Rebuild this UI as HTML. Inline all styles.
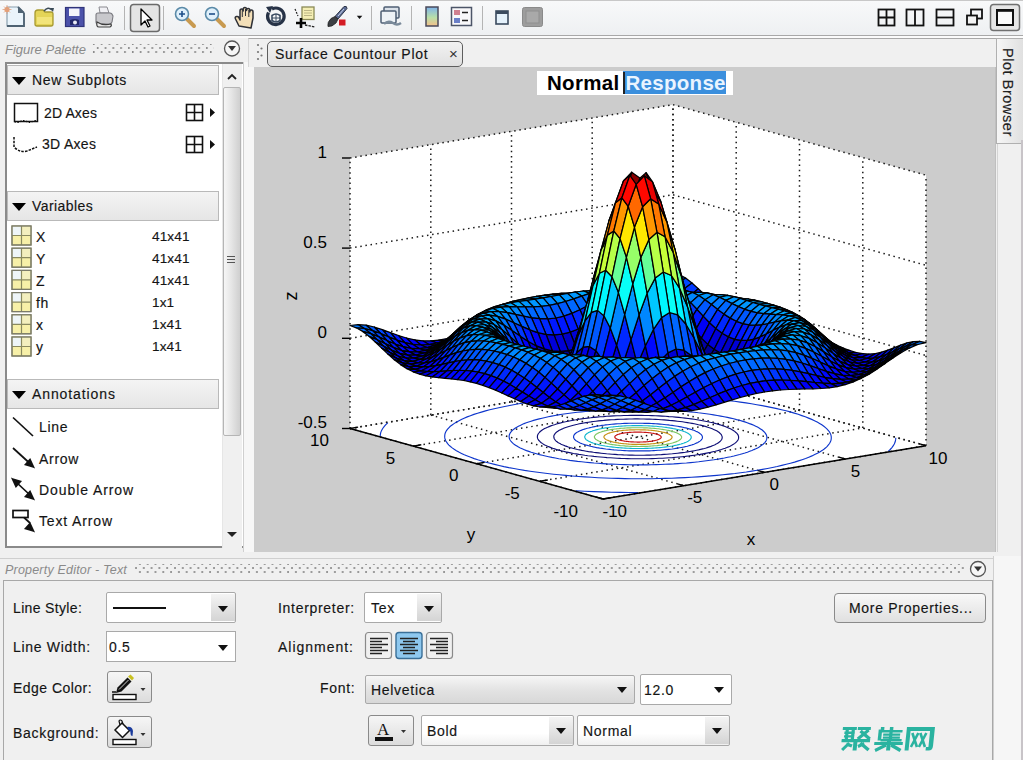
<!DOCTYPE html>
<html><head><meta charset="utf-8">
<style>
*{box-sizing:border-box}
html,body{margin:0;padding:0}
body{width:1023px;height:760px;position:relative;overflow:hidden;background:#f0f0f0;font-family:"Liberation Sans",sans-serif;color:#1e1e1e}
.a{position:absolute}
.t{position:absolute;white-space:nowrap;font-size:14px;letter-spacing:0.7px;line-height:16px;color:#141414;-webkit-text-stroke:0.15px #141414}
.sep{position:absolute;top:5px;width:2px;height:26px;border-left:1px solid #b8b8b8;border-right:1px solid #fff}
.hdr{position:absolute;left:7px;width:212px;height:30px;background:linear-gradient(#f4f4f4,#e6e6e6);border:1px solid #b9b9b9}
.hdr .tri{position:absolute;left:3.5px;top:11px;width:0;height:0;border-left:7px solid transparent;border-right:7px solid transparent;border-top:8px solid #000}
.hdr span{position:absolute;left:24px;top:6px;font-size:14px;letter-spacing:0.9px;white-space:nowrap;color:#141414;-webkit-text-stroke:0.15px #141414}
.combo{position:absolute;background:#fff;border:1px solid #a9a9a9;border-radius:2px}
.darr{position:absolute;width:0;height:0;border-left:5px solid transparent;border-right:5px solid transparent;border-top:6px solid #111}
.btn{position:absolute;border:1px solid #8a8a8a;border-radius:3px;background:linear-gradient(#f6f6f6,#dcdcdc)}
</style></head>
<body>
<!-- toolbar -->
<div class="a" style="left:0;top:0;width:1023px;height:36px;background:linear-gradient(#f8f9fa,#eef0f2);border-top:1px solid #c8c8c8;border-bottom:1px solid #a8a8a8"></div>
<div class="a" style="left:0;top:36px;width:1023px;height:2px;background:#fbfbfb"></div>
<svg class="a" style="left:0;top:0" width="1023" height="36">
  <!-- new -->
 <path d="M7 7h11l6 6v13H7z" fill="#eaf4fb" stroke="#8aa0b0" stroke-width="1.2"/>
 <path d="M18 7l6 6M24 13v13H7" fill="none" stroke="#4e6272" stroke-width="1.8"/>
 <path d="M18 7v6h6z" fill="#4e6272"/>
 <circle cx="7" cy="9.5" r="2.6" fill="#e8a070"/>
 <path d="M7 5v9M2.5 9.5h9M4 6.5l6 6M10 6.5l-6 6" stroke="#e0a080" stroke-width="0.8"/>
 <!-- open -->
 <path d="M35 13q0-3 3-3h5l2 2h6q2 0 2 2v10q0 2-2 2H37q-2 0-2-2z" fill="#e4d458" stroke="#a89a30" stroke-width="1.3"/>
 <path d="M37 17h15v7H37z" fill="#f2e47a"/>
 <path d="M44 11q4-5 8-1" fill="none" stroke="#3a4a56" stroke-width="1.5"/>
 <path d="M50 8l4 0-1 4z" fill="#3a4a56"/>
 <!-- save -->
 <rect x="65.5" y="7.5" width="18.5" height="19" fill="#4c52aa" stroke="#30347a" stroke-width="1.2"/>
 <rect x="69" y="8.5" width="10.5" height="7.5" fill="#f4f4fa"/>
 <path d="M70 20q5-2 9 0v5h-9z" fill="#23286a"/>
 <circle cx="75" cy="22.5" r="2" fill="#e8eaf6"/>
 <!-- print -->
 <path d="M99 7h8l2 6h-9z" fill="#f0f0f4" stroke="#8a8a90" stroke-width="1"/>
 <path d="M96 15q0-2 2-2h12q2 0 3 3l-1 6q-1 2-3 2H98q-2 0-2-2z" fill="#c8c8cc" stroke="#7a7a80" stroke-width="1.1"/>
 <path d="M97 22q6 4 14 2q1 2-1 3H99q-3 0-2-5z" fill="#e8e8e8" stroke="#3e3e3e" stroke-width="1.2"/>
<!-- pointer pressed -->
 <rect x="130.5" y="4.5" width="29" height="27" rx="3" fill="#e4e4e4" stroke="#6a6a6a" stroke-width="1.5"/>
 <path d="M141 9v16l4-4 3 6 2-1-3-6h5z" fill="#fff" stroke="#000" stroke-width="1.3" stroke-linejoin="round"/>
 <!-- zoom in -->
 <path d="M187 19l7 7" stroke="#c89a50" stroke-width="4" stroke-linecap="round"/>
 <circle cx="182" cy="14" r="6.5" fill="#dff0fb" stroke="#5a8aa8" stroke-width="1.6"/>
 <path d="M179 14h6M182 11v6" stroke="#1d4f8a" stroke-width="1.6"/>
 <!-- zoom out -->
 <path d="M217 19l7 7" stroke="#c89a50" stroke-width="4" stroke-linecap="round"/>
 <circle cx="212" cy="14" r="6.5" fill="#dff0fb" stroke="#5a8aa8" stroke-width="1.6"/>
 <path d="M209 14h6" stroke="#1d4f8a" stroke-width="1.6"/>
 <!-- hand -->
 <path d="M239 26l-3.5-7q-1-2 1-2.5t2.5 1.5l1 2v-9q0-2 1.6-2t1.6 2v-1.5q0-2 1.7-2t1.6 2v1q0-2 1.7-2t1.6 2v1.5q0-2 1.6-2t1.6 2v6l-2 10z" fill="#f3dfb8" stroke="#2e3036" stroke-width="1.5" stroke-linejoin="round"/>
 <path d="M242.3 10v7M245.5 9v7M248.8 10v7" stroke="#2e3036" stroke-width="1"/>
 <!-- rotate -->
 <path d="M268.5 12.5A8.3 8.3 0 1 0 272 9" fill="none" stroke="#263246" stroke-width="3.2"/>
 <path d="M266 7l7-1-3 7z" fill="#263246"/>
 <path d="M272 15.5q4-3 8 0v5q-4 3-8 0z" fill="none" stroke="#394a60" stroke-width="1.6"/>
 <path d="M276 14v8M272 18h8" stroke="#394a60" stroke-width="1"/>
 <!-- data cursor -->
 <rect x="302" y="7" width="12" height="12.5" fill="#f4eeb4" stroke="#8a8a56" stroke-width="1.3"/>
 <path d="M304 10.5h8M304 13h8M304 15.5h8" stroke="#b4ae80" stroke-width="0.9"/>
 <path d="M296 23h10M301 18v10" stroke="#050505" stroke-width="2.6"/>
 <path d="M295 9l3 7" stroke="#222" stroke-width="1.2" stroke-dasharray="2 1.2"/>
 <path d="M305 25l10 2" stroke="#222" stroke-width="1.3" stroke-dasharray="2.5 1"/>
 <!-- brush -->
 <path d="M344 6.5q3-1 3 2l-9 10.5-3-2.5z" fill="#5b6b94" stroke="#2d3446" stroke-width="1"/>
 <path d="M344 9l-6 7" stroke="#c8d4ec" stroke-width="1"/>
 <path d="M335 16.5l3 2.5-2 4q-4 4-8 3.5q-1-4 3-8z" fill="#3c3f44" stroke="#222" stroke-width="0.8"/>
 <rect x="339" y="19.5" width="6.5" height="6" fill="#d41c24"/>
 <path d="M356.8 15.7h5.5l-2.75 3.2z" fill="#111"/>
 <!-- link -->
 <rect x="384" y="7" width="15" height="11" rx="1" fill="#dbe2ea" stroke="#4f5f74" stroke-width="1.5"/>
 <rect x="381" y="11" width="15" height="12" rx="1" fill="#eef2f6" stroke="#4f5f74" stroke-width="1.5"/>
 <path d="M384 24q4-4 9-1q4 3 8 0" fill="none" stroke="#7a8a9a" stroke-width="2.4"/>
 <!-- colorbar -->
 <defs><linearGradient id="cb" x1="0" y1="0" x2="0" y2="1"><stop offset="0" stop-color="#7fb3ea"/><stop offset="0.55" stop-color="#b9dfa8"/><stop offset="1" stop-color="#f4c08a"/></linearGradient></defs>
 <rect x="426" y="7" width="12" height="19" fill="url(#cb)" stroke="#4a4a5a" stroke-width="1.5"/>
 <!-- legend -->
 <rect x="451.5" y="7.5" width="20" height="18" fill="#f8f8fa" stroke="#4c5568" stroke-width="1.5"/>
 <rect x="454" y="10" width="6" height="5" fill="#d08090"/>
 <rect x="454" y="18" width="6" height="5" fill="#6a7fc8"/>
 <path d="M462 12.5h6M462 20.5h6" stroke="#222" stroke-width="1.5"/>
 <!-- small window -->
 <rect x="496" y="11" width="12" height="13" fill="#e4f1fb" stroke="#3a4a5e" stroke-width="1.6"/>
 <rect x="496" y="11" width="12" height="3" fill="#3a4a5e"/>
 <!-- gray icon -->
 <rect x="522.5" y="7.5" width="20" height="19" rx="2" fill="#9d9d9d" stroke="#8a8a8a"/>
 <rect x="526" y="11" width="13" height="12" fill="#a9a9a9" stroke="#8f8f8f"/>
 <!-- right layout icons -->
 <g fill="none" stroke="#111" stroke-width="1.8">
  <rect x="878.5" y="9.5" width="16" height="16"/><path d="M886.5 9.5v16M878.5 17.5h16"/>
  <rect x="906.5" y="9.5" width="17" height="16"/><path d="M915 9.5v16"/>
  <rect x="936.5" y="9.5" width="17" height="16"/><path d="M936.5 17.5h17"/>
  <rect x="971" y="9.5" width="11" height="9"/><rect x="967" y="15.5" width="10" height="9" fill="#f3f3f3"/>
 </g>
 <rect x="990.5" y="4.5" width="29" height="26" rx="3" fill="#e6e6e6" stroke="#707070" stroke-width="1.5"/>
 <rect x="997" y="10" width="16" height="15" fill="#fbfbfb" stroke="#111" stroke-width="2"/><path d="M997 10.5h16" stroke="#111" stroke-width="2.6"/>
 <!-- separators -->
 <g stroke="#b4b4b4" stroke-width="1">
  <path d="M124.5 6v24M163.5 6v24M371.5 6v24M411.5 6v24M482.5 6v24"/>
 </g>
</svg>

<!-- left palette -->
<div class="a" style="left:0;top:38px;width:254px;height:516px;background:#f0f0f0"></div>
<div class="t" style="left:5px;top:42px;font-size:13px;font-style:italic;color:#8a8a8a;letter-spacing:0;-webkit-text-stroke:0">Figure Palette</div>
<svg class="a" style="left:92px;top:44px" width="122" height="10"><defs><pattern id="dp" width="7.8" height="8" patternUnits="userSpaceOnUse"><circle cx="5.7" cy="4" r="0.95" fill="#7a7a7a"/><circle cx="1.8" cy="8" r="0.95" fill="#7a7a7a"/><circle cx="1.8" cy="0" r="0.95" fill="#7a7a7a"/></pattern></defs><rect x="0" y="0" width="122" height="10" fill="url(#dp)"/></svg>
<svg class="a" style="left:222px;top:39px" width="20" height="20"><circle cx="10" cy="9.5" r="7.5" fill="#f6f6f6" stroke="#555" stroke-width="1.3"/><path d="M6 7h8l-4 5z" fill="#333"/></svg>
<div class="a" style="left:5px;top:62px;width:240px;height:486px;background:#fff;border:2px solid #8a8a8a;border-right-width:1px"></div>
<div class="a" style="left:243px;top:62px;width:11px;height:490px;background:#f7f7f7;border-left:1px solid #d0d0d0"></div>
<!-- scrollbar -->
<div class="a" style="left:222px;top:64px;width:20px;height:484px;background:#f0f0f0;border-left:1px solid #e6e6e6"></div>
<div class="a" style="left:223px;top:87px;width:18px;height:349px;background:linear-gradient(90deg,#f6f6f6,#e6e6e6 45%,#cfcfcf);border:1px solid #b5b5b5;border-radius:2px"></div>
<div class="a" style="left:227px;top:256px;width:8px;height:7px;background:repeating-linear-gradient(#555 0 1px,transparent 1px 3px)"></div>
<svg class="a" style="left:222px;top:64px" width="20" height="484"><path d="M6 15l4-4 4 4" fill="none" stroke="#222" stroke-width="1.8"/><path d="M5 468h10l-5 5z" fill="#222"/></svg>

<div class="hdr" style="top:65px"><div class="tri"></div><span style="letter-spacing:0.72px">New Subplots</span></div>
<svg class="a" style="left:10px;top:98px" width="212" height="60">
 <path d="M4.5 5.5h23v18h-23z" fill="none" stroke="#111" stroke-width="1.5"/>
 <path d="M4.5 23.5q3 2 6 0t6 0t6 0t5 0" fill="none" stroke="#111" stroke-width="1.2" stroke-dasharray="1.5 1.5"/>
 <path d="M4 39v10q6 6 13 4q5-2 10-4" fill="none" stroke="#111" stroke-width="1.5" stroke-dasharray="2.5 1.2"/>
 <g fill="none" stroke="#111" stroke-width="1.6"><rect x="176.5" y="6.5" width="16" height="16"/><path d="M184.5 6.5v16M176.5 14.5h16"/>
 <rect x="176.5" y="38.5" width="16" height="16"/><path d="M184.5 38.5v16M176.5 46.5h16"/></g>
 <path d="M200 10l5 4.5-5 4.5z M200 42l5 4.5-5 4.5z" fill="#111"/>
</svg>
<div class="t" style="left:44px;top:105px;letter-spacing:0.13px">2D Axes</div>
<div class="t" style="left:42px;top:136px;letter-spacing:0.3px">3D Axes</div>

<div class="hdr" style="top:191px"><div class="tri"></div><span style="letter-spacing:0.42px">Variables</span></div>
<svg class="a" style="left:11px;top:225px" width="22" height="134">
 <g stroke="#8a8a60" stroke-width="1.2">
 <g id="vi"><rect x="1" y="1" width="19" height="19" fill="#f7f0a8"/><rect x="1.5" y="1.5" width="9" height="9" fill="#eef5f8" stroke="none"/><rect x="10.5" y="1.5" width="9" height="9" fill="#f3efbe" stroke="none"/><path d="M10.5 1v19M1 10.5h19" fill="none"/><rect x="1" y="1" width="19" height="19" fill="none" stroke="#7a7a6a"/></g>
 <use href="#vi" y="22.2"/><use href="#vi" y="44.4"/><use href="#vi" y="66.6"/><use href="#vi" y="88.8"/><use href="#vi" y="111"/>
 </g>
</svg>
<div class="t" style="left:36px;top:229px">X</div><div class="t" style="left:152px;top:229px;letter-spacing:0.1px;font-size:13.6px">41x41</div>
<div class="t" style="left:36px;top:251px">Y</div><div class="t" style="left:152px;top:251px;letter-spacing:0.1px;font-size:13.6px">41x41</div>
<div class="t" style="left:36px;top:273px">Z</div><div class="t" style="left:152px;top:273px;letter-spacing:0.1px;font-size:13.6px">41x41</div>
<div class="t" style="left:36px;top:295px">fh</div><div class="t" style="left:152px;top:295px;letter-spacing:0.1px;font-size:13.6px">1x1</div>
<div class="t" style="left:36px;top:317px">x</div><div class="t" style="left:152px;top:317px;letter-spacing:0.1px;font-size:13.6px">1x41</div>
<div class="t" style="left:36px;top:339px">y</div><div class="t" style="left:152px;top:339px;letter-spacing:0.1px;font-size:13.6px">1x41</div>

<div class="hdr" style="top:379px"><div class="tri"></div><span>Annotations</span></div>
<svg class="a" style="left:10px;top:410px" width="30" height="125">
 <g stroke="#111" stroke-width="1.7" fill="#111">
 <path d="M3 7.5l20 18.5" fill="none"/>
 <path d="M3 38l17 15.5" fill="none"/><path d="M23.5 57l-8-2.5 4.5-5z"/>
 <path d="M6 72l14 13" fill="none"/><path d="M23.5 89l-8-2.5 4.5-5z M2.5 69l8 2.5-4.5 5z"/>
 <rect x="3" y="100.5" width="15" height="7" fill="none"/><path d="M14 107.5l6 5.5" fill="none"/><path d="M23.5 121l-8-2.5 4.5-5z"/>
 </g>
</svg>
<div class="t" style="left:39px;top:419px">Line</div>
<div class="t" style="left:39px;top:451px">Arrow</div>
<div class="t" style="left:39px;top:482px;letter-spacing:0.92px">Double Arrow</div>
<div class="t" style="left:39px;top:513px;letter-spacing:0.85px">Text Arrow</div>

<!-- figure area -->
<div class="a" style="left:248px;top:38px;width:749px;height:29px;background:#f0f0f0;border-top:1px solid #a8a8a8;border-left:1px solid #d6d6d6"></div>
<svg class="a" style="left:255px;top:42px" width="10" height="22"><g fill="#777"><circle cx="3" cy="3" r="1.1"/><circle cx="6.5" cy="6.5" r="1.1"/><circle cx="3" cy="10" r="1.1"/><circle cx="6.5" cy="13.5" r="1.1"/><circle cx="3" cy="17" r="1.1"/></g></svg>
<div class="a" style="left:267px;top:41px;width:196px;height:26px;border:1.6px solid #5e5e5e;border-radius:5px;background:linear-gradient(#f2f2f2,#e0e0e0)"></div>
<div class="t" style="left:275px;top:46px;letter-spacing:0.75px">Surface Countour Plot</div>
<div class="t" style="left:449px;top:46px;font-size:15px;color:#333;-webkit-text-stroke:0">&#215;</div>
<div class="a" style="left:254px;top:67px;width:742px;height:485px;background:#cccccc;overflow:hidden;border-right:1px solid #bfbfbf">
 <div class="a" style="left:-254px;top:-67px;width:1023px;height:760px">
<svg width="1023" height="760" style="position:absolute;left:0;top:0">
<style>.gd{stroke:#1a1a1a;stroke-width:1.5;stroke-dasharray:1.5 3.7}</style>
<polygon points="350,428.5 673,375.2 673,104.7 350,158" fill="#fff"/><polygon points="673,375.2 926,445.7 926,175.2 673,104.7" fill="#fff"/><polygon points="350,428.5 603,499 926,445.7 673,375.2" fill="#fff"/><g><line x1="350" y1="428.5" x2="350" y2="158" class="gd"/><line x1="430.8" y1="415.1" x2="430.8" y2="144.6" class="gd"/><line x1="511.5" y1="401.8" x2="511.5" y2="131.3" class="gd"/><line x1="592.2" y1="388.5" x2="592.2" y2="118" class="gd"/><line x1="673" y1="375.2" x2="673" y2="104.7" class="gd"/><line x1="350" y1="428.5" x2="673" y2="375.2" class="gd"/><line x1="350" y1="338.3" x2="673" y2="285" class="gd"/><line x1="350" y1="248.1" x2="673" y2="194.8" class="gd"/><line x1="350" y1="158" x2="673" y2="104.7" class="gd"/><line x1="673" y1="375.2" x2="673" y2="104.7" class="gd"/><line x1="736.2" y1="392.8" x2="736.2" y2="122.3" class="gd"/><line x1="799.5" y1="410.4" x2="799.5" y2="139.9" class="gd"/><line x1="862.8" y1="428" x2="862.8" y2="157.5" class="gd"/><line x1="926" y1="445.7" x2="926" y2="175.2" class="gd"/><line x1="673" y1="375.2" x2="926" y2="445.7" class="gd"/><line x1="673" y1="285" x2="926" y2="355.5" class="gd"/><line x1="673" y1="194.8" x2="926" y2="265.3" class="gd"/><line x1="673" y1="104.7" x2="926" y2="175.2" class="gd"/><line x1="350" y1="428.5" x2="603" y2="499" class="gd"/><line x1="430.8" y1="415.1" x2="683.8" y2="485.6" class="gd"/><line x1="511.5" y1="401.8" x2="764.5" y2="472.3" class="gd"/><line x1="592.2" y1="388.5" x2="845.2" y2="459" class="gd"/><line x1="673" y1="375.2" x2="926" y2="445.7" class="gd"/><line x1="603" y1="499" x2="926" y2="445.7" class="gd"/><line x1="539.8" y1="481.3" x2="862.8" y2="428" class="gd"/><line x1="476.5" y1="463.7" x2="799.5" y2="410.4" class="gd"/><line x1="413.2" y1="446.1" x2="736.2" y2="392.8" class="gd"/><line x1="350" y1="428.5" x2="673" y2="375.2" class="gd"/></g><g fill="none" stroke-width="1.15"><polyline points="704.3,426.1 702.4,425.6 700.5,425.1 698.5,424.7 696.4,424.2 694.3,423.8 692,423.4 689.8,423 687.4,422.6 685,422.2 682.5,421.8 680,421.5 677.4,421.2 674.8,420.9 672.2,420.6 669.4,420.4 666.7,420.1 663.9,419.9 661.1,419.7 658.3,419.5 655.4,419.4 652.5,419.3 649.6,419.1 646.7,419.1 643.8,419 640.8,419 637.9,418.9 635,418.9 632,419 629.1,419 626.2,419.1 623.3,419.2 620.4,419.3 617.5,419.4 614.7,419.6 611.9,419.7 609.1,419.9 606.4,420.1 603.7,420.4 601,420.6 598.4,420.9 595.8,421.2 593.3,421.5 590.8,421.9 588.4,422.2 586.1,422.6 583.8,423 581.6,423.4 579.4,423.8 577.4,424.3 575.4,424.7 573.4,425.2 571.6,425.7 569.8,426.2 568.1,426.7 566.5,427.2 565,427.7 563.6,428.3 562.3,428.9 561,429.4 559.9,430 558.8,430.6 557.9,431.2 557,431.8 556.3,432.4 555.6,433 555.1,433.6 554.6,434.3 554.2,434.9 554,435.5 553.8,436.1 553.8,436.8 553.9,437.4 554,438 554.3,438.7 554.6,439.3 555.1,439.9 555.7,440.6 556.3,441.2 557.1,441.8 557.9,442.4 558.9,443 560,443.6 561.1,444.2 562.4,444.8 563.7,445.3 565.1,445.9 566.6,446.4 568.3,447 569.9,447.5 571.7,448 573.6,448.5 575.5,449 577.5,449.5 579.6,449.9 581.7,450.4 584,450.8 586.2,451.2 588.6,451.6 591,451.9 593.5,452.3 596,452.6 598.6,452.9 601.2,453.2 603.8,453.5 606.6,453.8 609.3,454 612.1,454.2 614.9,454.4 617.7,454.6 620.6,454.7 623.5,454.9 626.4,455 629.3,455.1 632.2,455.1 635.2,455.2 638.1,455.2 641,455.2 644,455.2 646.9,455.1 649.8,455.1 652.7,455 655.6,454.9 658.5,454.7 661.3,454.6 664.1,454.4 666.9,454.2 669.6,454 672.3,453.8 675,453.5 677.6,453.2 680.2,452.9 682.7,452.6 685.2,452.3 687.6,451.9 689.9,451.5 692.2,451.1 694.4,450.7 696.6,450.3 698.6,449.9 700.6,449.4 702.6,448.9 704.4,448.5 706.2,448 707.9,447.4 709.5,446.9 711,446.4 712.4,445.8 713.7,445.3 715,444.7 716.1,444.1 717.2,443.5 718.1,442.9 719,442.3 719.7,441.7 720.4,441.1 720.9,440.5 721.4,439.9 721.8,439.2 722,438.6 722.2,438 722.2,437.4 722.1,436.7 722,436.1 721.7,435.5 721.4,434.8 720.9,434.2 720.3,433.6 719.7,433 718.9,432.3 718.1,431.7 717.1,431.1 716,430.5 714.9,430 713.6,429.4 712.3,428.8 710.9,428.2 709.4,427.7 707.7,427.2 706.1,426.6 704.3,426.1" stroke="#0e0e76"/><polyline points="717.2,424 715,423.4 712.7,422.8 710.3,422.3 707.8,421.7 705.3,421.2 702.6,420.7 699.9,420.2 697.1,419.7 694.2,419.3 691.2,418.9 688.2,418.5 685.1,418.1 682,417.7 678.8,417.4 675.6,417.1 672.3,416.8 669,416.6 665.6,416.3 662.2,416.1 658.8,415.9 655.4,415.8 651.9,415.6 648.4,415.5 644.9,415.5 641.4,415.4 637.9,415.4 634.4,415.4 630.9,415.4 627.4,415.5 623.9,415.5 620.4,415.7 617,415.8 613.5,415.9 610.1,416.1 606.8,416.3 603.5,416.6 600.2,416.8 596.9,417.1 593.8,417.4 590.6,417.8 587.6,418.1 584.6,418.5 581.6,418.9 578.7,419.3 575.9,419.8 573.2,420.2 570.6,420.7 568,421.2 565.5,421.8 563.1,422.3 560.8,422.9 558.6,423.4 556.5,424 554.5,424.7 552.6,425.3 550.8,425.9 549.1,426.6 547.5,427.3 546,427.9 544.6,428.6 543.4,429.3 542.2,430 541.2,430.8 540.3,431.5 539.5,432.2 538.9,433 538.3,433.7 537.9,434.5 537.6,435.2 537.4,436 537.4,436.7 537.4,437.5 537.6,438.2 537.9,439 538.3,439.7 538.9,440.5 539.6,441.2 540.4,442 541.3,442.7 542.3,443.4 543.5,444.2 544.7,444.9 546.1,445.6 547.6,446.3 549.2,446.9 550.9,447.6 552.7,448.3 554.6,448.9 556.6,449.5 558.8,450.1 561,450.7 563.3,451.3 565.7,451.9 568.2,452.4 570.7,452.9 573.4,453.5 576.1,453.9 578.9,454.4 581.8,454.8 584.8,455.3 587.8,455.7 590.9,456 594,456.4 597.2,456.7 600.4,457 603.7,457.3 607,457.6 610.4,457.8 613.8,458 617.2,458.2 620.6,458.4 624.1,458.5 627.6,458.6 631.1,458.7 634.6,458.7 638.1,458.7 641.6,458.7 645.1,458.7 648.6,458.7 652.1,458.6 655.6,458.5 659,458.3 662.5,458.2 665.9,458 669.2,457.8 672.5,457.6 675.8,457.3 679.1,457 682.2,456.7 685.4,456.4 688.4,456 691.4,455.6 694.4,455.2 697.3,454.8 700.1,454.4 702.8,453.9 705.4,453.4 708,452.9 710.5,452.4 712.9,451.8 715.2,451.3 717.4,450.7 719.5,450.1 721.5,449.5 723.4,448.8 725.2,448.2 726.9,447.5 728.5,446.9 730,446.2 731.4,445.5 732.6,444.8 733.8,444.1 734.8,443.4 735.7,442.6 736.5,441.9 737.1,441.2 737.7,440.4 738.1,439.7 738.4,438.9 738.6,438.2 738.6,437.4 738.6,436.7 738.4,435.9 738.1,435.1 737.7,434.4 737.1,433.6 736.4,432.9 735.6,432.2 734.7,431.4 733.7,430.7 732.5,430 731.3,429.3 729.9,428.6 728.4,427.9 726.8,427.2 725.1,426.5 723.3,425.9 721.4,425.2 719.4,424.6 717.2,424" stroke="#0e0e76"/><polyline points="688.7,428.7 687.3,428.3 685.8,427.9 684.3,427.6 682.7,427.2 681.1,426.9 679.4,426.6 677.6,426.3 675.8,426 674,425.7 672.1,425.4 670.2,425.2 668.2,424.9 666.2,424.7 664.1,424.5 662.1,424.3 660,424.1 657.8,423.9 655.7,423.8 653.5,423.6 651.3,423.5 649.1,423.4 646.9,423.3 644.7,423.3 642.4,423.2 640.2,423.2 637.9,423.2 635.7,423.2 633.4,423.2 631.2,423.2 629,423.3 626.7,423.4 624.5,423.4 622.3,423.5 620.2,423.7 618,423.8 615.9,423.9 613.8,424.1 611.7,424.3 609.7,424.5 607.7,424.7 605.7,424.9 603.8,425.2 601.9,425.4 600.1,425.7 598.3,426 596.5,426.3 594.8,426.6 593.2,426.9 591.6,427.3 590.1,427.6 588.6,428 587.2,428.3 585.8,428.7 584.5,429.1 583.3,429.5 582.1,429.9 581.1,430.4 580,430.8 579.1,431.2 578.2,431.7 577.4,432.1 576.7,432.6 576,433 575.4,433.5 574.9,434 574.5,434.4 574.2,434.9 573.9,435.4 573.7,435.9 573.6,436.4 573.6,436.8 573.6,437.3 573.7,437.8 573.9,438.3 574.2,438.8 574.5,439.3 575,439.7 575.5,440.2 576.1,440.7 576.7,441.1 577.5,441.6 578.3,442.1 579.2,442.5 580.1,443 581.1,443.4 582.2,443.8 583.4,444.2 584.6,444.6 585.9,445 587.3,445.4 588.7,445.8 590.2,446.2 591.7,446.5 593.3,446.9 594.9,447.2 596.6,447.6 598.4,447.9 600.2,448.2 602,448.4 603.9,448.7 605.8,449 607.8,449.2 609.8,449.4 611.9,449.7 613.9,449.9 616,450 618.2,450.2 620.3,450.3 622.5,450.5 624.7,450.6 626.9,450.7 629.1,450.8 631.3,450.8 633.6,450.9 635.8,450.9 638.1,450.9 640.3,450.9 642.6,450.9 644.8,450.9 647,450.8 649.3,450.8 651.5,450.7 653.7,450.6 655.8,450.5 658,450.3 660.1,450.2 662.2,450 664.3,449.8 666.3,449.6 668.3,449.4 670.3,449.2 672.2,449 674.1,448.7 675.9,448.4 677.7,448.1 679.5,447.8 681.2,447.5 682.8,447.2 684.4,446.9 685.9,446.5 687.4,446.2 688.8,445.8 690.2,445.4 691.5,445 692.7,444.6 693.9,444.2 694.9,443.8 696,443.3 696.9,442.9 697.8,442.5 698.6,442 699.3,441.6 700,441.1 700.6,440.6 701.1,440.2 701.5,439.7 701.8,439.2 702.1,438.7 702.3,438.3 702.4,437.8 702.4,437.3 702.4,436.8 702.3,436.3 702.1,435.8 701.8,435.4 701.5,434.9 701,434.4 700.5,433.9 699.9,433.5 699.3,433 698.5,432.5 697.7,432.1 696.8,431.6 695.9,431.2 694.9,430.7 693.8,430.3 692.6,429.9 691.4,429.5 690.1,429.1 688.7,428.7" stroke="#0e36cc"/><polyline points="739.5,420.3 736.6,419.6 733.7,418.8 730.6,418.1 727.4,417.4 724.1,416.7 720.7,416.1 717.2,415.5 713.6,414.9 709.9,414.3 706.2,413.8 702.3,413.2 698.4,412.8 694.4,412.3 690.3,411.9 686.1,411.5 681.9,411.1 677.7,410.8 673.4,410.5 669,410.2 664.6,410 660.2,409.8 655.8,409.6 651.3,409.5 646.8,409.4 642.3,409.3 637.8,409.3 633.3,409.3 628.8,409.3 624.4,409.4 619.9,409.5 615.5,409.6 611,409.8 606.7,410 602.3,410.3 598,410.5 593.8,410.8 589.6,411.2 585.4,411.5 581.4,411.9 577.3,412.3 573.4,412.8 569.6,413.3 565.8,413.8 562.1,414.3 558.5,414.9 555,415.5 551.6,416.1 548.3,416.8 545.2,417.5 542.1,418.2 539.2,418.9 536.3,419.6 533.6,420.4 531.1,421.2 528.6,422 526.3,422.8 524.1,423.6 522.1,424.5 520.2,425.4 518.4,426.3 516.8,427.2 515.4,428.1 514.1,429 512.9,429.9 511.9,430.9 511,431.8 510.3,432.8 509.8,433.7 509.4,434.7 509.2,435.7 509.1,436.6 509.2,437.6 509.4,438.6 509.8,439.5 510.4,440.5 511.1,441.5 512,442.4 513,443.4 514.1,444.3 515.5,445.2 516.9,446.1 518.5,447.1 520.3,448 522.2,448.8 524.3,449.7 526.5,450.6 528.8,451.4 531.2,452.2 533.8,453 536.5,453.8 539.4,454.6 542.3,455.3 545.4,456 548.6,456.7 551.9,457.4 555.3,458 558.8,458.7 562.4,459.3 566.1,459.8 569.8,460.4 573.7,460.9 577.6,461.4 581.6,461.8 585.7,462.2 589.9,462.6 594.1,463 598.3,463.3 602.6,463.6 607,463.9 611.4,464.1 615.8,464.3 620.2,464.5 624.7,464.6 629.2,464.7 633.7,464.8 638.2,464.8 642.7,464.8 647.2,464.8 651.6,464.7 656.1,464.6 660.5,464.5 665,464.3 669.3,464.1 673.7,463.9 678,463.6 682.2,463.3 686.4,463 690.6,462.6 694.6,462.2 698.7,461.8 702.6,461.3 706.4,460.8 710.2,460.3 713.9,459.8 717.5,459.2 721,458.6 724.4,458 727.7,457.3 730.8,456.7 733.9,456 736.8,455.2 739.7,454.5 742.4,453.7 744.9,453 747.4,452.2 749.7,451.3 751.9,450.5 753.9,449.6 755.8,448.8 757.6,447.9 759.2,447 760.6,446.1 761.9,445.1 763.1,444.2 764.1,443.3 765,442.3 765.7,441.4 766.2,440.4 766.6,439.4 766.8,438.5 766.9,437.5 766.8,436.5 766.6,435.6 766.2,434.6 765.6,433.6 764.9,432.7 764,431.7 763,430.8 761.9,429.8 760.5,428.9 759.1,428 757.5,427.1 755.7,426.2 753.8,425.3 751.7,424.4 749.5,423.6 747.2,422.7 744.8,421.9 742.2,421.1 739.5,420.3" stroke="#0e36cc"/><polyline points="790.2,411.9 786,410.8 781.5,409.7 776.9,408.6 772.1,407.6 767.2,406.6 762.1,405.6 756.8,404.7 751.5,403.8 745.9,402.9 740.3,402.1 734.5,401.3 728.6,400.6 722.5,399.9 716.4,399.3 710.2,398.7 703.9,398.2 697.5,397.7 691.1,397.2 684.5,396.8 678,396.5 671.3,396.2 664.7,395.9 658,395.7 651.2,395.6 644.5,395.5 637.8,395.4 631,395.4 624.3,395.5 617.6,395.6 610.9,395.7 604.2,395.9 597.6,396.2 591,396.5 584.5,396.9 578,397.3 571.6,397.7 565.4,398.2 559.1,398.8 553,399.3 547,400 541.1,400.7 535.3,401.4 529.7,402.2 524.2,403 518.8,403.8 513.5,404.7 508.5,405.7 503.5,406.7 498.8,407.7 494.2,408.7 489.7,409.8 485.5,410.9 481.4,412.1 477.6,413.2 473.9,414.4 470.4,415.7 467.2,416.9 464.1,418.2 461.3,419.5 458.6,420.9 456.2,422.2 454,423.6 452.1,425 450.3,426.3 448.8,427.8 447.6,429.2 446.5,430.6 445.7,432.1 445.1,433.5 444.8,435 444.7,436.4 444.8,437.9 445.1,439.3 445.7,440.8 446.6,442.2 447.6,443.6 448.9,445.1 450.5,446.5 452.2,447.9 454.2,449.3 456.4,450.7 458.8,452.1 461.5,453.4 464.3,454.7 467.4,456 470.7,457.3 474.2,458.6 477.8,459.8 481.7,461 485.8,462.2 490,463.3 494.5,464.4 499.1,465.5 503.9,466.6 508.8,467.6 513.9,468.5 519.2,469.5 524.5,470.4 530.1,471.2 535.7,472 541.5,472.8 547.4,473.5 553.5,474.2 559.6,474.8 565.8,475.4 572.1,476 578.5,476.5 584.9,476.9 591.5,477.3 598,477.7 604.7,478 611.3,478.2 618,478.4 624.8,478.6 631.5,478.7 638.2,478.7 645,478.7 651.7,478.7 658.4,478.5 665.1,478.4 671.8,478.2 678.4,477.9 685,477.6 691.5,477.3 698,476.9 704.4,476.4 710.6,475.9 716.9,475.4 723,474.8 729,474.1 734.9,473.5 740.7,472.7 746.3,472 751.8,471.1 757.2,470.3 762.5,469.4 767.5,468.5 772.5,467.5 777.2,466.5 781.8,465.4 786.3,464.3 790.5,463.2 794.6,462.1 798.4,460.9 802.1,459.7 805.6,458.5 808.8,457.2 811.9,455.9 814.7,454.6 817.4,453.3 819.8,451.9 822,450.6 823.9,449.2 825.7,447.8 827.2,446.4 828.4,444.9 829.5,443.5 830.3,442.1 830.9,440.6 831.2,439.2 831.3,437.7 831.2,436.3 830.9,434.8 830.3,433.4 829.4,431.9 828.4,430.5 827.1,429.1 825.5,427.6 823.8,426.2 821.8,424.8 819.6,423.4 817.2,422.1 814.5,420.7 811.7,419.4 808.6,418.1 805.3,416.8 801.8,415.6 798.2,414.3 794.3,413.1 790.2,411.9" stroke="#0e36cc"/><polyline points="700.1,383.4 691.3,382.9 682.5,382.5 673.6,382.2 664.6,381.9 655.7,381.7 646.7,381.6 637.7,381.5" stroke="#0e36cc"/><polyline points="387.8,422.8 385.8,424.7 384.1,426.6 382.7,428.5 381.6,430.4 380.8,432.3 380.4,434.2 380.2,436.2" stroke="#0e36cc"/><polyline points="575.9,490.7 584.7,491.2 593.5,491.6 602.4,491.9 611.4,492.2 620.3,492.4 629.3,492.5 638.3,492.6" stroke="#0e36cc"/><polyline points="888.2,451.4 890.2,449.5 891.9,447.6 893.3,445.7 894.4,443.7 895.2,441.8 895.6,439.9 895.8,437.9" stroke="#0e36cc"/><polyline points="679.9,430.1 678.7,429.8 677.5,429.5 676.3,429.2 674.9,428.9 673.6,428.7 672.2,428.4 670.7,428.1 669.2,427.9 667.7,427.7 666.2,427.4 664.6,427.2 662.9,427 661.3,426.8 659.6,426.7 657.9,426.5 656.2,426.3 654.4,426.2 652.6,426.1 650.8,426 649,425.9 647.2,425.8 645.3,425.7 643.5,425.7 641.6,425.6 639.8,425.6 637.9,425.6 636.1,425.6 634.2,425.6 632.4,425.6 630.5,425.7 628.7,425.7 626.9,425.8 625.1,425.9 623.3,426 621.5,426.1 619.7,426.2 618,426.4 616.3,426.5 614.6,426.7 612.9,426.9 611.3,427 609.7,427.2 608.2,427.5 606.6,427.7 605.2,427.9 603.7,428.2 602.3,428.4 601,428.7 599.6,429 598.4,429.3 597.2,429.6 596,429.9 594.9,430.2 593.8,430.5 592.8,430.8 591.9,431.2 591,431.5 590.1,431.9 589.3,432.2 588.6,432.6 587.9,433 587.3,433.3 586.8,433.7 586.3,434.1 585.9,434.5 585.5,434.9 585.3,435.3 585,435.7 584.9,436.1 584.8,436.5 584.7,436.9 584.8,437.3 584.9,437.7 585,438.1 585.3,438.5 585.6,438.9 585.9,439.3 586.3,439.7 586.8,440.1 587.4,440.4 588,440.8 588.7,441.2 589.4,441.6 590.2,441.9 591,442.3 591.9,442.6 592.9,443 593.9,443.3 595,443.7 596.1,444 597.3,444.3 598.5,444.6 599.7,444.9 601.1,445.2 602.4,445.5 603.8,445.7 605.3,446 606.8,446.2 608.3,446.5 609.8,446.7 611.4,446.9 613.1,447.1 614.7,447.3 616.4,447.5 618.1,447.6 619.8,447.8 621.6,447.9 623.4,448 625.2,448.1 627,448.2 628.8,448.3 630.7,448.4 632.5,448.5 634.4,448.5 636.2,448.5 638.1,448.5 639.9,448.5 641.8,448.5 643.6,448.5 645.5,448.4 647.3,448.4 649.1,448.3 650.9,448.2 652.7,448.1 654.5,448 656.3,447.9 658,447.8 659.7,447.6 661.4,447.5 663.1,447.3 664.7,447.1 666.3,446.9 667.8,446.7 669.4,446.5 670.8,446.2 672.3,446 673.7,445.7 675,445.4 676.4,445.2 677.6,444.9 678.8,444.6 680,444.3 681.1,444 682.2,443.6 683.2,443.3 684.1,443 685,442.6 685.9,442.3 686.7,441.9 687.4,441.5 688.1,441.2 688.7,440.8 689.2,440.4 689.7,440 690.1,439.6 690.5,439.2 690.7,438.8 691,438.4 691.1,438 691.2,437.6 691.3,437.2 691.2,436.8 691.1,436.4 691,436 690.7,435.6 690.4,435.3 690.1,434.9 689.7,434.5 689.2,434.1 688.6,433.7 688,433.3 687.3,432.9 686.6,432.6 685.8,432.2 685,431.8 684.1,431.5 683.1,431.1 682.1,430.8 681,430.5 679.9,430.1" stroke="#0eb5cc"/><polyline points="672.3,431.4 671.4,431.1 670.4,430.9 669.3,430.6 668.2,430.4 667.1,430.2 666,430 664.8,429.8 663.6,429.6 662.3,429.4 661.1,429.2 659.8,429 658.4,428.8 657.1,428.7 655.7,428.5 654.3,428.4 652.9,428.3 651.4,428.2 650,428.1 648.5,428 647,427.9 645.5,427.8 644,427.8 642.5,427.7 641,427.7 639.5,427.7 637.9,427.7 636.4,427.7 634.9,427.7 633.4,427.7 631.9,427.7 630.4,427.8 628.9,427.8 627.4,427.9 625.9,428 624.5,428.1 623,428.2 621.6,428.3 620.2,428.4 618.8,428.6 617.5,428.7 616.2,428.9 614.8,429 613.6,429.2 612.3,429.4 611.1,429.6 609.9,429.8 608.8,430 607.7,430.2 606.6,430.4 605.6,430.7 604.6,430.9 603.6,431.2 602.7,431.4 601.8,431.7 601,432 600.2,432.2 599.5,432.5 598.8,432.8 598.1,433.1 597.6,433.4 597,433.7 596.5,434 596.1,434.3 595.7,434.6 595.3,435 595.1,435.3 594.8,435.6 594.6,435.9 594.5,436.3 594.4,436.6 594.4,436.9 594.4,437.2 594.5,437.6 594.6,437.9 594.8,438.2 595.1,438.5 595.4,438.9 595.7,439.2 596.1,439.5 596.6,439.8 597,440.1 597.6,440.4 598.2,440.7 598.8,441 599.5,441.3 600.3,441.6 601.1,441.9 601.9,442.2 602.8,442.5 603.7,442.7 604.6,443 605.6,443.2 606.7,443.5 607.8,443.7 608.9,443.9 610,444.2 611.2,444.4 612.4,444.6 613.7,444.8 614.9,444.9 616.2,445.1 617.6,445.3 618.9,445.4 620.3,445.6 621.7,445.7 623.1,445.8 624.6,445.9 626,446.1 627.5,446.1 629,446.2 630.5,446.3 632,446.3 633.5,446.4 635,446.4 636.5,446.4 638.1,446.5 639.6,446.5 641.1,446.4 642.6,446.4 644.1,446.4 645.6,446.3 647.1,446.3 648.6,446.2 650.1,446.1 651.5,446 653,445.9 654.4,445.8 655.8,445.7 657.2,445.6 658.5,445.4 659.8,445.3 661.2,445.1 662.4,444.9 663.7,444.7 664.9,444.6 666.1,444.4 667.2,444.1 668.3,443.9 669.4,443.7 670.4,443.5 671.4,443.2 672.4,443 673.3,442.7 674.2,442.4 675,442.2 675.8,441.9 676.5,441.6 677.2,441.3 677.9,441 678.4,440.7 679,440.4 679.5,440.1 679.9,439.8 680.3,439.5 680.7,439.2 680.9,438.8 681.2,438.5 681.4,438.2 681.5,437.9 681.6,437.5 681.6,437.2 681.6,436.9 681.5,436.6 681.4,436.2 681.2,435.9 680.9,435.6 680.6,435.3 680.3,434.9 679.9,434.6 679.4,434.3 679,434 678.4,433.7 677.8,433.4 677.2,433.1 676.5,432.8 675.7,432.5 674.9,432.2 674.1,431.9 673.2,431.7 672.3,431.4" stroke="#7bc65f"/><polyline points="664.8,432.6 664.1,432.4 663.3,432.2 662.5,432.1 661.6,431.9 660.8,431.7 659.9,431.5 658.9,431.4 658,431.2 657,431 656,430.9 655,430.8 654,430.6 652.9,430.5 651.8,430.4 650.7,430.3 649.6,430.2 648.5,430.1 647.3,430 646.2,430 645,429.9 643.9,429.9 642.7,429.8 641.5,429.8 640.3,429.8 639.1,429.7 638,429.7 636.8,429.7 635.6,429.7 634.4,429.8 633.2,429.8 632,429.8 630.9,429.9 629.7,429.9 628.6,430 627.4,430.1 626.3,430.1 625.2,430.2 624.1,430.3 623,430.4 622,430.5 620.9,430.7 619.9,430.8 618.9,430.9 617.9,431.1 617,431.2 616.1,431.4 615.2,431.5 614.3,431.7 613.5,431.9 612.7,432.1 611.9,432.3 611.1,432.5 610.4,432.7 609.7,432.9 609.1,433.1 608.5,433.3 607.9,433.5 607.4,433.7 606.9,434 606.4,434.2 606,434.4 605.6,434.7 605.3,434.9 604.9,435.2 604.7,435.4 604.5,435.7 604.3,435.9 604.1,436.2 604,436.4 604,436.7 603.9,436.9 604,437.2 604,437.5 604.1,437.7 604.3,438 604.5,438.2 604.7,438.5 605,438.7 605.3,439 605.6,439.2 606,439.5 606.4,439.7 606.9,439.9 607.4,440.2 608,440.4 608.5,440.6 609.1,440.9 609.8,441.1 610.5,441.3 611.2,441.5 611.9,441.7 612.7,441.9 613.5,442.1 614.4,442.3 615.2,442.4 616.1,442.6 617.1,442.8 618,442.9 619,443.1 620,443.2 621,443.4 622,443.5 623.1,443.6 624.2,443.7 625.3,443.8 626.4,443.9 627.5,444 628.7,444.1 629.8,444.2 631,444.2 632.1,444.3 633.3,444.3 634.5,444.3 635.7,444.4 636.9,444.4 638,444.4 639.2,444.4 640.4,444.4 641.6,444.4 642.8,444.3 644,444.3 645.1,444.3 646.3,444.2 647.4,444.1 648.6,444.1 649.7,444 650.8,443.9 651.9,443.8 653,443.7 654,443.6 655.1,443.5 656.1,443.3 657.1,443.2 658.1,443.1 659,442.9 659.9,442.8 660.8,442.6 661.7,442.4 662.5,442.2 663.3,442.1 664.1,441.9 664.9,441.7 665.6,441.5 666.3,441.3 666.9,441.1 667.5,440.8 668.1,440.6 668.6,440.4 669.1,440.2 669.6,439.9 670,439.7 670.4,439.4 670.7,439.2 671.1,439 671.3,438.7 671.5,438.5 671.7,438.2 671.9,437.9 672,437.7 672,437.4 672.1,437.2 672,436.9 672,436.7 671.9,436.4 671.7,436.2 671.5,435.9 671.3,435.7 671,435.4 670.7,435.2 670.4,434.9 670,434.7 669.6,434.4 669.1,434.2 668.6,434 668,433.7 667.5,433.5 666.9,433.3 666.2,433.1 665.5,432.8 664.8,432.6" stroke="#c69214"/><polyline points="656.3,434.1 655.8,433.9 655.2,433.8 654.7,433.7 654.1,433.5 653.5,433.4 652.9,433.3 652.3,433.2 651.6,433.1 651,433 650.3,432.9 649.6,432.8 648.9,432.7 648.1,432.6 647.4,432.5 646.7,432.5 645.9,432.4 645.1,432.3 644.4,432.3 643.6,432.2 642.8,432.2 642,432.2 641.2,432.1 640.4,432.1 639.6,432.1 638.8,432.1 638,432.1 637.2,432.1 636.4,432.1 635.5,432.1 634.7,432.1 633.9,432.1 633.1,432.2 632.4,432.2 631.6,432.2 630.8,432.3 630,432.3 629.3,432.4 628.5,432.5 627.8,432.5 627.1,432.6 626.4,432.7 625.7,432.8 625,432.9 624.3,433 623.7,433.1 623.1,433.2 622.5,433.3 621.9,433.4 621.3,433.5 620.7,433.7 620.2,433.8 619.7,433.9 619.2,434.1 618.7,434.2 618.3,434.3 617.9,434.5 617.5,434.6 617.1,434.8 616.8,435 616.5,435.1 616.2,435.3 615.9,435.4 615.7,435.6 615.5,435.8 615.3,435.9 615.1,436.1 615,436.3 614.9,436.5 614.9,436.6 614.8,436.8 614.8,437 614.8,437.2 614.9,437.3 614.9,437.5 615,437.7 615.2,437.9 615.3,438 615.5,438.2 615.7,438.4 615.9,438.5 616.2,438.7 616.5,438.9 616.8,439 617.2,439.2 617.5,439.3 617.9,439.5 618.3,439.6 618.8,439.8 619.2,439.9 619.7,440.1 620.2,440.2 620.8,440.3 621.3,440.5 621.9,440.6 622.5,440.7 623.1,440.8 623.7,441 624.4,441.1 625,441.2 625.7,441.3 626.4,441.4 627.1,441.4 627.9,441.5 628.6,441.6 629.3,441.7 630.1,441.7 630.9,441.8 631.6,441.8 632.4,441.9 633.2,441.9 634,442 634.8,442 635.6,442 636.4,442 637.2,442.1 638,442.1 638.8,442.1 639.6,442.1 640.5,442 641.3,442 642.1,442 642.9,442 643.6,441.9 644.4,441.9 645.2,441.8 646,441.8 646.7,441.7 647.5,441.7 648.2,441.6 648.9,441.5 649.6,441.4 650.3,441.3 651,441.3 651.7,441.2 652.3,441.1 652.9,440.9 653.5,440.8 654.1,440.7 654.7,440.6 655.3,440.5 655.8,440.3 656.3,440.2 656.8,440.1 657.3,439.9 657.7,439.8 658.1,439.6 658.5,439.5 658.9,439.3 659.2,439.2 659.5,439 659.8,438.8 660.1,438.7 660.3,438.5 660.5,438.4 660.7,438.2 660.9,438 661,437.8 661.1,437.7 661.1,437.5 661.2,437.3 661.2,437.1 661.2,437 661.1,436.8 661.1,436.6 661,436.4 660.8,436.3 660.7,436.1 660.5,435.9 660.3,435.8 660.1,435.6 659.8,435.4 659.5,435.3 659.2,435.1 658.8,434.9 658.5,434.8 658.1,434.6 657.7,434.5 657.2,434.3 656.8,434.2 656.3,434.1" stroke="#c61414"/></g><g stroke="#000" stroke-width="1.25" stroke-linejoin="round"><polygon points="671.2,277.8 679.3,274.5 673,272.2 664.9,274" fill="#0068ff"/><polygon points="663.2,282.6 671.2,277.8 664.9,274 656.9,277.3" fill="#0058ff"/><polygon points="677.6,283 685.6,278.1 679.3,274.5 671.2,277.8" fill="#0058ff"/><polygon points="655.1,288.2 663.2,282.6 656.9,277.3 648.8,281.7" fill="#0048ff"/><polygon points="669.5,288.9 677.6,283 671.2,277.8 663.2,282.6" fill="#0048ff"/><polygon points="647,294.2 655.1,288.2 648.8,281.7 640.7,287" fill="#0038ff"/><polygon points="683.9,289.1 692,283 685.6,278.1 677.6,283" fill="#0048ff"/><polygon points="661.4,295.2 669.5,288.9 663.2,282.6 655.1,288.2" fill="#0038ff"/><polygon points="639,300.1 647,294.2 640.7,287 632.6,292.6" fill="#0018ff"/><polygon points="675.8,295.7 683.9,289.1 677.6,283 669.5,288.9" fill="#0038ff"/><polygon points="653.4,301.4 661.4,295.2 655.1,288.2 647,294.2" fill="#0018ff"/><polygon points="690.2,295.5 698.3,288.7 692,283 683.9,289.1" fill="#0038ff"/><polygon points="667.8,302.1 675.8,295.7 669.5,288.9 661.4,295.2" fill="#0018ff"/><polygon points="630.9,305.4 639,300.1 632.6,292.6 624.5,298.2" fill="#0008ff"/><polygon points="645.3,306.8 653.4,301.4 647,294.2 639,300.1" fill="#0008ff"/><polygon points="682.1,302.2 690.2,295.5 683.9,289.1 675.8,295.7" fill="#0018ff"/><polygon points="659.7,307.7 667.8,302.1 661.4,295.2 653.4,301.4" fill="#0008ff"/><polygon points="622.8,309.7 630.9,305.4 624.5,298.2 616.5,303.4" fill="#0000f7"/><polygon points="696.5,301.8 704.6,294.8 698.3,288.7 690.2,295.5" fill="#0018ff"/><polygon points="674.1,308.1 682.1,302.2 675.8,295.7 667.8,302.1" fill="#0008ff"/><polygon points="637.2,311 645.3,306.8 639,300.1 630.9,305.4" fill="#0000f7"/><polygon points="651.6,311.9 659.7,307.7 653.4,301.4 645.3,306.8" fill="#0000f7"/><polygon points="688.5,308.1 696.5,301.8 690.2,295.5 682.1,302.2" fill="#0008ff"/><polygon points="614.7,313 622.8,309.7 616.5,303.4 608.4,307.8" fill="#0000f7"/><polygon points="666,312.5 674.1,308.1 667.8,302.1 659.7,307.7" fill="#0000f7"/><polygon points="629.1,314 637.2,311 630.9,305.4 622.8,309.7" fill="#0000e7"/><polygon points="702.9,307.5 711,300.8 704.6,294.8 696.5,301.8" fill="#0008ff"/><polygon points="680.4,312.8 688.5,308.1 682.1,302.2 674.1,308.1" fill="#0000f7"/><polygon points="643.5,314.7 651.6,311.9 645.3,306.8 637.2,311" fill="#0000e7"/><polygon points="657.9,315.1 666,312.5 659.7,307.7 651.6,311.9" fill="#0000e7"/><polygon points="694.8,312.8 702.9,307.5 696.5,301.8 688.5,308.1" fill="#0000f7"/><polygon points="606.7,315.2 614.7,313 608.4,307.8 600.3,311.4" fill="#0000e7"/><polygon points="672.3,315.6 680.4,312.8 674.1,308.1 666,312.5" fill="#0000e7"/><polygon points="621,315.6 629.1,314 622.8,309.7 614.7,313" fill="#0000e7"/><polygon points="709.2,312.3 717.3,306.4 711,300.8 702.9,307.5" fill="#0000f7"/><polygon points="635.5,315.7 643.5,314.7 637.2,311 629.1,314" fill="#0000e7"/><polygon points="686.7,315.9 694.8,312.8 688.5,308.1 680.4,312.8" fill="#0000e7"/><polygon points="649.8,315.9 657.9,315.1 651.6,311.9 643.5,314.7" fill="#0000f7"/><polygon points="598.6,316.3 606.7,315.2 600.3,311.4 592.2,314.2" fill="#0000e7"/><polygon points="701.1,316.2 709.2,312.3 702.9,307.5 694.8,312.8" fill="#0000e7"/><polygon points="664.2,316.2 672.3,315.6 666,312.5 657.9,315.1" fill="#0000f7"/><polygon points="613,315.9 621,315.6 614.7,313 606.7,315.2" fill="#0000f1"/><polygon points="715.5,316 723.6,311.3 717.3,306.4 709.2,312.3" fill="#0000f7"/><polygon points="678.7,316.7 686.7,315.9 680.4,312.8 672.3,315.6" fill="#0000f7"/><polygon points="627.4,315.3 635.5,315.7 629.1,314 621,315.6" fill="#0000ba"/><polygon points="693,317.5 701.1,316.2 694.8,312.8 686.7,315.9" fill="#0000e7"/><polygon points="641.8,314.9 649.8,315.9 643.5,314.7 635.5,315.7" fill="#000087"/><polygon points="590.5,316.6 598.6,316.3 592.2,314.2 584.2,316.1" fill="#0000e1"/><polygon points="707.5,318.2 715.5,316 709.2,312.3 701.1,316.2" fill="#0000e7"/><polygon points="656.2,314.8 664.2,316.2 657.9,315.1 649.8,315.9" fill="#000088"/><polygon points="604.9,315.2 613,315.9 606.7,315.2 598.6,316.3" fill="#000073"/><polygon points="721.8,318.6 729.9,315.3 723.6,311.3 715.5,316" fill="#0000e7"/><polygon points="670.6,315.3 678.7,316.7 672.3,315.6 664.2,316.2" fill="#000086"/><polygon points="619.3,313.7 627.4,315.3 621,315.6 613,315.9" fill="#0007d6"/><polygon points="685,316.2 693,317.5 686.7,315.9 678.7,316.7" fill="#00008b"/><polygon points="582.4,316.3 590.5,316.6 584.2,316.1 576.1,317.3" fill="#00007a"/><polygon points="699.4,317.5 707.5,318.2 701.1,316.2 693,317.5" fill="#0000bd"/><polygon points="633.7,312.5 641.8,314.9 635.5,315.7 627.4,315.3" fill="#0008ff"/><polygon points="713.8,318.9 721.8,318.6 715.5,316 707.5,318.2" fill="#0000f2"/><polygon points="596.8,313.8 604.9,315.2 598.6,316.3 590.5,316.6" fill="#0007ee"/><polygon points="648.1,311.9 656.2,314.8 649.8,315.9 641.8,314.9" fill="#0018ff"/><polygon points="728.2,320.2 736.2,318.5 729.9,315.3 721.8,318.6" fill="#0000e7"/><polygon points="662.5,311.9 670.6,315.3 664.2,316.2 656.2,314.8" fill="#0018ff"/><polygon points="611.2,311.3 619.3,313.7 613,315.9 604.9,315.2" fill="#0018ff"/><polygon points="676.9,312.7 685,316.2 678.7,316.7 670.6,315.3" fill="#0018ff"/><polygon points="574.4,315.6 582.4,316.3 576.1,317.3 568,318" fill="#0007d8"/><polygon points="691.3,314.2 699.4,317.5 693,317.5 685,316.2" fill="#0008fc"/><polygon points="625.6,309.2 633.7,312.5 627.4,315.3 619.3,313.7" fill="#0028ff"/><polygon points="705.7,316.3 713.8,318.9 707.5,318.2 699.4,317.5" fill="#0006cd"/><polygon points="588.8,312 596.8,313.8 590.5,316.6 582.4,316.3" fill="#0018ff"/><polygon points="720.1,318.7 728.2,320.2 721.8,318.6 713.8,318.9" fill="#000084"/><polygon points="640,307.8 648.1,311.9 641.8,314.9 633.7,312.5" fill="#0028ff"/><polygon points="734.5,320.9 742.6,320.8 736.2,318.5 728.2,320.2" fill="#0000e3"/><polygon points="566.3,314.7 574.4,315.6 568,318 560,318.3" fill="#0018ff"/><polygon points="654.4,307.3 662.5,311.9 656.2,314.8 648.1,311.9" fill="#0038ff"/><polygon points="603.1,308.5 611.2,311.3 604.9,315.2 596.8,313.8" fill="#0028ff"/><polygon points="668.8,307.7 676.9,312.7 670.6,315.3 662.5,311.9" fill="#0038ff"/><polygon points="683.2,309.1 691.3,314.2 685,316.2 676.9,312.7" fill="#0028ff"/><polygon points="617.5,305.6 625.6,309.2 619.3,313.7 611.2,311.3" fill="#0038ff"/><polygon points="580.7,310.1 588.8,312 582.4,316.3 574.4,315.6" fill="#0028ff"/><polygon points="697.6,311.4 705.7,316.3 699.4,317.5 691.3,314.2" fill="#0028ff"/><polygon points="712,314.4 720.1,318.7 713.8,318.9 705.7,316.3" fill="#0018ff"/><polygon points="726.4,317.7 734.5,320.9 728.2,320.2 720.1,318.7" fill="#0007e0"/><polygon points="740.8,321 748.9,322.5 742.6,320.8 734.5,320.9" fill="#00008d"/><polygon points="632,303.4 640,307.8 633.7,312.5 625.6,309.2" fill="#0048ff"/><polygon points="558.2,313.9 566.3,314.7 560,318.3 551.9,318.5" fill="#0018ff"/><polygon points="595.1,305.7 603.1,308.5 596.8,313.8 588.8,312" fill="#0038ff"/><polygon points="646.4,302.2 654.4,307.3 648.1,311.9 640,307.8" fill="#0058ff"/><polygon points="660.8,302.1 668.8,307.7 662.5,311.9 654.4,307.3" fill="#0058ff"/><polygon points="572.6,308.4 580.7,310.1 574.4,315.6 566.3,314.7" fill="#0038ff"/><polygon points="609.5,301.9 617.5,305.6 611.2,311.3 603.1,308.5" fill="#0058ff"/><polygon points="675.1,303.1 683.2,309.1 676.9,312.7 668.8,307.7" fill="#0058ff"/><polygon points="550.1,313.3 558.2,313.9 551.9,318.5 543.8,318.7" fill="#0028ff"/><polygon points="689.5,305.1 697.6,311.4 691.3,314.2 683.2,309.1" fill="#0048ff"/><polygon points="704,308.1 712,314.4 705.7,316.3 697.6,311.4" fill="#0038ff"/><polygon points="718.4,312 726.4,317.7 720.1,318.7 712,314.4" fill="#0028ff"/><polygon points="732.8,316.3 740.8,321 734.5,320.9 726.4,317.7" fill="#0018ff"/><polygon points="747.1,320.7 755.2,323.6 748.9,322.5 740.8,321" fill="#0006c4"/><polygon points="623.9,299.1 632,303.4 625.6,309.2 617.5,305.6" fill="#0068ff"/><polygon points="587,303.1 595.1,305.7 588.8,312 580.7,310.1" fill="#0058ff"/><polygon points="638.3,297.5 646.4,302.2 640,307.8 632,303.4" fill="#0068ff"/><polygon points="564.5,306.9 572.6,308.4 566.3,314.7 558.2,313.9" fill="#0048ff"/><polygon points="542.1,313 550.1,313.3 543.8,318.7 535.7,319" fill="#0028ff"/><polygon points="601.4,298.7 609.5,301.9 603.1,308.5 595.1,305.7" fill="#0068ff"/><polygon points="652.7,296.8 660.8,302.1 654.4,307.3 646.4,302.2" fill="#0078ff"/><polygon points="667.1,297.3 675.1,303.1 668.8,307.7 660.8,302.1" fill="#0078ff"/><polygon points="753.5,320.3 761.5,324.4 755.2,323.6 747.1,320.7" fill="#0017f6"/><polygon points="739.1,314.9 747.1,320.7 740.8,321 732.8,316.3" fill="#0028ff"/><polygon points="681.5,298.7 689.5,305.1 683.2,309.1 675.1,303.1" fill="#0068ff"/><polygon points="724.7,309.6 732.8,316.3 726.4,317.7 718.4,312" fill="#0038ff"/><polygon points="578.9,301 587,303.1 580.7,310.1 572.6,308.4" fill="#0068ff"/><polygon points="710.3,304.9 718.4,312 712,314.4 704,308.1" fill="#0058ff"/><polygon points="695.9,301.3 704,308.1 697.6,311.4 689.5,305.1" fill="#0068ff"/><polygon points="615.8,295.5 623.9,299.1 617.5,305.6 609.5,301.9" fill="#0078ff"/><polygon points="556.4,305.9 564.5,306.9 558.2,313.9 550.1,313.3" fill="#0058ff"/><polygon points="534,313.2 542.1,313 535.7,319 527.6,319.5" fill="#0038ff"/><polygon points="630.2,293.5 638.3,297.5 632,303.4 623.9,299.1" fill="#0087ff"/><polygon points="593.3,296.2 601.4,298.7 595.1,305.7 587,303.1" fill="#0078ff"/><polygon points="644.6,292.6 652.7,296.8 646.4,302.2 638.3,297.5" fill="#0087ff"/><polygon points="759.8,319.9 767.9,325 761.5,324.4 753.5,320.3" fill="#0018ff"/><polygon points="570.9,299.4 578.9,301 572.6,308.4 564.5,306.9" fill="#0078ff"/><polygon points="745.4,313.5 753.5,320.3 747.1,320.7 739.1,314.9" fill="#0038ff"/><polygon points="659,292.6 667.1,297.3 660.8,302.1 652.7,296.8" fill="#0087ff"/><polygon points="548.4,305.3 556.4,305.9 550.1,313.3 542.1,313" fill="#0058ff"/><polygon points="525.9,313.8 534,313.2 527.6,319.5 519.6,320.3" fill="#0038ff"/><polygon points="607.7,292.9 615.8,295.5 609.5,301.9 601.4,298.7" fill="#0087ff"/><polygon points="731,307.4 739.1,314.9 732.8,316.3 724.7,309.6" fill="#0058ff"/><polygon points="673.4,293.5 681.5,298.7 675.1,303.1 667.1,297.3" fill="#0087ff"/><polygon points="716.6,302.2 724.7,309.6 718.4,312 710.3,304.9" fill="#0068ff"/><polygon points="687.8,295.3 695.9,301.3 689.5,305.1 681.5,298.7" fill="#0087ff"/><polygon points="702.2,298.1 710.3,304.9 704,308.1 695.9,301.3" fill="#0078ff"/><polygon points="622.1,290.9 630.2,293.5 623.9,299.1 615.8,295.5" fill="#0097ff"/><polygon points="585.2,294.4 593.3,296.2 587,303.1 578.9,301" fill="#0087ff"/><polygon points="562.8,298.4 570.9,299.4 564.5,306.9 556.4,305.9" fill="#0078ff"/><polygon points="517.8,314.8 525.9,313.8 519.6,320.3 511.5,321.5" fill="#0038ff"/><polygon points="636.5,290 644.6,292.6 638.3,297.5 630.2,293.5" fill="#00a7ff"/><polygon points="540.3,305.3 548.4,305.3 542.1,313 534,313.2" fill="#0058ff"/><polygon points="766.1,319.7 774.2,325.6 767.9,325 759.8,319.9" fill="#0028ff"/><polygon points="599.6,291.3 607.7,292.9 601.4,298.7 593.3,296.2" fill="#0097ff"/><polygon points="751.7,312.5 759.8,319.9 753.5,320.3 745.4,313.5" fill="#0048ff"/><polygon points="650.9,289.8 659,292.6 652.7,296.8 644.6,292.6" fill="#00a7ff"/><polygon points="737.3,305.7 745.4,313.5 739.1,314.9 731,307.4" fill="#0068ff"/><polygon points="665.3,290.3 673.4,293.5 667.1,297.3 659,292.6" fill="#00a7ff"/><polygon points="577.2,293.4 585.2,294.4 578.9,301 570.9,299.4" fill="#0097ff"/><polygon points="722.9,300.1 731,307.4 724.7,309.6 716.6,302.2" fill="#0078ff"/><polygon points="679.7,291.3 687.8,295.3 681.5,298.7 673.4,293.5" fill="#00a7ff"/><polygon points="614.1,289.7 622.1,290.9 615.8,295.5 607.7,292.9" fill="#00a7ff"/><polygon points="509.7,316.4 517.8,314.8 511.5,321.5 503.4,323" fill="#0038ff"/><polygon points="708.5,295.9 716.6,302.2 710.3,304.9 702.2,298.1" fill="#0087ff"/><polygon points="694.1,293 702.2,298.1 695.9,301.3 687.8,295.3" fill="#0097ff"/><polygon points="532.2,305.9 540.3,305.3 534,313.2 525.9,313.8" fill="#0068ff"/><polygon points="554.7,298 562.8,298.4 556.4,305.9 548.4,305.3" fill="#0087ff"/><polygon points="628.4,289.2 636.5,290 630.2,293.5 622.1,290.9" fill="#00a7ff"/><polygon points="772.4,319.9 780.5,326.3 774.2,325.6 766.1,319.7" fill="#0028ff"/><polygon points="591.6,290.7 599.6,291.3 593.3,296.2 585.2,294.4" fill="#00a7ff"/><polygon points="642.9,289.4 650.9,289.8 644.6,292.6 636.5,290" fill="#00a7ff"/><polygon points="501.7,318.5 509.7,316.4 503.4,323 495.4,324.8" fill="#0038ff"/><polygon points="758.1,311.9 766.1,319.7 759.8,319.9 751.7,312.5" fill="#0058ff"/><polygon points="569.1,293.2 577.2,293.4 570.9,299.4 562.8,298.4" fill="#0097ff"/><polygon points="657.2,289.7 665.3,290.3 659,292.6 650.9,289.8" fill="#00a0f4"/><polygon points="524.1,306.9 532.2,305.9 525.9,313.8 517.8,314.8" fill="#0068ff"/><polygon points="606,289.9 614.1,289.7 607.7,292.9 599.6,291.3" fill="#00a7ff"/><polygon points="743.6,304.5 751.7,312.5 745.4,313.5 737.3,305.7" fill="#0078ff"/><polygon points="546.6,298.2 554.7,298 548.4,305.3 540.3,305.3" fill="#0087ff"/><polygon points="671.6,290.2 679.7,291.3 673.4,293.5 665.3,290.3" fill="#00a7fe"/><polygon points="729.2,298.7 737.3,305.7 731,307.4 722.9,300.1" fill="#0087ff"/><polygon points="686.1,290.9 694.1,293 687.8,295.3 679.7,291.3" fill="#00a7ff"/><polygon points="620.4,290.3 628.4,289.2 622.1,290.9 614.1,289.7" fill="#006aa2"/><polygon points="714.9,294.7 722.9,300.1 716.6,302.2 708.5,295.9" fill="#0097ff"/><polygon points="700.4,292.3 708.5,295.9 702.2,298.1 694.1,293" fill="#00a7ff"/><polygon points="493.6,321 501.7,318.5 495.4,324.8 487.3,327" fill="#0028ff"/><polygon points="583.5,291 591.6,290.7 585.2,294.4 577.2,293.4" fill="#00a7ff"/><polygon points="778.8,320.5 786.9,327.2 780.5,326.3 772.4,319.9" fill="#0038ff"/><polygon points="634.8,291.2 642.9,289.4 636.5,290 628.4,289.2" fill="#007bbc"/><polygon points="516.1,308.5 524.1,306.9 517.8,314.8 509.7,316.4" fill="#0068ff"/><polygon points="561,293.4 569.1,293.2 562.8,298.4 554.7,298" fill="#00a7ff"/><polygon points="649.2,292 657.2,289.7 650.9,289.8 642.9,289.4" fill="#0094e2"/><polygon points="597.9,291.2 606,289.9 599.6,291.3 591.6,290.7" fill="#005683"/><polygon points="538.6,298.9 546.6,298.2 540.3,305.3 532.2,305.9" fill="#0087ff"/><polygon points="764.4,311.8 772.4,319.9 766.1,319.7 758.1,311.9" fill="#0058ff"/><polygon points="663.6,292.5 671.6,290.2 665.3,290.3 657.2,289.7" fill="#0094e2"/><polygon points="485.5,323.9 493.6,321 487.3,327 479.2,329.3" fill="#0028ff"/><polygon points="612.3,292.9 620.4,290.3 614.1,289.7 606,289.9" fill="#00a7ff"/><polygon points="750,304 758.1,311.9 751.7,312.5 743.6,304.5" fill="#0078ff"/><polygon points="678,292.5 686.1,290.9 679.7,291.3 671.6,290.2" fill="#007dbf"/><polygon points="575.4,292 583.5,291 577.2,293.4 569.1,293.2" fill="#0087ce"/><polygon points="626.7,295.1 634.8,291.2 628.4,289.2 620.4,290.3" fill="#0097ff"/><polygon points="508,310.7 516.1,308.5 509.7,316.4 501.7,318.5" fill="#0058ff"/><polygon points="692.4,292.4 700.4,292.3 694.1,293 686.1,290.9" fill="#006397"/><polygon points="735.6,298.2 743.6,304.5 737.3,305.7 729.2,298.7" fill="#0097ff"/><polygon points="641.1,296.9 649.2,292 642.9,289.4 634.8,291.2" fill="#0097ff"/><polygon points="706.8,292.9 714.9,294.7 708.5,295.9 700.4,292.3" fill="#009ef1"/><polygon points="721.2,294.6 729.2,298.7 722.9,300.1 714.9,294.7" fill="#00a7ff"/><polygon points="785.1,321.5 793.2,328.5 786.9,327.2 778.8,320.5" fill="#0038ff"/><polygon points="552.9,294.2 561,293.4 554.7,298 546.6,298.2" fill="#00a7ff"/><polygon points="589.8,293.4 597.9,291.2 591.6,290.7 583.5,291" fill="#009ff2"/><polygon points="530.5,300 538.6,298.9 532.2,305.9 524.1,306.9" fill="#0087ff"/><polygon points="655.5,297.9 663.6,292.5 657.2,289.7 649.2,292" fill="#0097ff"/><polygon points="477.4,327.2 485.5,323.9 479.2,329.3 471.1,331.8" fill="#0018fd"/><polygon points="604.2,296.6 612.3,292.9 606,289.9 597.9,291.2" fill="#0097ff"/><polygon points="618.6,300.4 626.7,295.1 620.4,290.3 612.3,292.9" fill="#0087ff"/><polygon points="669.9,297.8 678,292.5 671.6,290.2 663.6,292.5" fill="#0097ff"/><polygon points="770.7,312.2 778.8,320.5 772.4,319.9 764.4,311.8" fill="#0058ff"/><polygon points="633,303.7 641.1,296.9 634.8,291.2 626.7,295.1" fill="#0078ff"/><polygon points="499.9,313.3 508,310.7 501.7,318.5 493.6,321" fill="#0058ff"/><polygon points="567.4,293.4 575.4,292 569.1,293.2 561,293.4" fill="#00507a"/><polygon points="647.4,305.8 655.5,297.9 649.2,292 641.1,296.9" fill="#0078ff"/><polygon points="684.3,296.8 692.4,292.4 686.1,290.9 678,292.5" fill="#0097ff"/><polygon points="469.4,330.7 477.4,327.2 471.1,331.8 463,334.3" fill="#0014d9"/><polygon points="756.3,304.1 764.4,311.8 758.1,311.9 750,304" fill="#0087ff"/><polygon points="581.8,296.1 589.8,293.4 583.5,291 575.4,292" fill="#00a7ff"/><polygon points="661.8,306.2 669.9,297.8 663.6,292.5 655.5,297.9" fill="#0078ff"/><polygon points="624.9,311.7 633,303.7 626.7,295.1 618.6,300.4" fill="#0058ff"/><polygon points="610.6,306.7 618.6,300.4 612.3,292.9 604.2,296.6" fill="#0078ff"/><polygon points="522.4,301.5 530.5,300 524.1,306.9 516.1,308.5" fill="#0087ff"/><polygon points="544.9,295.2 552.9,294.2 546.6,298.2 538.6,298.9" fill="#00a7ff"/><polygon points="596.1,301 604.2,296.6 597.9,291.2 589.8,293.4" fill="#0087ff"/><polygon points="639.4,315.2 647.4,305.8 641.1,296.9 633,303.7" fill="#0048ff"/><polygon points="698.7,295.5 706.8,292.9 700.4,292.3 692.4,292.4" fill="#00a7ff"/><polygon points="791.4,323 799.5,330.1 793.2,328.5 785.1,321.5" fill="#0038ff"/><polygon points="653.8,316.8 661.8,306.2 655.5,297.9 647.4,305.8" fill="#0048ff"/><polygon points="631.3,325.2 639.4,315.2 633,303.7 624.9,311.7" fill="#0028ff"/><polygon points="741.9,298.3 750,304 743.6,304.5 735.6,298.2" fill="#0097ff"/><polygon points="713.1,294.7 721.2,294.6 714.9,294.7 706.8,292.9" fill="#005784"/><polygon points="645.7,328.1 653.8,316.8 647.4,305.8 639.4,315.2" fill="#0018ff"/><polygon points="676.2,305 684.3,296.8 678,292.5 669.9,297.8" fill="#0078ff"/><polygon points="616.9,320 624.9,311.7 618.6,300.4 610.6,306.7" fill="#0038ff"/><polygon points="637.6,339.1 645.7,328.1 639.4,315.2 631.3,325.2" fill="#0000e7"/><polygon points="491.9,316.5 499.9,313.3 493.6,321 485.5,323.9" fill="#0058ff"/><polygon points="727.5,295.3 735.6,298.2 729.2,298.7 721.2,294.6" fill="#00a4f9"/><polygon points="623.2,334.8 631.3,325.2 624.9,311.7 616.9,320" fill="#0000f7"/><polygon points="629.5,348.6 637.6,339.1 631.3,325.2 623.2,334.8" fill="#0000c7"/><polygon points="643.9,351.4 652,340.8 645.7,328.1 637.6,339.1" fill="#0000b7"/><polygon points="652,340.8 660.1,328.6 653.8,316.8 645.7,328.1" fill="#0000e7"/><polygon points="602.5,313.1 610.6,306.7 604.2,296.6 596.1,301" fill="#0058ff"/><polygon points="559.3,294.9 567.4,293.4 561,293.4 552.9,294.2" fill="#0080c2"/><polygon points="635.9,359.4 643.9,351.4 637.6,339.1 629.5,348.6" fill="#000097"/><polygon points="668.1,316.1 676.2,305 669.9,297.8 661.8,306.2" fill="#0048ff"/><polygon points="660.1,328.6 668.1,316.1 661.8,306.2 653.8,316.8" fill="#0018ff"/><polygon points="621.5,356.1 629.5,348.6 623.2,334.8 615.1,343.2" fill="#0000a7"/><polygon points="615.1,343.2 623.2,334.8 616.9,320 608.8,328" fill="#0000d7"/><polygon points="461.3,334.2 469.4,330.7 463,334.3 455,336.6" fill="#0005aa"/><polygon points="608.8,328 616.9,320 610.6,306.7 602.5,313.1" fill="#0018ff"/><polygon points="588.1,305.5 596.1,301 589.8,293.4 581.8,296.1" fill="#0078ff"/><polygon points="650.2,360.6 658.3,351.9 652,340.8 643.9,351.4" fill="#000097"/><polygon points="658.3,351.9 666.4,340 660.1,328.6 652,340.8" fill="#0000b7"/><polygon points="777,313.2 785.1,321.5 778.8,320.5 770.7,312.2" fill="#0068ff"/><polygon points="690.6,302.6 698.7,295.5 692.4,292.4 684.3,296.8" fill="#0087ff"/><polygon points="573.7,298.9 581.8,296.1 575.4,292 567.4,293.4" fill="#0097ff"/><polygon points="514.3,303.6 522.4,301.5 516.1,308.5 508,310.7" fill="#0087ff"/><polygon points="627.8,364.4 635.9,359.4 629.5,348.6 621.5,356.1" fill="#000087"/><polygon points="666.4,340 674.5,326.5 668.1,316.1 660.1,328.6" fill="#0000e7"/><polygon points="536.8,296.4 544.9,295.2 538.6,298.9 530.5,300" fill="#00a6fc"/><polygon points="607,350.1 615.1,343.2 608.8,328 600.7,335.1" fill="#0000b7"/><polygon points="613.4,361.5 621.5,356.1 615.1,343.2 607,350.1" fill="#000097"/><polygon points="642.2,365.5 650.2,360.6 643.9,351.4 635.9,359.4" fill="#000087"/><polygon points="594.4,319.2 602.5,313.1 596.1,301 588.1,305.5" fill="#0048ff"/><polygon points="600.7,335.1 608.8,328 602.5,313.1 594.4,319.2" fill="#0000f7"/><polygon points="682.6,313.4 690.6,302.6 684.3,296.8 676.2,305" fill="#0058ff"/><polygon points="674.5,326.5 682.6,313.4 676.2,305 668.1,316.1" fill="#0028ff"/><polygon points="483.8,320.2 491.9,316.5 485.5,323.9 477.4,327.2" fill="#0048ff"/><polygon points="664.6,360.2 672.7,349.9 666.4,340 658.3,351.9" fill="#000097"/><polygon points="705,299.7 713.1,294.7 706.8,292.9 698.7,295.5" fill="#0097ff"/><polygon points="762.6,304.7 770.7,312.2 764.4,311.8 756.3,304.1" fill="#0087ff"/><polygon points="672.7,349.9 680.8,336.5 674.5,326.5 666.4,340" fill="#0000c7"/><polygon points="656.6,365.9 664.6,360.2 658.3,351.9 650.2,360.6" fill="#000087"/><polygon points="599,355.5 607,350.1 600.7,335.1 592.6,340.9" fill="#0000a7"/><polygon points="797.8,325 805.8,332 799.5,330.1 791.4,323" fill="#0038ff"/><polygon points="580,309.8 588.1,305.5 581.8,296.1 573.7,298.9" fill="#0068ff"/><polygon points="453.2,337.6 461.3,334.2 455,336.6 446.9,338.6" fill="#00008f"/><polygon points="619.7,366.6 627.8,364.4 621.5,356.1 613.4,361.5" fill="#000087"/><polygon points="551.2,296.5 559.3,294.9 552.9,294.2 544.9,295.2" fill="#0095e4"/><polygon points="592.6,340.9 600.7,335.1 594.4,319.2 586.3,324.6" fill="#0000e7"/><polygon points="680.8,336.5 688.9,322.2 682.6,313.4 674.5,326.5" fill="#0000f7"/><polygon points="719.4,297.3 727.5,295.3 721.2,294.6 713.1,294.7" fill="#00a0f4"/><polygon points="605.3,365 613.4,361.5 607,350.1 599,355.5" fill="#000087"/><polygon points="748.2,299 756.3,304.1 750,304 741.9,298.3" fill="#00a7ff"/><polygon points="634.1,366.3 642.2,365.5 635.9,359.4 627.8,364.4" fill="#000087"/><polygon points="586.3,324.6 594.4,319.2 588.1,305.5 580,309.8" fill="#0028ff"/><polygon points="565.6,301.5 573.7,298.9 567.4,293.4 559.3,294.9" fill="#0097ff"/><polygon points="696.9,309.3 705,299.7 698.7,295.5 690.6,302.6" fill="#0078ff"/><polygon points="506.2,306 514.3,303.6 508,310.7 499.9,313.3" fill="#0087ff"/><polygon points="733.8,296.7 741.9,298.3 735.6,298.2 727.5,295.3" fill="#0077b5"/><polygon points="688.9,322.2 696.9,309.3 690.6,302.6 682.6,313.4" fill="#0038ff"/><polygon points="671,365.7 679,357.9 672.7,349.9 664.6,360.2" fill="#000087"/><polygon points="679,357.9 687.1,345.4 680.8,336.5 672.7,349.9" fill="#0000a7"/><polygon points="475.7,324.3 483.8,320.2 477.4,327.2 469.4,330.7" fill="#0038ff"/><polygon points="528.7,297.8 536.8,296.4 530.5,300 522.4,301.5" fill="#00a0f4"/><polygon points="648.5,366.2 656.6,365.9 650.2,360.6 642.2,365.5" fill="#000087"/><polygon points="590.9,359.4 599,355.5 592.6,340.9 584.6,345.5" fill="#000097"/><polygon points="783.4,314.7 791.4,323 785.1,321.5 777,313.2" fill="#0068ff"/><polygon points="687.1,345.4 695.2,330.6 688.9,322.2 680.8,336.5" fill="#0000d7"/><polygon points="584.6,345.5 592.6,340.9 586.3,324.6 578.2,329" fill="#0000d7"/><polygon points="571.9,313.4 580,309.8 573.7,298.9 565.6,301.5" fill="#0068ff"/><polygon points="662.9,367.2 671,365.7 664.6,360.2 656.6,365.9" fill="#000087"/><polygon points="597.2,367.3 605.3,365 599,355.5 590.9,359.4" fill="#000087"/><polygon points="611.6,367 619.7,366.6 613.4,361.5 605.3,365" fill="#000087"/><polygon points="578.2,329 586.3,324.6 580,309.8 571.9,313.4" fill="#0028ff"/><polygon points="711.4,304.5 719.4,297.3 713.1,294.7 705,299.7" fill="#0087ff"/><polygon points="445.2,340.6 453.2,337.6 446.9,338.6 438.8,340.1" fill="#0000c6"/><polygon points="695.2,330.6 703.3,316.1 696.9,309.3 688.9,322.2" fill="#0018ff"/><polygon points="685.4,363.7 693.5,352.7 687.1,345.4 679,357.9" fill="#000097"/><polygon points="543.1,297.9 551.2,296.5 544.9,295.2 536.8,296.4" fill="#009ff2"/><polygon points="498.2,309.1 506.2,306 499.9,313.3 491.9,316.5" fill="#0078ff"/><polygon points="467.6,328.8 475.7,324.3 469.4,330.7 461.3,334.2" fill="#0028fd"/><polygon points="703.3,316.1 711.4,304.5 705,299.7 696.9,309.3" fill="#0058ff"/><polygon points="557.5,303.7 565.6,301.5 559.3,294.9 551.2,296.5" fill="#0097ff"/><polygon points="626,364 634.1,366.3 627.8,364.4 619.7,366.6" fill="#000059"/><polygon points="768.9,305.8 777,313.2 770.7,312.2 762.6,304.7" fill="#0087ff"/><polygon points="804.1,327.5 812.1,334.3 805.8,332 797.8,325" fill="#0038ff"/><polygon points="677.3,368.4 685.4,363.7 679,357.9 671,365.7" fill="#000087"/><polygon points="693.5,352.7 701.5,338.1 695.2,330.6 687.1,345.4" fill="#0000b7"/><polygon points="582.8,362.1 590.9,359.4 584.6,345.5 576.5,348.7" fill="#000097"/><polygon points="725.8,300.4 733.8,296.7 727.5,295.3 719.4,297.3" fill="#00a7ff"/><polygon points="520.6,299.5 528.7,297.8 522.4,301.5 514.3,303.6" fill="#009ff3"/><polygon points="576.5,348.7 584.6,345.5 578.2,329 570.2,332.2" fill="#0000d7"/><polygon points="640.4,361.6 648.5,366.2 642.2,365.5 634.1,366.3" fill="#0000a7"/><polygon points="754.6,300.2 762.6,304.7 756.3,304.1 748.2,299" fill="#00a7ff"/><polygon points="563.9,316.2 571.9,313.4 565.6,301.5 557.5,303.7" fill="#0058ff"/><polygon points="570.2,332.2 578.2,329 571.9,313.4 563.9,316.2" fill="#0018ff"/><polygon points="740.1,298.5 748.2,299 741.9,298.3 733.8,296.7" fill="#006599"/><polygon points="701.5,338.1 709.6,322.7 703.3,316.1 695.2,330.6" fill="#0000f7"/><polygon points="589.2,368.9 597.2,367.3 590.9,359.4 582.8,362.1" fill="#000087"/><polygon points="437.1,343 445.2,340.6 438.8,340.1 430.8,340.8" fill="#0000df"/><polygon points="459.5,333.4 467.6,328.8 461.3,334.2 453.2,337.6" fill="#0014d5"/><polygon points="603.5,366.5 611.6,367 605.3,365 597.2,367.3" fill="#000068"/><polygon points="654.8,362 662.9,367.2 656.6,365.9 648.5,366.2" fill="#0000a7"/><polygon points="490.1,312.7 498.2,309.1 491.9,316.5 483.8,320.2" fill="#0078ff"/><polygon points="789.7,316.7 797.8,325 791.4,323 783.4,314.7" fill="#0068ff"/><polygon points="691.7,367.6 699.8,358.5 693.5,352.7 685.4,363.7" fill="#000087"/><polygon points="717.7,309.4 725.8,300.4 719.4,297.3 711.4,304.5" fill="#0078ff"/><polygon points="709.6,322.7 717.7,309.4 711.4,304.5 703.3,316.1" fill="#0048ff"/><polygon points="535,299.2 543.1,297.9 536.8,296.4 528.7,297.8" fill="#009ff3"/><polygon points="699.8,358.5 707.9,344.4 701.5,338.1 693.5,352.7" fill="#0000a7"/><polygon points="669.2,365.3 677.3,368.4 671,365.7 662.9,367.2" fill="#000052"/><polygon points="549.5,305.3 557.5,303.7 551.2,296.5 543.1,297.9" fill="#0087ff"/><polygon points="574.8,363.9 582.8,362.1 576.5,348.7 568.4,350.6" fill="#000097"/><polygon points="568.4,350.6 576.5,348.7 570.2,332.2 562.1,334.1" fill="#0000c7"/><polygon points="512.6,301.4 520.6,299.5 514.3,303.6 506.2,306" fill="#00a2f7"/><polygon points="683.6,369.1 691.7,367.6 685.4,363.7 677.3,368.4" fill="#000087"/><polygon points="618,359.8 626,364 619.7,366.6 611.6,367" fill="#0000a7"/><polygon points="810.4,330.5 818.5,336.8 812.1,334.3 804.1,327.5" fill="#0025f0"/><polygon points="707.9,344.4 715.9,328.5 709.6,322.7 701.5,338.1" fill="#0000e7"/><polygon points="562.1,334.1 570.2,332.2 563.9,316.2 555.8,318" fill="#0018ff"/><polygon points="555.8,318 563.9,316.2 557.5,303.7 549.5,305.3" fill="#0058ff"/><polygon points="451.5,337.8 459.5,333.4 453.2,337.6 445.2,340.6" fill="#0005a0"/><polygon points="775.3,307.3 783.4,314.7 777,313.2 768.9,305.8" fill="#0087ff"/><polygon points="482,316.9 490.1,312.7 483.8,320.2 475.7,324.3" fill="#0068ff"/><polygon points="732.1,303.6 740.1,298.5 733.8,296.7 725.8,300.4" fill="#0097ff"/><polygon points="581.1,370.2 589.2,368.9 582.8,362.1 574.8,363.9" fill="#000087"/><polygon points="429,344.5 437.1,343 430.8,340.8 422.7,340.8" fill="#0000e7"/><polygon points="595.5,366.2 603.5,366.5 597.2,367.3 589.2,368.9" fill="#000072"/><polygon points="715.9,328.5 724,314.1 717.7,309.4 709.6,322.7" fill="#0028ff"/><polygon points="698,370.3 706.1,362.8 699.8,358.5 691.7,367.6" fill="#000087"/><polygon points="760.9,301.6 768.9,305.8 762.6,304.7 754.6,300.2" fill="#0097e6"/><polygon points="746.5,300.5 754.6,300.2 748.2,299 740.1,298.5" fill="#0087ce"/><polygon points="706.1,362.8 714.2,349.3 707.9,344.4 699.8,358.5" fill="#000097"/><polygon points="724,314.1 732.1,303.6 725.8,300.4 717.7,309.4" fill="#0068ff"/><polygon points="527,300.3 535,299.2 528.7,297.8 520.6,299.5" fill="#0097e7"/><polygon points="632.3,353.4 640.4,361.6 634.1,366.3 626,364" fill="#0000d7"/><polygon points="541.4,306.3 549.5,305.3 543.1,297.9 535,299.2" fill="#0097ff"/><polygon points="796,319.3 804.1,327.5 797.8,325 789.7,316.7" fill="#0058ff"/><polygon points="566.7,364.8 574.8,363.9 568.4,350.6 560.3,351.4" fill="#000097"/><polygon points="504.5,303.8 512.6,301.4 506.2,306 498.2,309.1" fill="#0097ff"/><polygon points="474,321.7 482,316.9 475.7,324.3 467.6,328.8" fill="#0058ff"/><polygon points="560.3,351.4 568.4,350.6 562.1,334.1 554,334.9" fill="#0000d7"/><polygon points="443.4,341.9 451.5,337.8 445.2,340.6 437.1,343" fill="#00009e"/><polygon points="714.2,349.3 722.2,333.3 715.9,328.5 707.9,344.4" fill="#0000d7"/><polygon points="554,334.9 562.1,334.1 555.8,318 547.7,318.9" fill="#0018ff"/><polygon points="547.7,318.9 555.8,318 549.5,305.3 541.4,306.3" fill="#0058ff"/><polygon points="646.8,351 654.8,362 648.5,366.2 640.4,361.6" fill="#0000d7"/><polygon points="816.7,333.8 824.8,339.7 818.5,336.8 810.4,330.5" fill="#0021d5"/><polygon points="675.5,361.6 683.6,369.1 677.3,368.4 669.2,365.3" fill="#0000a7"/><polygon points="573,371.5 581.1,370.2 574.8,363.9 566.7,364.8" fill="#000087"/><polygon points="690,369.1 698,370.3 691.7,367.6 683.6,369.1" fill="#00006b"/><polygon points="661.2,354.2 669.2,365.3 662.9,367.2 654.8,362" fill="#0000d7"/><polygon points="609.9,355.6 618,359.8 611.6,367 603.5,366.5" fill="#0000c7"/><polygon points="738.4,306.6 746.5,300.5 740.1,298.5 732.1,303.6" fill="#0097ff"/><polygon points="781.6,309.3 789.7,316.7 783.4,314.7 775.3,307.3" fill="#0087ff"/><polygon points="722.2,333.3 730.3,318.1 724,314.1 715.9,328.5" fill="#0028ff"/><polygon points="465.9,327 474,321.7 467.6,328.8 459.5,333.4" fill="#0038ff"/><polygon points="420.9,345 429,344.5 422.7,340.8 414.6,339.8" fill="#0000f7"/><polygon points="587.4,366.9 595.5,366.2 589.2,368.9 581.1,370.2" fill="#000089"/><polygon points="518.9,301.4 527,300.3 520.6,299.5 512.6,301.4" fill="#0088d0"/><polygon points="496.4,306.8 504.5,303.8 498.2,309.1 490.1,312.7" fill="#0097ff"/><polygon points="712.4,366 720.5,353 714.2,349.3 706.1,362.8" fill="#000097"/><polygon points="730.3,318.1 738.4,306.6 732.1,303.6 724,314.1" fill="#0068ff"/><polygon points="533.3,306.8 541.4,306.3 535,299.2 527,300.3" fill="#0097ff"/><polygon points="704.3,372.3 712.4,366 706.1,362.8 698,370.3" fill="#000087"/><polygon points="435.3,345.2 443.4,341.9 437.1,343 429,344.5" fill="#0000d0"/><polygon points="752.8,302.5 760.9,301.6 754.6,300.2 746.5,300.5" fill="#0099e9"/><polygon points="767.2,303.3 775.3,307.3 768.9,305.8 760.9,301.6" fill="#0089d1"/><polygon points="558.6,364.7 566.7,364.8 560.3,351.4 552.3,350.8" fill="#000097"/><polygon points="802.3,322.3 810.4,330.5 804.1,327.5 796,319.3" fill="#0058ff"/><polygon points="552.3,350.8 560.3,351.4 554,334.9 546,334.3" fill="#0000d7"/><polygon points="720.5,353 728.6,336.9 722.2,333.3 714.2,349.3" fill="#0000d7"/><polygon points="457.8,332.5 465.9,327 459.5,333.4 451.5,337.8" fill="#0023de"/><polygon points="539.6,318.7 547.7,318.9 541.4,306.3 533.3,306.8" fill="#0068ff"/><polygon points="546,334.3 554,334.9 547.7,318.9 539.6,318.7" fill="#0028ff"/><polygon points="564.9,372.6 573,371.5 566.7,364.8 558.6,364.7" fill="#000087"/><polygon points="823,337.5 831.1,342.6 824.8,339.7 816.7,333.8" fill="#0011b4"/><polygon points="488.3,310.4 496.4,306.8 490.1,312.7 482,316.9" fill="#0087ff"/><polygon points="624.3,343.7 632.3,353.4 626,364 618,359.8" fill="#0008ff"/><polygon points="579.3,368.9 587.4,366.9 581.1,370.2 573,371.5" fill="#00007e"/><polygon points="728.6,336.9 736.6,321.3 730.3,318.1 722.2,333.3" fill="#0018ff"/><polygon points="510.8,302.7 518.9,301.4 512.6,301.4 504.5,303.8" fill="#0072ae"/><polygon points="696.3,369.2 704.3,372.3 698,370.3 690,369.1" fill="#000061"/><polygon points="744.7,309.3 752.8,302.5 746.5,300.5 738.4,306.6" fill="#0097ff"/><polygon points="427.2,347.6 435.3,345.2 429,344.5 420.9,345" fill="#0000e6"/><polygon points="601.8,352.8 609.9,355.6 603.5,366.5 595.5,366.2" fill="#0000d7"/><polygon points="787.9,311.7 796,319.3 789.7,316.7 781.6,309.3" fill="#0087ff"/><polygon points="412.8,344.4 420.9,345 414.6,339.8 406.5,338" fill="#0000f7"/><polygon points="449.7,338 457.8,332.5 451.5,337.8 443.4,341.9" fill="#0011b0"/><polygon points="525.2,306.9 533.3,306.8 527,300.3 518.9,301.4" fill="#0097ff"/><polygon points="718.8,368.2 726.8,355.4 720.5,353 712.4,366" fill="#000097"/><polygon points="736.6,321.3 744.7,309.3 738.4,306.6 730.3,318.1" fill="#0058ff"/><polygon points="681.9,357.7 690,369.1 683.6,369.1 675.5,361.6" fill="#0000c7"/><polygon points="710.7,374.1 718.8,368.2 712.4,366 704.3,372.3" fill="#000087"/><polygon points="808.6,326 816.7,333.8 810.4,330.5 802.3,322.3" fill="#0057fd"/><polygon points="480.3,314.8 488.3,310.4 482,316.9 474,321.7" fill="#0078ff"/><polygon points="550.5,363.5 558.6,364.7 552.3,350.8 544.2,348.9" fill="#0000a7"/><polygon points="759.1,304.4 767.2,303.3 760.9,301.6 752.8,302.5" fill="#00a1f5"/><polygon points="773.5,305.1 781.6,309.3 775.3,307.3 767.2,303.3" fill="#0080c4"/><polygon points="726.8,355.4 734.9,339.3 728.6,336.9 720.5,353" fill="#0000c7"/><polygon points="544.2,348.9 552.3,350.8 546,334.3 537.9,332.6" fill="#0000e7"/><polygon points="638.7,336.1 646.8,351 640.4,361.6 632.3,353.4" fill="#0028ff"/><polygon points="531.5,317.8 539.6,318.7 533.3,306.8 525.2,306.9" fill="#0068ff"/><polygon points="667.5,345 675.5,361.6 669.2,365.3 661.2,354.2" fill="#0008ff"/><polygon points="441.6,343.1 449.7,338 443.4,341.9 435.3,345.2" fill="#00048d"/><polygon points="556.9,373 564.9,372.6 558.6,364.7 550.5,363.5" fill="#000087"/><polygon points="537.9,332.6 546,334.3 539.6,318.7 531.5,317.8" fill="#0028ff"/><polygon points="571.2,371.8 579.3,368.9 573,371.5 564.9,372.6" fill="#000046"/><polygon points="829.4,341.4 837.5,345.5 831.1,342.6 823,337.5" fill="#000d86"/><polygon points="502.8,304.3 510.8,302.7 504.5,303.8 496.4,306.8" fill="#004e77"/><polygon points="653.1,336.6 661.2,354.2 654.8,362 646.8,351" fill="#0028ff"/><polygon points="472.2,320 480.3,314.8 474,321.7 465.9,327" fill="#0068ff"/><polygon points="734.9,339.3 743,323.6 736.6,321.3 728.6,336.9" fill="#0018ff"/><polygon points="419.2,348.6 427.2,347.6 420.9,345 412.8,344.4" fill="#0000e7"/><polygon points="517.2,306.8 525.2,306.9 518.9,301.4 510.8,302.7" fill="#00a7ff"/><polygon points="794.2,314.6 802.3,322.3 796,319.3 787.9,311.7" fill="#0087ff"/><polygon points="593.7,352.6 601.8,352.8 595.5,366.2 587.4,366.9" fill="#0000e7"/><polygon points="751,311.3 759.1,304.4 752.8,302.5 744.7,309.3" fill="#0087ff"/><polygon points="702.6,370.4 710.7,374.1 704.3,372.3 696.3,369.2" fill="#000072"/><polygon points="404.8,342.7 412.8,344.4 406.5,338 398.5,335.5" fill="#0008ff"/><polygon points="743,323.6 751,311.3 744.7,309.3 736.6,321.3" fill="#0058ff"/><polygon points="725.1,369.5 733.2,356.5 726.8,355.4 718.8,368.2" fill="#000097"/><polygon points="433.6,347.3 441.6,343.1 435.3,345.2 427.2,347.6" fill="#0000c1"/><polygon points="815,330.1 823,337.5 816.7,333.8 808.6,326" fill="#0040e4"/><polygon points="464.1,325.9 472.2,320 465.9,327 457.8,332.5" fill="#0052ee"/><polygon points="717,375.8 725.1,369.5 718.8,368.2 710.7,374.1" fill="#000087"/><polygon points="616.2,334.8 624.3,343.7 618,359.8 609.9,355.6" fill="#0038ff"/><polygon points="494.7,306.7 502.8,304.3 496.4,306.8 488.3,310.4" fill="#006fa9"/><polygon points="563.2,375 571.2,371.8 564.9,372.6 556.9,373" fill="#000077"/><polygon points="779.9,307.2 787.9,311.7 781.6,309.3 773.5,305.1" fill="#007cbd"/><polygon points="765.5,306 773.5,305.1 767.2,303.3 759.1,304.4" fill="#00a1f6"/><polygon points="733.2,356.5 741.2,340.4 734.9,339.3 726.8,355.4" fill="#0000d7"/><polygon points="542.5,360.8 550.5,363.5 544.2,348.9 536.1,345.7" fill="#0000b7"/><polygon points="688.2,355.4 696.3,369.2 690,369.1 681.9,357.7" fill="#0000d7"/><polygon points="523.5,316.2 531.5,317.8 525.2,306.9 517.2,306.8" fill="#0078ff"/><polygon points="835.7,345.4 843.8,348.3 837.5,345.5 829.4,341.4" fill="#0005a4"/><polygon points="536.1,345.7 544.2,348.9 537.9,332.6 529.8,329.9" fill="#0000f7"/><polygon points="548.8,372.2 556.9,373 550.5,363.5 542.5,360.8" fill="#000097"/><polygon points="529.8,329.9 537.9,332.6 531.5,317.8 523.5,316.2" fill="#0048ff"/><polygon points="456.1,332.2 464.1,325.9 457.8,332.5 449.7,338" fill="#002ed1"/><polygon points="585.6,355.5 593.7,352.6 587.4,366.9 579.3,368.9" fill="#0000d7"/><polygon points="509.1,306.7 517.2,306.8 510.8,302.7 502.8,304.3" fill="#00a7ff"/><polygon points="411.1,348.4 419.2,348.6 412.8,344.4 404.8,342.7" fill="#0000f7"/><polygon points="425.5,350.4 433.6,347.3 427.2,347.6 419.2,348.6" fill="#0000d9"/><polygon points="741.2,340.4 749.3,324.9 743,323.6 734.9,339.3" fill="#0018ff"/><polygon points="800.6,318.1 808.6,326 802.3,322.3 794.2,314.6" fill="#0073f6"/><polygon points="486.6,309.9 494.7,306.7 488.3,310.4 480.3,314.8" fill="#0075c6"/><polygon points="757.4,312.8 765.5,306 759.1,304.4 751,311.3" fill="#0097ff"/><polygon points="821.3,334.7 829.4,341.4 823,337.5 815,330.1" fill="#002bc5"/><polygon points="708.9,372.8 717,375.8 710.7,374.1 702.6,370.4" fill="#000060"/><polygon points="448,338.6 456.1,332.2 449.7,338 441.6,343.1" fill="#001aa7"/><polygon points="749.3,324.9 757.4,312.8 751,311.3 743,323.6" fill="#0058ff"/><polygon points="555.1,377.3 563.2,375 556.9,373 548.8,372.2" fill="#000087"/><polygon points="396.7,340 404.8,342.7 398.5,335.5 390.4,332.6" fill="#0018ff"/><polygon points="673.8,336.6 681.9,357.7 675.5,361.6 667.5,345" fill="#0038ff"/><polygon points="731.4,369.9 739.5,356.4 733.2,356.5 725.1,369.5" fill="#000097"/><polygon points="723.3,377.3 731.4,369.9 725.1,369.5 717,375.8" fill="#000087"/><polygon points="786.2,309.6 794.2,314.6 787.9,311.7 779.9,307.2" fill="#007aba"/><polygon points="577.6,360.9 585.6,355.5 579.3,368.9 571.2,371.8" fill="#0000c7"/><polygon points="630.6,320.2 638.7,336.1 632.3,353.4 624.3,343.7" fill="#0087ff"/><polygon points="842,349.2 850.1,350.7 843.8,348.3 835.7,345.4" fill="#0000c3"/><polygon points="515.4,314.3 523.5,316.2 517.2,306.8 509.1,306.7" fill="#0087ff"/><polygon points="771.8,307.6 779.9,307.2 773.5,305.1 765.5,306" fill="#009bed"/><polygon points="478.5,314.2 486.6,309.9 480.3,314.8 472.2,320" fill="#0071d5"/><polygon points="439.9,344.5 448,338.6 441.6,343.1 433.6,347.3" fill="#000592"/><polygon points="501,307.2 509.1,306.7 502.8,304.3 494.7,306.7" fill="#00a2f6"/><polygon points="739.5,356.4 747.5,340.3 741.2,340.4 733.2,356.5" fill="#0000d7"/><polygon points="608.1,329.1 616.2,334.8 609.9,355.6 601.8,352.8" fill="#0058ff"/><polygon points="417.4,352 425.5,350.4 419.2,348.6 411.1,348.4" fill="#0000e7"/><polygon points="694.5,355.6 702.6,370.4 696.3,369.2 688.2,355.4" fill="#0000e7"/><polygon points="534.4,356.5 542.5,360.8 536.1,345.7 528,341.3" fill="#0000d7"/><polygon points="540.7,369.5 548.8,372.2 542.5,360.8 534.4,356.5" fill="#0000a7"/><polygon points="806.9,322.2 815,330.1 808.6,326 800.6,318.1" fill="#006be5"/><polygon points="521.7,326.4 529.8,329.9 523.5,316.2 515.4,314.3" fill="#0058ff"/><polygon points="528,341.3 536.1,345.7 529.8,329.9 521.7,326.4" fill="#0018ff"/><polygon points="403,346.7 411.1,348.4 404.8,342.7 396.7,340" fill="#0008ff"/><polygon points="827.6,339.5 835.7,345.4 829.4,341.4 821.3,334.7" fill="#00199e"/><polygon points="659.4,321.1 667.5,345 661.2,354.2 653.1,336.6" fill="#0087ff"/><polygon points="569.5,367.8 577.6,360.9 571.2,371.8 563.2,375" fill="#0000a7"/><polygon points="470.5,319.5 478.5,314.2 472.2,320 464.1,325.9" fill="#0065d7"/><polygon points="645,314.9 653.1,336.6 646.8,351 638.7,336.1" fill="#0097ff"/><polygon points="747.5,340.3 755.6,325.2 749.3,324.9 741.2,340.4" fill="#0028ff"/><polygon points="715.2,376.1 723.3,377.3 717,375.8 708.9,372.8" fill="#00005b"/><polygon points="431.8,349.5 439.9,344.5 433.6,347.3 425.5,350.4" fill="#0000c0"/><polygon points="763.7,313.7 771.8,307.6 765.5,306 757.4,312.8" fill="#0097ff"/><polygon points="547,377.7 555.1,377.3 548.8,372.2 540.7,369.5" fill="#000087"/><polygon points="755.6,325.2 763.7,313.7 757.4,312.8 749.3,324.9" fill="#0068ff"/><polygon points="792.5,312.4 800.6,318.1 794.2,314.6 786.2,309.6" fill="#006eba"/><polygon points="492.9,308.5 501,307.2 494.7,306.7 486.6,309.9" fill="#0082c6"/><polygon points="388.6,336.9 396.7,340 390.4,332.6 382.3,329.6" fill="#0038ff"/><polygon points="848.3,352.6 856.4,352.5 850.1,350.7 842,349.2" fill="#0000de"/><polygon points="462.4,325.8 470.5,319.5 464.1,325.9 456.1,332.2" fill="#0053cc"/><polygon points="561.4,374.6 569.5,367.8 563.2,375 555.1,377.3" fill="#000075"/><polygon points="507.3,312.6 515.4,314.3 509.1,306.7 501,307.2" fill="#0097ff"/><polygon points="729.6,378.2 737.7,369 731.4,369.9 723.3,377.3" fill="#000087"/><polygon points="778.1,309.1 786.2,309.6 779.9,307.2 771.8,307.6" fill="#0092de"/><polygon points="737.7,369 745.8,354.9 739.5,356.4 731.4,369.9" fill="#0000a7"/><polygon points="409.4,351.9 417.4,352 411.1,348.4 403,346.7" fill="#0000f7"/><polygon points="813.2,326.8 821.3,334.7 815,330.1 806.9,322.2" fill="#0054d0"/><polygon points="834,344.5 842,349.2 835.7,345.4 827.6,339.5" fill="#000d90"/><polygon points="700.9,358.9 708.9,372.8 702.6,370.4 694.5,355.6" fill="#0000d7"/><polygon points="423.8,353.2 431.8,349.5 425.5,350.4 417.4,352" fill="#0000e3"/><polygon points="600,327.8 608.1,329.1 601.8,352.8 593.7,352.6" fill="#0068ff"/><polygon points="454.3,332.7 462.4,325.8 456.1,332.2 448,338.6" fill="#0032b3"/><polygon points="745.8,354.9 753.9,339.1 747.5,340.3 739.5,356.4" fill="#0000e7"/><polygon points="680.1,331.2 688.2,355.4 681.9,357.7 673.8,336.6" fill="#0058ff"/><polygon points="513.6,322.7 521.7,326.4 515.4,314.3 507.3,312.6" fill="#0078ff"/><polygon points="394.9,344 403,346.7 396.7,340 388.6,336.9" fill="#0018ff"/><polygon points="532.6,364.6 540.7,369.5 534.4,356.5 526.3,350.8" fill="#0000c7"/><polygon points="526.3,350.8 534.4,356.5 528,341.3 520,336" fill="#0000f7"/><polygon points="484.8,311 492.9,308.5 486.6,309.9 478.5,314.2" fill="#006194"/><polygon points="520,336 528,341.3 521.7,326.4 513.6,322.7" fill="#0038ff"/><polygon points="553.4,379.7 561.4,374.6 555.1,377.3 547,377.7" fill="#000073"/><polygon points="721.6,379.7 729.6,378.2 723.3,377.3 715.2,376.1" fill="#00007e"/><polygon points="446.2,339.8 454.3,332.7 448,338.6 439.9,344.5" fill="#001585"/><polygon points="770,314.2 778.1,309.1 771.8,307.6 763.7,313.7" fill="#0097ff"/><polygon points="538.9,375.4 547,377.7 540.7,369.5 532.6,364.6" fill="#000097"/><polygon points="753.9,339.1 762,324.6 755.6,325.2 747.5,340.3" fill="#0028ff"/><polygon points="798.8,315.8 806.9,322.2 800.6,318.1 792.5,312.4" fill="#006db7"/><polygon points="622.5,306.4 630.6,320.2 624.3,343.7 616.2,334.8" fill="#00c7ff"/><polygon points="819.5,332.1 827.6,339.5 821.3,334.7 813.2,326.8" fill="#003eb4"/><polygon points="499.2,311.6 507.3,312.6 501,307.2 492.9,308.5" fill="#00a7ff"/><polygon points="854.7,355.4 862.8,353.7 856.4,352.5 848.3,352.6" fill="#0000e3"/><polygon points="762,324.6 770,314.2 763.7,313.7 755.6,325.2" fill="#0068ff"/><polygon points="415.7,355.1 423.8,353.2 417.4,352 409.4,351.9" fill="#0000e7"/><polygon points="840.3,349.4 848.3,352.6 842,349.2 834,344.5" fill="#0006bb"/><polygon points="438.1,346.5 446.2,339.8 439.9,344.5 431.8,349.5" fill="#0010a9"/><polygon points="784.4,310.8 792.5,312.4 786.2,309.6 778.1,309.1" fill="#0085cb"/><polygon points="380.6,333.5 388.6,336.9 382.3,329.6 374.2,327" fill="#0048ff"/><polygon points="592,331.7 600,327.8 593.7,352.6 585.6,355.5" fill="#0058ff"/><polygon points="707.2,364.8 715.2,376.1 708.9,372.8 700.9,358.9" fill="#0000c7"/><polygon points="476.8,314.9 484.8,311 478.5,314.2 470.5,319.5" fill="#005690"/><polygon points="401.3,350.3 409.4,351.9 403,346.7 394.9,344" fill="#0008ff"/><polygon points="736,377.8 744,366.8 737.7,369 729.6,378.2" fill="#000097"/><polygon points="545.3,381.5 553.4,379.7 547,377.7 538.9,375.4" fill="#000087"/><polygon points="744,366.8 752.1,352.2 745.8,354.9 737.7,369" fill="#0000b7"/><polygon points="430.1,352.1 438.1,346.5 431.8,349.5 423.8,353.2" fill="#0000ca"/><polygon points="505.6,319.1 513.6,322.7 507.3,312.6 499.2,311.6" fill="#0087ff"/><polygon points="583.9,340.2 592,331.7 585.6,355.5 577.6,360.9" fill="#0038ff"/><polygon points="665.7,307.6 673.8,336.6 667.5,345 659.4,321.1" fill="#00c7ff"/><polygon points="468.7,320.2 476.8,314.9 470.5,319.5 462.4,325.8" fill="#0056a2"/><polygon points="805.2,319.9 813.2,326.8 806.9,322.2 798.8,315.8" fill="#005daf"/><polygon points="727.9,382.5 736,377.8 729.6,378.2 721.6,379.7" fill="#000087"/><polygon points="825.9,337.8 834,344.5 827.6,339.5 819.5,332.1" fill="#001f8c"/><polygon points="386.9,340.5 394.9,344 388.6,336.9 380.6,333.5" fill="#0038ff"/><polygon points="752.1,352.2 760.2,336.8 753.9,339.1 745.8,354.9" fill="#0000f7"/><polygon points="686.5,330.4 694.5,355.6 688.2,355.4 680.1,331.2" fill="#0068ff"/><polygon points="491.2,311.6 499.2,311.6 492.9,308.5 484.8,311" fill="#00a7ff"/><polygon points="575.8,351.7 583.9,340.2 577.6,360.9 569.5,367.8" fill="#0008ff"/><polygon points="776.3,314.5 784.4,310.8 778.1,309.1 770,314.2" fill="#00a7ff"/><polygon points="511.9,330.4 520,336 513.6,322.7 505.6,319.1" fill="#0058ff"/><polygon points="713.5,372.1 721.6,379.7 715.2,376.1 707.2,364.8" fill="#000092"/><polygon points="846.6,353.9 854.7,355.4 848.3,352.6 840.3,349.4" fill="#0000d3"/><polygon points="407.6,355.2 415.7,355.1 409.4,351.9 401.3,350.3" fill="#0000f7"/><polygon points="567.8,364 575.8,351.7 569.5,367.8 561.4,374.6" fill="#0000d7"/><polygon points="518.2,343.9 526.3,350.8 520,336 511.9,330.4" fill="#0028ff"/><polygon points="524.6,357.8 532.6,364.6 526.3,350.8 518.2,343.9" fill="#0000e7"/><polygon points="861,357.4 869.1,354.1 862.8,353.7 854.7,355.4" fill="#0000e7"/><polygon points="460.6,326.8 468.7,320.2 462.4,325.8 454.3,332.7" fill="#003f9c"/><polygon points="636.9,292.7 645,314.9 638.7,336.1 630.6,320.2" fill="#08fff7"/><polygon points="790.8,312.9 798.8,315.8 792.5,312.4 784.4,310.8" fill="#0078b7"/><polygon points="760.2,336.8 768.3,323.5 762,324.6 753.9,339.1" fill="#0048ff"/><polygon points="530.9,370.1 538.9,375.4 532.6,364.6 524.6,357.8" fill="#0000b7"/><polygon points="559.7,374.9 567.8,364 561.4,374.6 553.4,379.7" fill="#000085"/><polygon points="422,356.2 430.1,352.1 423.8,353.2 415.7,355.1" fill="#0000e7"/><polygon points="768.3,323.5 776.3,314.5 770,314.2 762,324.6" fill="#0078ff"/><polygon points="372.5,330.6 380.6,333.5 374.2,327 366.1,325.2" fill="#0058ff"/><polygon points="651.3,293.1 659.4,321.1 653.1,336.6 645,314.9" fill="#08fff7"/><polygon points="393.2,347.4 401.3,350.3 394.9,344 386.9,340.5" fill="#0018ff"/><polygon points="452.6,334.2 460.6,326.8 454.3,332.7 446.2,339.8" fill="#002b7d"/><polygon points="832.2,343.7 840.3,349.4 834,344.5 825.9,337.8" fill="#00199d"/><polygon points="811.5,324.7 819.5,332.1 813.2,326.8 805.2,319.9" fill="#004ba0"/><polygon points="537.2,379.3 545.3,381.5 538.9,375.4 530.9,370.1" fill="#000097"/><polygon points="551.6,382.2 559.7,374.9 553.4,379.7 545.3,381.5" fill="#00006f"/><polygon points="483.1,313.2 491.2,311.6 484.8,311 476.8,314.9" fill="#0089d2"/><polygon points="614.5,297.3 622.5,306.4 616.2,334.8 608.1,329.1" fill="#00f7ff"/><polygon points="444.5,342 452.6,334.2 446.2,339.8 438.1,346.5" fill="#0023a1"/><polygon points="497.5,316.4 505.6,319.1 499.2,311.6 491.2,311.6" fill="#0097ff"/><polygon points="719.8,379.4 727.9,382.5 721.6,379.7 713.5,372.1" fill="#000067"/><polygon points="742.3,375.5 750.4,363 744,366.8 736,377.8" fill="#0000a7"/><polygon points="692.8,334.7 700.9,358.9 694.5,355.6 686.5,330.4" fill="#0058ff"/><polygon points="734.2,383.3 742.3,375.5 736,377.8 727.9,382.5" fill="#000087"/><polygon points="852.9,357.7 861,357.4 854.7,355.4 846.6,353.9" fill="#0000e9"/><polygon points="750.4,363 758.5,348.2 752.1,352.2 744,366.8" fill="#0000d7"/><polygon points="413.9,358.2 422,356.2 415.7,355.1 407.6,355.2" fill="#0000e7"/><polygon points="378.8,336.9 386.9,340.5 380.6,333.5 372.5,330.6" fill="#0048ff"/><polygon points="782.7,314.9 790.8,312.9 784.4,310.8 776.3,314.5" fill="#00a7ff"/><polygon points="436.4,349.2 444.5,342 438.1,346.5 430.1,352.1" fill="#0012c5"/><polygon points="399.5,353.4 407.6,355.2 401.3,350.3 393.2,347.4" fill="#0008ff"/><polygon points="797.1,315.7 805.2,319.9 798.8,315.8 790.8,312.9" fill="#006da7"/><polygon points="867.3,358.3 875.4,353.6 869.1,354.1 861,357.4" fill="#0000f7"/><polygon points="838.5,349.6 846.6,353.9 840.3,349.4 832.2,343.7" fill="#0012c2"/><polygon points="475,316.6 483.1,313.2 476.8,314.9 468.7,320.2" fill="#0072ad"/><polygon points="503.8,325.1 511.9,330.4 505.6,319.1 497.5,316.4" fill="#0078ff"/><polygon points="817.8,330.4 825.9,337.8 819.5,332.1 811.5,324.7" fill="#003481"/><polygon points="758.5,348.2 766.5,333.8 760.2,336.8 752.1,352.2" fill="#0018ff"/><polygon points="543.5,384.6 551.6,382.2 545.3,381.5 537.2,379.3" fill="#000087"/><polygon points="364.4,328.5 372.5,330.6 366.1,325.2 358.1,324.7" fill="#0068ff"/><polygon points="774.6,322.1 782.7,314.9 776.3,314.5 768.3,323.5" fill="#0087ff"/><polygon points="510.1,336.6 518.2,343.9 511.9,330.4 503.8,325.1" fill="#0048ff"/><polygon points="428.3,355.2 436.4,349.2 430.1,352.1 422,356.2" fill="#0000da"/><polygon points="766.5,333.8 774.6,322.1 768.3,323.5 760.2,336.8" fill="#0058ff"/><polygon points="385.1,343.6 393.2,347.4 386.9,340.5 378.8,336.9" fill="#0038ff"/><polygon points="516.5,349.5 524.6,357.8 518.2,343.9 510.1,336.6" fill="#0018ff"/><polygon points="726.1,384.8 734.2,383.3 727.9,382.5 719.8,379.4" fill="#000082"/><polygon points="699.1,343.6 707.2,364.8 700.9,358.9 692.8,334.7" fill="#0038ff"/><polygon points="672,299 680.1,331.2 673.8,336.6 665.7,307.6" fill="#00f7ff"/><polygon points="489.4,315.2 497.5,316.4 491.2,311.6 483.1,313.2" fill="#00a7ff"/><polygon points="522.8,362.1 530.9,370.1 524.6,357.8 516.5,349.5" fill="#0000e7"/><polygon points="466.9,321.9 475,316.6 468.7,320.2 460.6,326.8" fill="#00529a"/><polygon points="405.9,358.1 413.9,358.2 407.6,355.2 399.5,353.4" fill="#0000f7"/><polygon points="859.2,360.5 867.3,358.3 861,357.4 852.9,357.7" fill="#0000e7"/><polygon points="529.1,373.2 537.2,379.3 530.9,370.1 522.8,362.1" fill="#0000b7"/><polygon points="803.4,319.4 811.5,324.7 805.2,319.9 797.1,315.7" fill="#005e9e"/><polygon points="824.1,336.7 832.2,343.7 825.9,337.8 817.8,330.4" fill="#00359a"/><polygon points="606.4,294.9 614.5,297.3 608.1,329.1 600,327.8" fill="#08fff7"/><polygon points="844.9,355.1 852.9,357.7 846.6,353.9 838.5,349.6" fill="#0007de"/><polygon points="420.2,359.4 428.3,355.2 422,356.2 413.9,358.2" fill="#0000ee"/><polygon points="458.9,328.8 466.9,321.9 460.6,326.8 452.6,334.2" fill="#00499c"/><polygon points="789,315.8 797.1,315.7 790.8,312.9 782.7,314.9" fill="#00a3f9"/><polygon points="705.4,355.5 713.5,372.1 707.2,364.8 699.1,343.6" fill="#0008ff"/><polygon points="370.7,333.6 378.8,336.9 372.5,330.6 364.4,328.5" fill="#0058ff"/><polygon points="557.9,378 566,364.3 559.7,374.9 551.6,382.2" fill="#000072"/><polygon points="391.4,350.2 399.5,353.4 393.2,347.4 385.1,343.6" fill="#0018ff"/><polygon points="740.6,381.4 748.6,371.1 742.3,375.5 734.2,383.3" fill="#000097"/><polygon points="748.6,371.1 756.7,357.7 750.4,363 742.3,375.5" fill="#0000c7"/><polygon points="566,364.3 574.1,346.8 567.8,364 559.7,374.9" fill="#0000d6"/><polygon points="356.3,327.8 364.4,328.5 358.1,324.7 350,325.5" fill="#0078ff"/><polygon points="450.8,336.8 458.9,328.8 452.6,334.2 444.5,342" fill="#003db0"/><polygon points="535.4,381.6 543.5,384.6 537.2,379.3 529.1,373.2" fill="#000097"/><polygon points="549.9,385.8 557.9,378 551.6,382.2 543.5,384.6" fill="#000082"/><polygon points="495.8,320.9 503.8,325.1 497.5,316.4 489.4,315.2" fill="#0097ff"/><polygon points="873.6,358.1 881.7,352.2 875.4,353.6 867.3,358.3" fill="#0000f7"/><polygon points="711.8,368.3 719.8,379.4 713.5,372.1 705.4,355.5" fill="#000092"/><polygon points="481.4,316 489.4,315.2 483.1,313.2 475,316.6" fill="#009cee"/><polygon points="628.9,273.7 636.9,292.7 630.6,320.2 622.5,306.4" fill="#68ff97"/><polygon points="756.7,357.7 764.8,343.3 758.5,348.2 750.4,363" fill="#0000f7"/><polygon points="442.7,345 450.8,336.8 444.5,342 436.4,349.2" fill="#002cc9"/><polygon points="830.5,343.4 838.5,349.6 832.2,343.7 824.1,336.7" fill="#0029bc"/><polygon points="574.1,346.8 582.1,328.2 575.8,351.7 567.8,364" fill="#0028ff"/><polygon points="732.5,387.1 740.6,381.4 734.2,383.3 726.1,384.8" fill="#000087"/><polygon points="780.9,320.8 789,315.8 782.7,314.9 774.6,322.1" fill="#0097ff"/><polygon points="809.7,324.1 817.8,330.4 811.5,324.7 803.4,319.4" fill="#0056a3"/><polygon points="598.3,299.9 606.4,294.9 600,327.8 592,331.7" fill="#00f7ff"/><polygon points="764.8,343.3 772.9,330.4 766.5,333.8 758.5,348.2" fill="#0038ff"/><polygon points="377.1,339.7 385.1,343.6 378.8,336.9 370.7,333.6" fill="#0048ff"/><polygon points="412.2,361.3 420.2,359.4 413.9,358.2 405.9,358.1" fill="#0000e7"/><polygon points="851.2,359.8 859.2,360.5 852.9,357.7 844.9,355.1" fill="#0000ea"/><polygon points="718.1,379.6 726.1,384.8 719.8,379.4 711.8,368.3" fill="#000095"/><polygon points="502.1,329.8 510.1,336.6 503.8,325.1 495.8,320.9" fill="#0078ff"/><polygon points="434.6,352.7 442.7,345 436.4,349.2 428.3,355.2" fill="#0015e1"/><polygon points="772.9,330.4 780.9,320.8 774.6,322.1 766.5,333.8" fill="#0078ff"/><polygon points="397.8,356 405.9,358.1 399.5,353.4 391.4,350.2" fill="#0008ff"/><polygon points="582.1,328.2 590.2,311.7 583.9,340.2 575.8,351.7" fill="#0087ff"/><polygon points="865.6,362 873.6,358.1 867.3,358.3 859.2,360.5" fill="#0000e7"/><polygon points="657.6,274.6 665.7,307.6 659.4,321.1 651.3,293.1" fill="#68ff97"/><polygon points="590.2,311.7 598.3,299.9 592,331.7 583.9,340.2" fill="#00c7ff"/><polygon points="795.3,317.5 803.4,319.4 797.1,315.7 789,315.8" fill="#0094e2"/><polygon points="473.3,319.1 481.4,316 475,316.6 466.9,321.9" fill="#0089d1"/><polygon points="508.4,340.7 516.5,349.5 510.1,336.6 502.1,329.8" fill="#0048ff"/><polygon points="541.8,387 549.9,385.8 543.5,384.6 535.4,381.6" fill="#000084"/><polygon points="678.4,297.1 686.5,330.4 680.1,331.2 672,299" fill="#08fff7"/><polygon points="362.6,331.4 370.7,333.6 364.4,328.5 356.3,327.8" fill="#0068ff"/><polygon points="836.8,350.2 844.9,355.1 838.5,349.6 830.5,343.4" fill="#0022d8"/><polygon points="426.6,358.8 434.6,352.7 428.3,355.2 420.2,359.4" fill="#0000eb"/><polygon points="514.7,352.6 522.8,362.1 516.5,349.5 508.4,340.7" fill="#0018ff"/><polygon points="643.2,265.2 651.3,293.1 645,314.9 636.9,292.7" fill="#97ff68"/><polygon points="383.4,346.1 391.4,350.2 385.1,343.6 377.1,339.7" fill="#0038ff"/><polygon points="816,329.8 824.1,336.7 817.8,330.4 809.7,324.1" fill="#0053b2"/><polygon points="487.7,318.7 495.8,320.9 489.4,315.2 481.4,316" fill="#00a7ff"/><polygon points="724.4,387.4 732.5,387.1 726.1,384.8 718.1,379.6" fill="#000087"/><polygon points="521.1,364 529.1,373.2 522.8,362.1 514.7,352.6" fill="#0000e7"/><polygon points="465.2,324.6 473.3,319.1 466.9,321.9 458.9,328.8" fill="#0069c6"/><polygon points="404.1,360.7 412.2,361.3 405.9,358.1 397.8,356" fill="#0000f7"/><polygon points="880,356.9 888,350.1 881.7,352.2 873.6,358.1" fill="#0008ff"/><polygon points="857.5,363.3 865.6,362 859.2,360.5 851.2,359.8" fill="#0000e5"/><polygon points="746.9,376.5 754.9,364.6 748.6,371.1 740.6,381.4" fill="#0000b7"/><polygon points="527.4,373.9 535.4,381.6 529.1,373.2 521.1,364" fill="#0000c0"/><polygon points="787.2,320.2 795.3,317.5 789,315.8 780.9,320.8" fill="#00a7ff"/><polygon points="418.5,362.8 426.6,358.8 420.2,359.4 412.2,361.3" fill="#0000e5"/><polygon points="556.2,383.9 564.2,370.2 557.9,378 549.9,385.8" fill="#000097"/><polygon points="754.9,364.6 763,351.2 756.7,357.7 748.6,371.1" fill="#0000e7"/><polygon points="457.1,331.9 465.2,324.6 458.9,328.8 450.8,336.8" fill="#005fca"/><polygon points="738.8,385.3 746.9,376.5 740.6,381.4 732.5,387.1" fill="#00008e"/><polygon points="369,336.3 377.1,339.7 370.7,333.6 362.6,331.4" fill="#0068ff"/><polygon points="843.1,356.5 851.2,359.8 844.9,355.1 836.8,350.2" fill="#0007ee"/><polygon points="801.6,320.5 809.7,324.1 803.4,319.4 795.3,317.5" fill="#008bd4"/><polygon points="822.4,336.5 830.5,343.4 824.1,336.7 816,329.8" fill="#0051c7"/><polygon points="389.7,352.4 397.8,356 391.4,350.2 383.4,346.1" fill="#0018ff"/><polygon points="564.2,370.2 572.3,349.9 566,364.3 557.9,378" fill="#0000c5"/><polygon points="763,351.2 771.1,338.1 764.8,343.3 756.7,357.7" fill="#0028ff"/><polygon points="871.9,362.1 880,356.9 873.6,358.1 865.6,362" fill="#0000f7"/><polygon points="449.1,340.4 457.1,331.9 450.8,336.8 442.7,345" fill="#004bda"/><polygon points="494,324.5 502.1,329.8 495.8,320.9 487.7,318.7" fill="#0097ff"/><polygon points="548.1,389.7 556.2,383.9 549.9,385.8 541.8,387" fill="#000087"/><polygon points="684.7,302.5 692.8,334.7 686.5,330.4 678.4,297.1" fill="#00f7ff"/><polygon points="779.2,327.3 787.2,320.2 780.9,320.8 772.9,330.4" fill="#0087ff"/><polygon points="771.1,338.1 779.2,327.3 772.9,330.4 764.8,343.3" fill="#0058ff"/><polygon points="479.6,319.1 487.7,318.7 481.4,316 473.3,319.1" fill="#00a4fa"/><polygon points="533.7,381.8 541.8,387 535.4,381.6 527.4,373.9" fill="#00008b"/><polygon points="441,349.1 449.1,340.4 442.7,345 434.6,352.7" fill="#0025ec"/><polygon points="730.7,390.2 738.8,385.3 732.5,387.1 724.4,387.4" fill="#000082"/><polygon points="620.8,261.4 628.9,273.7 622.5,306.4 614.5,297.3" fill="#b7ff48"/><polygon points="410.4,364.1 418.5,362.8 412.2,361.3 404.1,360.7" fill="#0000e6"/><polygon points="500.3,332.9 508.4,340.7 502.1,329.8 494,324.5" fill="#0078ff"/><polygon points="432.9,356.9 441,349.1 434.6,352.7 426.6,358.8" fill="#0008fb"/><polygon points="375.3,342 383.4,346.1 377.1,339.7 369,336.3" fill="#0048ff"/><polygon points="828.7,343.9 836.8,350.2 830.5,343.4 822.4,336.5" fill="#003fdf"/><polygon points="710,368.6 718.1,379.6 711.8,368.3 703.7,350.7" fill="#0000d7"/><polygon points="849.4,362 857.5,363.3 851.2,359.8 843.1,356.5" fill="#0000f4"/><polygon points="691,314.7 699.1,343.6 692.8,334.7 684.7,302.5" fill="#00c7ff"/><polygon points="863.8,365.3 871.9,362.1 865.6,362 857.5,363.3" fill="#0000e7"/><polygon points="808,324.8 816,329.8 809.7,324.1 801.6,320.5" fill="#007dd3"/><polygon points="703.7,350.7 711.8,368.3 705.4,355.5 697.4,331.7" fill="#001794"/><polygon points="396,358.1 404.1,360.7 397.8,356 389.7,352.4" fill="#0008fe"/><polygon points="572.3,349.9 580.4,325.5 574.1,346.8 566,364.3" fill="#0020cb"/><polygon points="716.3,382.7 724.4,387.4 718.1,379.6 710,368.6" fill="#0000a7"/><polygon points="697.4,331.7 705.4,355.5 699.1,343.6 691,314.7" fill="#0087ff"/><polygon points="793.6,320.6 801.6,320.5 795.3,317.5 787.2,320.2" fill="#00a7fe"/><polygon points="506.6,342.8 514.7,352.6 508.4,340.7 500.3,332.9" fill="#0048ff"/><polygon points="471.5,322.2 479.6,319.1 473.3,319.1 465.2,324.6" fill="#0098e7"/><polygon points="886.3,354.7 894.4,347.6 888,350.1 880,356.9" fill="#0018ff"/><polygon points="424.8,362.8 432.9,356.9 426.6,358.8 418.5,362.8" fill="#0000f7"/><polygon points="540,387.6 548.1,389.7 541.8,387 533.7,381.8" fill="#000078"/><polygon points="513,353.2 521.1,364 514.7,352.6 506.6,342.8" fill="#0028ff"/><polygon points="664,262.7 672,299 665.7,307.6 657.6,274.6" fill="#b7ff48"/><polygon points="485.9,321.8 494,324.5 487.7,318.7 479.6,319.1" fill="#00a7ff"/><polygon points="835,351.4 843.1,356.5 836.8,350.2 828.7,343.9" fill="#0026f4"/><polygon points="722.6,391 730.7,390.2 724.4,387.4 716.3,382.7" fill="#000087"/><polygon points="381.6,348.1 389.7,352.4 383.4,346.1 375.3,342" fill="#0038ff"/><polygon points="554.4,390.5 562.5,380.2 556.2,383.9 548.1,389.7" fill="#000087"/><polygon points="463.4,328.1 471.5,322.2 465.2,324.6 457.1,331.9" fill="#007ae5"/><polygon points="878.2,360.9 886.3,354.7 880,356.9 871.9,362.1" fill="#0008ff"/><polygon points="814.3,330.5 822.4,336.5 816,329.8 808,324.8" fill="#0075dc"/><polygon points="562.5,380.2 570.6,360.9 564.2,370.2 556.2,383.9" fill="#0000a7"/><polygon points="745.1,379.6 753.2,369 746.9,376.5 738.8,385.3" fill="#000083"/><polygon points="753.2,369 761.3,356.8 754.9,364.6 746.9,376.5" fill="#0000c4"/><polygon points="519.3,363.2 527.4,373.9 521.1,364 513,353.2" fill="#0000c9"/><polygon points="785.5,325 793.6,320.6 787.2,320.2 779.2,327.3" fill="#0097ff"/><polygon points="402.4,362.9 410.4,364.1 404.1,360.7 396,358.1" fill="#0000f0"/><polygon points="855.8,366.1 863.8,365.3 857.5,363.3 849.4,362" fill="#0000f7"/><polygon points="416.8,366.1 424.8,362.8 418.5,362.8 410.4,364.1" fill="#0000e7"/><polygon points="580.4,325.5 588.5,300.7 582.1,328.2 574.1,346.8" fill="#0097ff"/><polygon points="761.3,356.8 769.4,344.3 763,351.2 754.9,364.6" fill="#0018fe"/><polygon points="455.4,336.1 463.4,328.1 457.1,331.9 449.1,340.4" fill="#0061ef"/><polygon points="737.1,387.6 745.1,379.6 738.8,385.3 730.7,390.2" fill="#000069"/><polygon points="777.4,333.2 785.5,325 779.2,327.3 771.1,338.1" fill="#0078ff"/><polygon points="769.4,344.3 777.4,333.2 771.1,338.1 763,351.2" fill="#0048ff"/><polygon points="447.3,345.1 455.4,336.1 449.1,340.4 441,349.1" fill="#0047fd"/><polygon points="841.4,358.5 849.4,362 843.1,356.5 835,351.4" fill="#0018ff"/><polygon points="799.9,322.7 808,324.8 801.6,320.5 793.6,320.6" fill="#009ef1"/><polygon points="870.1,365.7 878.2,360.9 871.9,362.1 863.8,365.3" fill="#0000f3"/><polygon points="525.6,372 533.7,381.8 527.4,373.9 519.3,363.2" fill="#00007c"/><polygon points="546.4,391.6 554.4,390.5 548.1,389.7 540,387.6" fill="#000078"/><polygon points="492.2,327.1 500.3,332.9 494,324.5 485.9,321.8" fill="#0097ff"/><polygon points="387.9,354.1 396,358.1 389.7,352.4 381.6,348.1" fill="#0026f6"/><polygon points="612.7,257.9 620.8,261.4 614.5,297.3 606.4,294.9" fill="#c7ff38"/><polygon points="439.2,354 447.3,345.1 441,349.1 432.9,356.9" fill="#0028ff"/><polygon points="820.6,337.5 828.7,343.9 822.4,336.5 814.3,330.5" fill="#0060ed"/><polygon points="477.9,322.2 485.9,321.8 479.6,319.1 471.5,322.2" fill="#00a6fd"/><polygon points="635.2,241.6 643.2,265.2 636.9,292.7 628.9,273.7" fill="#ffe700"/><polygon points="570.6,360.9 578.6,334.4 572.3,349.9 564.2,370.2" fill="#0008ff"/><polygon points="729,392.6 737.1,387.6 730.7,390.2 722.6,391" fill="#000073"/><polygon points="431.2,361.6 439.2,354 432.9,356.9 424.8,362.8" fill="#0008ff"/><polygon points="649.6,242 657.6,274.6 651.3,293.1 643.2,265.2" fill="#ffe700"/><polygon points="892.6,351.9 900.7,345.1 894.4,347.6 886.3,354.7" fill="#0037fd"/><polygon points="588.5,300.7 596.6,279.1 590.2,311.7 582.1,328.2" fill="#08fff7"/><polygon points="408.7,366.7 416.8,366.1 410.4,364.1 402.4,362.9" fill="#0000f0"/><polygon points="714.6,388.7 722.6,391 716.3,382.7 708.2,374.5" fill="#000097"/><polygon points="532,379.4 540,387.6 533.7,381.8 525.6,372" fill="#000071"/><polygon points="708.2,374.5 716.3,382.7 710,368.6 701.9,353.8" fill="#0000d7"/><polygon points="498.6,334.3 506.6,342.8 500.3,332.9 492.2,327.1" fill="#0078ff"/><polygon points="862.1,368.5 870.1,365.7 863.8,365.3 855.8,366.1" fill="#0000e6"/><polygon points="847.7,364.6 855.8,366.1 849.4,362 841.4,358.5" fill="#0000f7"/><polygon points="826.9,345.4 835,351.4 828.7,343.9 820.6,337.5" fill="#0058ff"/><polygon points="560.8,390.4 568.8,376.4 562.5,380.2 554.4,390.5" fill="#000087"/><polygon points="394.3,359.7 402.4,362.9 396,358.1 387.9,354.1" fill="#0016ed"/><polygon points="791.8,324.2 799.9,322.7 793.6,320.6 785.5,325" fill="#00a7ff"/><polygon points="806.2,326.5 814.3,330.5 808,324.8 799.9,322.7" fill="#009ef1"/><polygon points="469.8,325.9 477.9,322.2 471.5,322.2 463.4,328.1" fill="#00a3f9"/><polygon points="884.6,358.6 892.6,351.9 886.3,354.7 878.2,360.9" fill="#0017f5"/><polygon points="423.1,366.9 431.2,361.6 424.8,362.8 416.8,366.1" fill="#0000f7"/><polygon points="604.6,264 612.7,257.9 606.4,294.9 598.3,299.9" fill="#b7ff48"/><polygon points="596.6,279.1 604.6,264 598.3,299.9 590.2,311.7" fill="#68ff97"/><polygon points="504.9,342.8 513,353.2 506.6,342.8 498.6,334.3" fill="#004ee3"/><polygon points="701.9,353.8 710,368.6 703.7,350.7 695.6,329" fill="#0028ff"/><polygon points="670.3,259.6 678.4,297.1 672,299 664,262.7" fill="#c7ff38"/><polygon points="552.7,394.3 560.8,390.4 554.4,390.5 546.4,391.6" fill="#000087"/><polygon points="720.9,394.8 729,392.6 722.6,391 714.6,388.7" fill="#000087"/><polygon points="484.2,324.5 492.2,327.1 485.9,321.8 477.9,322.2" fill="#00a7ff"/><polygon points="461.7,332.6 469.8,325.9 463.4,328.1 455.4,336.1" fill="#0087ff"/><polygon points="876.5,364.5 884.6,358.6 878.2,360.9 870.1,365.7" fill="#0008f1"/><polygon points="538.3,385.1 546.4,391.6 540,387.6 532,379.4" fill="#000075"/><polygon points="568.8,376.4 576.9,352.5 570.6,360.9 562.5,380.2" fill="#0000c7"/><polygon points="833.3,353.6 841.4,358.5 835,351.4 826.9,345.4" fill="#0038ff"/><polygon points="783.8,329.5 791.8,324.2 785.5,325 777.4,333.2" fill="#0097ff"/><polygon points="511.2,351.5 519.3,363.2 513,353.2 504.9,342.8" fill="#0025a9"/><polygon points="751.4,370.8 759.5,359.9 753.2,369 745.1,379.6" fill="#000090"/><polygon points="759.5,359.9 767.6,348.5 761.3,356.8 753.2,369" fill="#000f9f"/><polygon points="453.6,341.3 461.7,332.6 455.4,336.1 447.3,345.1" fill="#0068ff"/><polygon points="854,369.1 862.1,368.5 855.8,366.1 847.7,364.6" fill="#0000f7"/><polygon points="743.4,380.4 751.4,370.8 745.1,379.6 737.1,387.6" fill="#000095"/><polygon points="775.7,337.9 783.8,329.5 777.4,333.2 769.4,344.3" fill="#0074f7"/><polygon points="767.6,348.5 775.7,337.9 769.4,344.3 761.3,356.8" fill="#003cd5"/><polygon points="415,369.3 423.1,366.9 416.8,366.1 408.7,366.7" fill="#0000e7"/><polygon points="812.6,332.2 820.6,337.5 814.3,330.5 806.2,326.5" fill="#0086fc"/><polygon points="578.6,334.4 586.7,303.8 580.4,325.5 572.3,349.9" fill="#0087ff"/><polygon points="400.6,364.6 408.7,366.7 402.4,362.9 394.3,359.7" fill="#0007e9"/><polygon points="445.6,350.8 453.6,341.3 447.3,345.1 439.2,354" fill="#0038ff"/><polygon points="695.6,329 703.7,350.7 697.4,331.7 689.3,303.7" fill="#0095fb"/><polygon points="735.3,387.9 743.4,380.4 737.1,387.6 729,392.6" fill="#00007a"/><polygon points="868.4,368.9 876.5,364.5 870.1,365.7 862.1,368.5" fill="#0000eb"/><polygon points="437.5,359.7 445.6,350.8 439.2,354 431.2,361.6" fill="#0018ff"/><polygon points="798.1,325.5 806.2,326.5 799.9,322.7 791.8,324.2" fill="#00a6fd"/><polygon points="517.5,359.9 525.6,372 519.3,363.2 511.2,351.5" fill="#0010a8"/><polygon points="839.6,361.2 847.7,364.6 841.4,358.5 833.3,353.6" fill="#0018ff"/><polygon points="898.9,349 907,342.9 900.7,345.1 892.6,351.9" fill="#0045f4"/><polygon points="490.5,328.8 498.6,334.3 492.2,327.1 484.2,324.5" fill="#0092f7"/><polygon points="706.5,384.5 714.6,388.7 708.2,374.5 700.2,364.8" fill="#0000a7"/><polygon points="476.1,325.6 484.2,324.5 477.9,322.2 469.8,325.9" fill="#00a7ff"/><polygon points="676.6,266.2 684.7,302.5 678.4,297.1 670.3,259.6" fill="#b7ff48"/><polygon points="567.1,390.5 575.1,374 568.8,376.4 560.8,390.4" fill="#000097"/><polygon points="429.4,366.7 437.5,359.7 431.2,361.6 423.1,366.9" fill="#0000f7"/><polygon points="712.8,395.2 720.9,394.8 714.6,388.7 706.5,384.5" fill="#000087"/><polygon points="544.6,389.5 552.7,394.3 546.4,391.6 538.3,385.1" fill="#00006a"/><polygon points="818.9,339.6 826.9,345.4 820.6,337.5 812.6,332.2" fill="#0078ff"/><polygon points="559,396.3 567.1,390.5 560.8,390.4 552.7,394.3" fill="#000087"/><polygon points="689.3,303.7 697.4,331.7 691,314.7 682.9,281.6" fill="#08fff7"/><polygon points="890.9,355.6 898.9,349 892.6,351.9 884.6,358.6" fill="#0033ea"/><polygon points="727.2,393.2 735.3,387.9 729,392.6 720.9,394.8" fill="#00004f"/><polygon points="523.9,367.4 532,379.4 525.6,372 517.5,359.9" fill="#0000db"/><polygon points="682.9,281.6 691,314.7 684.7,302.5 676.6,266.2" fill="#68ff97"/><polygon points="406.9,368.6 415,369.3 408.7,366.7 400.6,364.6" fill="#0000e3"/><polygon points="860.3,371.5 868.4,368.9 862.1,368.5 854,369.1" fill="#0000e5"/><polygon points="576.9,352.5 585,321 578.6,334.4 570.6,360.9" fill="#0038ff"/><polygon points="700.2,364.8 708.2,374.5 701.9,353.8 693.9,337.8" fill="#0008ff"/><polygon points="845.9,367.7 854,369.1 847.7,364.6 839.6,361.2" fill="#0000f7"/><polygon points="790.1,327.7 798.1,325.5 791.8,324.2 783.8,329.5" fill="#00a5fb"/><polygon points="468,330.3 476.1,325.6 469.8,325.9 461.7,332.6" fill="#0097ff"/><polygon points="496.8,334.6 504.9,342.8 498.6,334.3 490.5,328.8" fill="#0072d6"/><polygon points="421.3,370.8 429.4,366.7 423.1,366.9 415,369.3" fill="#0000e7"/><polygon points="627.1,226.2 635.2,241.6 628.9,273.7 620.8,261.4" fill="#ff9700"/><polygon points="882.8,362 890.9,355.6 884.6,358.6 876.5,364.5" fill="#0015e3"/><polygon points="825.2,348 833.3,353.6 826.9,345.4 818.9,339.6" fill="#0058ff"/><polygon points="804.5,329 812.6,332.2 806.2,326.5 798.1,325.5" fill="#00a7ff"/><polygon points="575.1,374 583.2,347.2 576.9,352.5 568.8,376.4" fill="#0000d7"/><polygon points="459.9,338.1 468,330.3 461.7,332.6 453.6,341.3" fill="#0078ff"/><polygon points="719.1,396.8 727.2,393.2 720.9,394.8 712.8,395.2" fill="#00006d"/><polygon points="586.7,303.8 594.8,273.2 588.5,300.7 580.4,325.5" fill="#08fff7"/><polygon points="530.2,373.7 538.3,385.1 532,379.4 523.9,367.4" fill="#0000e7"/><polygon points="550.9,392.6 559,396.3 552.7,394.3 544.6,389.5" fill="#000065"/><polygon points="782,333.1 790.1,327.7 783.8,329.5 775.7,337.9" fill="#0089e6"/><polygon points="482.4,327.1 490.5,328.8 484.2,324.5 476.1,325.6" fill="#00a4fa"/><polygon points="874.7,367.6 882.8,362 876.5,364.5 868.4,368.9" fill="#0007e2"/><polygon points="451.9,347.6 459.9,338.1 453.6,341.3 445.6,350.8" fill="#0058ff"/><polygon points="655.9,227.1 664,262.7 657.6,274.6 649.6,242" fill="#ff9700"/><polygon points="831.5,356.7 839.6,361.2 833.3,353.6 825.2,348" fill="#0038ff"/><polygon points="503.2,341.2 511.2,351.5 504.9,342.8 496.8,334.6" fill="#00499b"/><polygon points="704.8,394.7 712.8,395.2 706.5,384.5 698.4,380.3" fill="#000087"/><polygon points="443.8,357.3 451.9,347.6 445.6,350.8 437.5,359.7" fill="#0028ff"/><polygon points="565.3,398.1 573.4,391.7 567.1,390.5 559,396.3" fill="#000087"/><polygon points="905.3,346.5 913.4,341.6 907,342.9 898.9,349" fill="#0052ee"/><polygon points="773.9,341 782,333.1 775.7,337.9 767.6,348.5" fill="#0058bb"/><polygon points="573.4,391.7 581.5,374.3 575.1,374 567.1,390.5" fill="#000097"/><polygon points="852.2,372.3 860.3,371.5 854,369.1 845.9,367.7" fill="#0000f7"/><polygon points="765.9,350.5 773.9,341 767.6,348.5 759.5,359.9" fill="#00278c"/><polygon points="413.2,371.8 421.3,370.8 415,369.3 406.9,368.6" fill="#0000ec"/><polygon points="757.8,360.5 765.9,350.5 759.5,359.9 751.4,370.8" fill="#0021d4"/><polygon points="435.7,365.7 443.8,357.3 437.5,359.7 429.4,366.7" fill="#0008ff"/><polygon points="810.8,334.9 818.9,339.6 812.6,332.2 804.5,329" fill="#0087ff"/><polygon points="698.4,380.3 706.5,384.5 700.2,364.8 692.1,356" fill="#0000c7"/><polygon points="749.7,370 757.8,360.5 751.4,370.8 743.4,380.4" fill="#0000f7"/><polygon points="693.9,337.8 701.9,353.8 695.6,329 687.5,306.8" fill="#0087ff"/><polygon points="866.6,371.9 874.7,367.6 868.4,368.9 860.3,371.5" fill="#0000e2"/><polygon points="741.6,378.5 749.7,370 743.4,380.4 735.3,387.9" fill="#0000d7"/><polygon points="796.4,328.5 804.5,329 798.1,325.5 790.1,327.7" fill="#00a7ff"/><polygon points="837.9,364.7 845.9,367.7 839.6,361.2 831.5,356.7" fill="#0018ff"/><polygon points="897.2,352.4 905.3,346.5 898.9,349 890.9,355.6" fill="#003fe2"/><polygon points="509.5,348.1 517.5,359.9 511.2,351.5 503.2,341.2" fill="#003fb7"/><polygon points="641.5,214.8 649.6,242 643.2,265.2 635.2,241.6" fill="#ff6800"/><polygon points="536.5,378.6 544.6,389.5 538.3,385.1 530.2,373.7" fill="#0000d7"/><polygon points="711.1,399 719.1,396.8 712.8,395.2 704.8,394.7" fill="#000087"/><polygon points="427.7,371.5 435.7,365.7 429.4,366.7 421.3,370.8" fill="#0000f7"/><polygon points="474.4,329.6 482.4,327.1 476.1,325.6 468,330.3" fill="#00a7ff"/><polygon points="488.8,330.1 496.8,334.6 490.5,328.8 482.4,327.1" fill="#0094e2"/><polygon points="733.5,385.4 741.6,378.5 735.3,387.9 727.2,393.2" fill="#0000b7"/><polygon points="817.1,342.7 825.2,348 818.9,339.6 810.8,334.9" fill="#0078ff"/><polygon points="557.2,394.8 565.3,398.1 559,396.3 550.9,392.6" fill="#000064"/><polygon points="889.1,358.7 897.2,352.4 890.9,355.6 882.8,362" fill="#002fd6"/><polygon points="585,321 593.1,285.3 586.7,303.8 578.6,334.4" fill="#00c7ff"/><polygon points="594.8,273.2 602.9,246.9 596.6,279.1 588.5,300.7" fill="#97ff68"/><polygon points="581.5,374.3 589.5,346.4 583.2,347.2 575.1,374" fill="#0000e7"/><polygon points="696.7,394.4 704.8,394.7 698.4,380.3 690.4,377.5" fill="#000097"/><polygon points="619,221.7 627.1,226.2 620.8,261.4 612.7,257.9" fill="#ff7800"/><polygon points="571.7,399.8 579.7,394.1 573.4,391.7 565.3,398.1" fill="#000087"/><polygon points="466.3,335.8 474.4,329.6 468,330.3 459.9,338.1" fill="#0087ff"/><polygon points="515.8,354.7 523.9,367.4 517.5,359.9 509.5,348.1" fill="#0045f7"/><polygon points="858.6,374.6 866.6,371.9 860.3,371.5 852.2,372.3" fill="#0000e2"/><polygon points="579.7,394.1 587.8,377.6 581.5,374.3 573.4,391.7" fill="#000097"/><polygon points="844.2,371.3 852.2,372.3 845.9,367.7 837.9,364.7" fill="#0000f7"/><polygon points="788.3,330.8 796.4,328.5 790.1,327.7 782,333.1" fill="#009aeb"/><polygon points="419.6,374.1 427.7,371.5 421.3,370.8 413.2,371.8" fill="#0000e7"/><polygon points="725.5,390.7 733.5,385.4 727.2,393.2 719.1,396.8" fill="#0000a7"/><polygon points="692.1,356 700.2,364.8 693.9,337.8 685.8,324" fill="#0038ff"/><polygon points="583.2,347.2 591.3,312.3 585,321 576.9,352.5" fill="#0058ff"/><polygon points="881.1,364.8 889.1,358.7 882.8,362 874.7,367.6" fill="#0013cf"/><polygon points="823.4,351.6 831.5,356.7 825.2,348 817.1,342.7" fill="#0058ff"/><polygon points="458.2,344.8 466.3,335.8 459.9,338.1 451.9,347.6" fill="#0068ff"/><polygon points="542.8,382.3 550.9,392.6 544.6,389.5 536.5,378.6" fill="#0000d7"/><polygon points="703,400.6 711.1,399 704.8,394.7 696.7,394.4" fill="#000087"/><polygon points="911.6,344.8 919.7,341.4 913.4,341.6 905.3,346.5" fill="#0061ee"/><polygon points="802.7,332.1 810.8,334.9 804.5,329 796.4,328.5" fill="#00a7ff"/><polygon points="450.1,354.9 458.2,344.8 451.9,347.6 443.8,357.3" fill="#0038ff"/><polygon points="687.5,306.8 695.6,329 689.3,303.7 681.2,275.7" fill="#08fff7"/><polygon points="495.1,334.3 503.2,341.2 496.8,334.6 488.8,330.1" fill="#006bb5"/><polygon points="442,364.3 450.1,354.9 443.8,357.3 435.7,365.7" fill="#0018ff"/><polygon points="690.4,377.5 698.4,380.3 692.1,356 684,350.2" fill="#0000d7"/><polygon points="780.2,335.7 788.3,330.8 782,333.1 773.9,341" fill="#0072bf"/><polygon points="480.7,330.2 488.8,330.1 482.4,327.1 474.4,329.6" fill="#00a7ff"/><polygon points="522.1,360.5 530.2,373.7 523.9,367.4 515.8,354.7" fill="#0028ff"/><polygon points="873,370.2 881.1,364.8 874.7,367.6 866.6,371.9" fill="#0007d0"/><polygon points="829.8,360.7 837.9,364.7 831.5,356.7 823.4,351.6" fill="#0028ff"/><polygon points="434,371.6 442,364.3 435.7,365.7 427.7,371.5" fill="#0000f7"/><polygon points="662.2,223 670.3,259.6 664,262.7 655.9,227.1" fill="#ff7800"/><polygon points="602.9,246.9 610.9,228.9 604.6,264 596.6,279.1" fill="#ffe700"/><polygon points="717.4,394.6 725.5,390.7 719.1,396.8 711.1,399" fill="#000097"/><polygon points="610.9,228.9 619,221.7 612.7,257.9 604.6,264" fill="#ff9700"/><polygon points="563.6,396.1 571.7,399.8 565.3,398.1 557.2,394.8" fill="#000071"/><polygon points="903.5,349.6 911.6,344.8 905.3,346.5 897.2,352.4" fill="#004ddf"/><polygon points="850.5,375.7 858.6,374.6 852.2,372.3 844.2,371.3" fill="#0000e7"/><polygon points="772.2,342.5 780.2,335.7 773.9,341 765.9,350.5" fill="#00438f"/><polygon points="586,397.4 594.1,383.4 587.8,377.6 579.7,394.1" fill="#000087"/><polygon points="688.6,395.1 696.7,394.4 690.4,377.5 682.3,377.3" fill="#000097"/><polygon points="578,401.3 586,397.4 579.7,394.1 571.7,399.8" fill="#000087"/><polygon points="809.1,338.4 817.1,342.7 810.8,334.9 802.7,332.1" fill="#0087ff"/><polygon points="587.8,377.6 595.9,350.7 589.5,346.4 581.5,374.3" fill="#0000d7"/><polygon points="764.1,350.5 772.2,342.5 765.9,350.5 757.8,360.5" fill="#004ddf"/><polygon points="694.9,401.9 703,400.6 696.7,394.4 688.6,395.1" fill="#000087"/><polygon points="501.4,339.1 509.5,348.1 503.2,341.2 495.1,334.3" fill="#005096"/><polygon points="836.1,368.9 844.2,371.3 837.9,364.7 829.8,360.7" fill="#0008ff"/><polygon points="864.9,374.5 873,370.2 866.6,371.9 858.6,374.6" fill="#0000d5"/><polygon points="425.9,375.8 434,371.6 427.7,371.5 419.6,374.1" fill="#0000e7"/><polygon points="549.2,384.7 557.2,394.8 550.9,392.6 542.8,382.3" fill="#0000c7"/><polygon points="794.6,331.7 802.7,332.1 796.4,328.5 788.3,330.8" fill="#00a7ff"/><polygon points="756,358.8 764.1,350.5 757.8,360.5 749.7,370" fill="#0038ff"/><polygon points="895.4,355.2 903.5,349.6 897.2,352.4 889.1,358.7" fill="#003ace"/><polygon points="472.6,334.7 480.7,330.2 474.4,329.6 466.3,335.8" fill="#0097ff"/><polygon points="528.5,365.3 536.5,378.6 530.2,373.7 522.1,360.5" fill="#0028ff"/><polygon points="681.2,275.7 689.3,303.7 682.9,281.6 674.9,249.1" fill="#62a543"/><polygon points="709.3,397.3 717.4,394.6 711.1,399 703,400.6" fill="#000089"/><polygon points="748,366.8 756,358.8 749.7,370 741.6,378.5" fill="#0018ff"/><polygon points="917.9,344.5 926,342.7 919.7,341.4 911.6,344.8" fill="#0073f5"/><polygon points="815.4,346.8 823.4,351.6 817.1,342.7 809.1,338.4" fill="#0068ff"/><polygon points="464.5,342.7 472.6,334.7 466.3,335.8 458.2,344.8" fill="#0078ff"/><polygon points="685.8,324 693.9,337.8 687.5,306.8 679.4,287.8" fill="#00c7ff"/><polygon points="487,332 495.1,334.3 488.8,330.1 480.7,330.2" fill="#0096e5"/><polygon points="887.4,361.2 895.4,355.2 889.1,358.7 881.1,364.8" fill="#002ac0"/><polygon points="682.3,377.3 690.4,377.5 684,350.2 676,349" fill="#0000e7"/><polygon points="589.5,346.4 597.6,310.4 591.3,312.3 583.2,347.2" fill="#0068ff"/><polygon points="592.4,401 600.5,390.8 594.1,383.4 586,397.4" fill="#000087"/><polygon points="739.9,373.8 748,366.8 741.6,378.5 733.5,385.4" fill="#0000f7"/><polygon points="594.1,383.4 602.2,359.6 595.9,350.7 587.8,377.6" fill="#0000c7"/><polygon points="456.5,352.7 464.5,342.7 458.2,344.8 450.1,354.9" fill="#0058ff"/><polygon points="680.5,397.1 688.6,395.1 682.3,377.3 674.2,380.1" fill="#000097"/><polygon points="668.6,230.6 676.6,266.2 670.3,259.6 662.2,223" fill="#ff9700"/><polygon points="593.1,285.3 601.1,250 594.8,273.2 586.7,303.8" fill="#68ff97"/><polygon points="448.4,362.8 456.5,352.7 450.1,354.9 442,364.3" fill="#0028ff"/><polygon points="842.4,375.3 850.5,375.7 844.2,371.3 836.1,368.9" fill="#0000f7"/><polygon points="507.7,344.1 515.8,354.7 509.5,348.1 501.4,339.1" fill="#0068df"/><polygon points="684,350.2 692.1,356 685.8,324 677.7,314.9" fill="#0058ff"/><polygon points="569.9,396.5 578,401.3 571.7,399.8 563.6,396.1" fill="#00008e"/><polygon points="856.8,377.5 864.9,374.5 858.6,374.6 850.5,375.7" fill="#0000db"/><polygon points="686.8,403.2 694.9,401.9 688.6,395.1 680.5,397.1" fill="#000087"/><polygon points="674.9,249.1 682.9,281.6 676.6,266.2 668.6,230.6" fill="#ffe700"/><polygon points="821.7,356.3 829.8,360.7 823.4,351.6 815.4,346.8" fill="#0048ff"/><polygon points="440.3,371.3 448.4,362.8 442,364.3 434,371.6" fill="#0008ff"/><polygon points="786.6,333.5 794.6,331.7 788.3,330.8 780.2,335.7" fill="#0093e0"/><polygon points="584.3,402.2 592.4,401 586,397.4 578,401.3" fill="#000087"/><polygon points="879.3,367 887.4,361.2 881.1,364.8 873,370.2" fill="#0011b8"/><polygon points="731.8,379.7 739.9,373.8 733.5,385.4 725.5,390.7" fill="#0000e7"/><polygon points="633.4,197 641.5,214.8 635.2,241.6 627.1,226.2" fill="#ff0800"/><polygon points="801,335.8 809.1,338.4 802.7,332.1 794.6,331.7" fill="#00a7ff"/><polygon points="909.9,347.8 917.9,344.5 911.6,344.8 903.5,349.6" fill="#005de5"/><polygon points="701.2,399.1 709.3,397.3 703,400.6 694.9,401.9" fill="#000081"/><polygon points="600.5,390.8 608.5,371.5 602.2,359.6 594.1,383.4" fill="#0000a7"/><polygon points="591.3,312.3 599.4,273.3 593.1,285.3 585,321" fill="#00f7ff"/><polygon points="534.8,368.9 542.8,382.3 536.5,378.6 528.5,365.3" fill="#0018ff"/><polygon points="555.5,385.8 563.6,396.1 557.2,394.8 549.2,384.7" fill="#0000d7"/><polygon points="432.2,376.9 440.3,371.3 434,371.6 425.9,375.8" fill="#0000f7"/><polygon points="647.8,197.4 655.9,227.1 649.6,242 641.5,214.8" fill="#ff0800"/><polygon points="672.5,400 680.5,397.1 674.2,380.1 666.1,385.6" fill="#000087"/><polygon points="828,365.6 836.1,368.9 829.8,360.7 821.7,356.3" fill="#0028ff"/><polygon points="478.9,334.5 487,332 480.7,330.2 472.6,334.7" fill="#00a7ff"/><polygon points="598.7,403.8 606.8,398 600.5,390.8 592.4,401" fill="#000087"/><polygon points="674.2,380.1 682.3,377.3 676,349 667.9,352.9" fill="#0000d7"/><polygon points="778.5,337.4 786.6,333.5 780.2,335.7 772.2,342.5" fill="#005e9e"/><polygon points="493.3,334.6 501.4,339.1 495.1,334.3 487,332" fill="#0079b9"/><polygon points="871.2,372.3 879.3,367 873,370.2 864.9,374.5" fill="#0006ba"/><polygon points="606.8,398 614.8,384.3 608.5,371.5 600.5,390.8" fill="#000097"/><polygon points="514,348.7 522.1,360.5 515.8,354.7 507.7,344.1" fill="#0068ff"/><polygon points="723.7,384.2 731.8,379.7 725.5,390.7 717.4,394.6" fill="#0000d7"/><polygon points="901.8,352.2 909.9,347.8 903.5,349.6 895.4,355.2" fill="#0055d0"/><polygon points="848.8,379 856.8,377.5 850.5,375.7 842.4,375.3" fill="#0000e7"/><polygon points="678.8,404.3 686.8,403.2 680.5,397.1 672.5,400" fill="#000087"/><polygon points="595.9,350.7 604,315.9 597.6,310.4 589.5,346.4" fill="#0058ff"/><polygon points="807.3,342.9 815.4,346.8 809.1,338.4 801,335.8" fill="#0087ff"/><polygon points="470.9,341.4 478.9,334.5 472.6,334.7 464.5,342.7" fill="#0087ff"/><polygon points="664.4,403.2 672.5,400 666.1,385.6 658,392.5" fill="#000087"/><polygon points="834.4,373.7 842.4,375.3 836.1,368.9 828,365.6" fill="#0008ff"/><polygon points="770.4,342.7 778.5,337.4 772.2,342.5 764.1,350.5" fill="#0066c1"/><polygon points="666.1,385.6 674.2,380.1 667.9,352.9 659.8,361.3" fill="#0000c7"/><polygon points="613.1,403.5 621.2,395.6 614.8,384.3 606.8,398" fill="#000087"/><polygon points="693.2,400 701.2,399.1 694.9,401.9 686.8,403.2" fill="#00008a"/><polygon points="576.2,395.7 584.3,402.2 578,401.3 569.9,396.5" fill="#0000a7"/><polygon points="590.6,401.7 598.7,403.8 592.4,401 584.3,402.2" fill="#000067"/><polygon points="462.8,351 470.9,341.4 464.5,342.7 456.5,352.7" fill="#0068ff"/><polygon points="792.9,335 801,335.8 794.6,331.7 786.6,333.5" fill="#00a7ff"/><polygon points="863.1,376.7 871.2,372.3 864.9,374.5 856.8,377.5" fill="#0000c3"/><polygon points="893.7,357.5 901.8,352.2 895.4,355.2 887.4,361.2" fill="#0034ba"/><polygon points="454.7,361.5 462.8,351 456.5,352.7 448.4,362.8" fill="#0038ff"/><polygon points="541.1,371.3 549.2,384.7 542.8,382.3 534.8,368.9" fill="#0018ff"/><polygon points="676,349 684,350.2 677.7,314.9 669.6,312.5" fill="#0068ff"/><polygon points="658,392.5 666.1,385.6 659.8,361.3 651.7,372.8" fill="#0000a7"/><polygon points="715.7,387.5 723.7,384.2 717.4,394.6 709.3,397.3" fill="#0000d7"/><polygon points="621.2,395.6 629.2,382 622.9,364 614.8,384.3" fill="#0000a7"/><polygon points="679.4,287.8 687.5,306.8 681.2,275.7 673.1,252.2" fill="#68ff97"/><polygon points="446.6,370.9 454.7,361.5 448.4,362.8 440.3,371.3" fill="#0018ff"/><polygon points="813.6,352 821.7,356.3 815.4,346.8 807.3,342.9" fill="#0068ff"/><polygon points="762.4,349 770.4,342.7 764.1,350.5 756,358.8" fill="#0078ff"/><polygon points="602.2,359.6 610.3,328 604,315.9 595.9,350.7" fill="#0038ff"/><polygon points="650,399.3 658,392.5 651.7,372.8 643.7,385.2" fill="#000097"/><polygon points="605,404.6 613.1,403.5 606.8,398 598.7,403.8" fill="#000087"/><polygon points="614.8,384.3 622.9,364 616.6,345 608.5,371.5" fill="#0000d7"/><polygon points="627.5,403.4 635.6,396.1 629.2,382 621.2,395.6" fill="#000087"/><polygon points="520.4,352.8 528.5,365.3 522.1,360.5 514,348.7" fill="#0068ff"/><polygon points="499.7,337.7 507.7,344.1 501.4,339.1 493.3,334.6" fill="#005b8b"/><polygon points="656.3,405.5 664.4,403.2 658,392.5 650,399.3" fill="#000087"/><polygon points="608.5,371.5 616.6,345 610.3,328 602.2,359.6" fill="#0008ff"/><polygon points="561.8,385.7 569.9,396.5 563.6,396.1 555.5,385.8" fill="#0000d7"/><polygon points="601.1,250 609.2,220.1 602.9,246.9 594.8,273.2" fill="#ffe700"/><polygon points="670.7,404.8 678.8,404.3 672.5,400 664.4,403.2" fill="#000087"/><polygon points="641.9,404.3 650,399.3 643.7,385.2 635.6,396.1" fill="#000087"/><polygon points="635.6,396.1 643.7,385.2 637.3,364.4 629.2,382" fill="#0000a7"/><polygon points="438.6,377.7 446.6,370.9 440.3,371.3 432.2,376.9" fill="#0000f7"/><polygon points="485.2,335.3 493.3,334.6 487,332 478.9,334.5" fill="#00a7ff"/><polygon points="754.3,355.4 762.4,349 756,358.8 748,366.8" fill="#0058ff"/><polygon points="885.6,363.1 893.7,357.5 887.4,361.2 879.3,367" fill="#0025a7"/><polygon points="840.7,379.4 848.8,379 842.4,375.3 834.4,373.7" fill="#0000f7"/><polygon points="619.4,405.7 627.5,403.4 621.2,395.6 613.1,403.5" fill="#000087"/><polygon points="820,362 828,365.6 821.7,356.3 813.6,352" fill="#0038ff"/><polygon points="677.7,314.9 685.8,324 679.4,287.8 671.4,275.5" fill="#00f7ff"/><polygon points="855.1,380 863.1,376.7 856.8,377.5 848.8,379" fill="#0000da"/><polygon points="643.7,385.2 651.7,372.8 645.4,345.8 637.3,364.4" fill="#0000d7"/><polygon points="685.1,399.9 693.2,400 686.8,403.2 678.8,404.3" fill="#000097"/><polygon points="633.8,406.1 641.9,404.3 635.6,396.1 627.5,403.4" fill="#000087"/><polygon points="784.8,336.1 792.9,335 786.6,333.5 778.5,337.4" fill="#0095e4"/><polygon points="746.2,361.5 754.3,355.4 748,366.8 739.9,373.8" fill="#0048ff"/><polygon points="799.2,340.2 807.3,342.9 801,335.8 792.9,335" fill="#0097ff"/><polygon points="707.6,389.4 715.7,387.5 709.3,397.3 701.2,399.1" fill="#0000c7"/><polygon points="629.2,382 637.3,364.4 631,339.6 622.9,364" fill="#0000d7"/><polygon points="625.4,191.6 633.4,197 627.1,226.2 619,221.7" fill="#e70000"/><polygon points="597.6,310.4 605.7,270.2 599.4,273.3 591.3,312.3" fill="#08fff7"/><polygon points="667.9,352.9 676,349 669.6,312.5 661.5,317.6" fill="#0058ff"/><polygon points="877.5,368.7 885.6,363.1 879.3,367 871.2,372.3" fill="#00189b"/><polygon points="648.2,405.9 656.3,405.5 650,399.3 641.9,404.3" fill="#000087"/><polygon points="826.3,371.3 834.4,373.7 828,365.6 820,362" fill="#0018ff"/><polygon points="477.2,340.8 485.2,335.3 478.9,334.5 470.9,341.4" fill="#0097ff"/><polygon points="651.7,372.8 659.8,361.3 653.5,329.3 645.4,345.8" fill="#0008ff"/><polygon points="547.4,372.4 555.5,385.8 549.2,384.7 541.1,371.3" fill="#0018ff"/><polygon points="597,399.5 605,404.6 598.7,403.8 590.6,401.7" fill="#0000a7"/><polygon points="526.7,356 534.8,368.9 528.5,365.3 520.4,352.8" fill="#0058ff"/><polygon points="659.8,361.3 667.9,352.9 661.5,317.6 653.5,329.3" fill="#0038ff"/><polygon points="662.6,403.9 670.7,404.8 664.4,403.2 656.3,405.5" fill="#00005f"/><polygon points="506,340.9 514,348.7 507.7,344.1 499.7,337.7" fill="#007cd1"/><polygon points="582.5,393.5 590.6,401.7 584.3,402.2 576.2,395.7" fill="#0000b7"/><polygon points="738.1,366.9 746.2,361.5 739.9,373.8 731.8,379.7" fill="#0028ff"/><polygon points="611.4,402.7 619.4,405.7 613.1,403.5 605,404.6" fill="#00005f"/><polygon points="469.1,349.8 477.2,340.8 470.9,341.4 462.8,351" fill="#0078ff"/><polygon points="599.4,273.3 607.4,235.1 601.1,250 593.1,285.3" fill="#b7ff48"/><polygon points="654.1,192.5 662.2,223 655.9,227.1 647.8,197.4" fill="#e70000"/><polygon points="461,360.5 469.1,349.8 462.8,351 454.7,361.5" fill="#0048ff"/><polygon points="805.5,348.4 813.6,352 807.3,342.9 799.2,340.2" fill="#0078ff"/><polygon points="869.5,373.9 877.5,368.7 871.2,372.3 863.1,376.7" fill="#000f9c"/><polygon points="453,370.5 461,360.5 454.7,361.5 446.6,370.9" fill="#0018ff"/><polygon points="776.8,338.7 784.8,336.1 778.5,337.4 770.4,342.7" fill="#00669c"/><polygon points="609.2,220.1 617.3,199.7 610.9,228.9 602.9,246.9" fill="#ff6800"/><polygon points="847,382.2 855.1,380 848.8,379 840.7,379.4" fill="#0000e7"/><polygon points="491.6,336.7 499.7,337.7 493.3,334.6 485.2,335.3" fill="#0097e6"/><polygon points="622.9,364 631,339.6 624.7,314.3 616.6,345" fill="#0028ff"/><polygon points="625.8,404 633.8,406.1 627.5,403.4 619.4,405.7" fill="#000060"/><polygon points="832.6,378.7 840.7,379.4 834.4,373.7 826.3,371.3" fill="#0000f7"/><polygon points="673.1,252.2 681.2,275.7 674.9,249.1 666.8,221.8" fill="#ffe700"/><polygon points="568.1,384.2 576.2,395.7 569.9,396.5 561.8,385.7" fill="#0000e7"/><polygon points="444.9,378.3 453,370.5 446.6,370.9 438.6,377.7" fill="#0000f7"/><polygon points="699.5,390.1 707.6,389.4 701.2,399.1 693.2,400" fill="#0000d7"/><polygon points="617.3,199.7 625.4,191.6 619,221.7 610.9,228.9" fill="#ff0800"/><polygon points="677,398.7 685.1,399.9 678.8,404.3 670.7,404.8" fill="#0000a7"/><polygon points="730,371.3 738.1,366.9 731.8,379.7 723.7,384.2" fill="#0028ff"/><polygon points="637.3,364.4 645.4,345.8 639.1,314.8 631,339.6" fill="#0028ff"/><polygon points="640.1,403.6 648.2,405.9 641.9,404.3 633.8,406.1" fill="#000064"/><polygon points="811.9,358.3 820,362 813.6,352 805.5,348.4" fill="#0058ff"/><polygon points="791.1,339 799.2,340.2 792.9,335 784.8,336.1" fill="#00a7ff"/><polygon points="604,315.9 612,276.8 605.7,270.2 597.6,310.4" fill="#00f7ff"/><polygon points="768.7,342.5 776.8,338.7 770.4,342.7 762.4,349" fill="#0076c7"/><polygon points="861.4,378.3 869.5,373.9 863.1,376.7 855.1,380" fill="#0005ac"/><polygon points="616.6,345 624.7,314.3 618.4,292.3 610.3,328" fill="#0087ff"/><polygon points="512.3,344 520.4,352.8 514,348.7 506,340.9" fill="#0097ff"/><polygon points="669.6,312.5 677.7,314.9 671.4,275.5 663.3,272" fill="#08fff7"/><polygon points="533,358.3 541.1,371.3 534.8,368.9 526.7,356" fill="#0058ff"/><polygon points="654.5,401.2 662.6,403.9 656.3,405.5 648.2,405.9" fill="#0000a7"/><polygon points="818.2,368.5 826.3,371.3 820,362 811.9,358.3" fill="#0028ff"/><polygon points="639.8,178.1 647.8,197.4 641.5,214.8 633.4,197" fill="#a70000"/><polygon points="483.5,341 491.6,336.7 485.2,335.3 477.2,340.8" fill="#0097ff"/><polygon points="610.3,328 618.4,292.3 612,276.8 604,315.9" fill="#00c7ff"/><polygon points="553.8,372.3 561.8,385.7 555.5,385.8 547.4,372.4" fill="#0028ff"/><polygon points="722,374.5 730,371.3 723.7,384.2 715.7,387.5" fill="#0018ff"/><polygon points="838.9,383.3 847,382.2 840.7,379.4 832.6,378.7" fill="#0000e7"/><polygon points="660.5,201 668.6,230.6 662.2,223 654.1,192.5" fill="#ff0800"/><polygon points="666.8,221.8 674.9,249.1 668.6,230.6 660.5,201" fill="#f96500"/><polygon points="760.6,346.8 768.7,342.5 762.4,349 754.3,355.4" fill="#0087ff"/><polygon points="497.9,338.5 506,340.9 499.7,337.7 491.6,336.7" fill="#007ebf"/><polygon points="603.3,395.1 611.4,402.7 605,404.6 597,399.5" fill="#0000c7"/><polygon points="797.5,345.7 805.5,348.4 799.2,340.2 791.1,339" fill="#0087ff"/><polygon points="475.4,349.3 483.5,341 477.2,340.8 469.1,349.8" fill="#0078ff"/><polygon points="691.4,389.6 699.5,390.1 693.2,400 685.1,399.9" fill="#0000d7"/><polygon points="645.4,345.8 653.5,329.3 647.1,293.2 639.1,314.8" fill="#0087ff"/><polygon points="671.4,275.5 679.4,287.8 673.1,252.2 665.1,236.8" fill="#b7ff48"/><polygon points="588.9,389.6 597,399.5 590.6,401.7 582.5,393.5" fill="#0000d7"/><polygon points="617.7,397.8 625.8,404 619.4,405.7 611.4,402.7" fill="#0000b7"/><polygon points="853.3,381.9 861.4,378.3 855.1,380 847,382.2" fill="#0000bf"/><polygon points="824.5,377.3 832.6,378.7 826.3,371.3 818.2,368.5" fill="#0008ff"/><polygon points="467.3,359.8 475.4,349.3 469.1,349.8 461,360.5" fill="#0058ff"/><polygon points="459.3,370.4 467.3,359.8 461,360.5 453,370.5" fill="#0028ff"/><polygon points="783.1,339.2 791.1,339 784.8,336.1 776.8,338.7" fill="#00a7ff"/><polygon points="669,396 677,398.7 670.7,404.8 662.6,403.9" fill="#0000b7"/><polygon points="451.2,378.9 459.3,370.4 453,370.5 444.9,378.3" fill="#0008ff"/><polygon points="632.1,398.3 640.1,403.6 633.8,406.1 625.8,404" fill="#0000b7"/><polygon points="661.5,317.6 669.6,312.5 663.3,272 655.2,278.1" fill="#00f7ff"/><polygon points="631,339.6 639.1,314.8 632.8,283.7 624.7,314.3" fill="#0097ff"/><polygon points="752.5,351.4 760.6,346.8 754.3,355.4 746.2,361.5" fill="#0078ff"/><polygon points="574.5,381.5 582.5,393.5 576.2,395.7 568.1,384.2" fill="#0000f7"/><polygon points="518.6,346.6 526.7,356 520.4,352.8 512.3,344" fill="#0097ff"/><polygon points="803.8,355.1 811.9,358.3 805.5,348.4 797.5,345.7" fill="#0068ff"/><polygon points="713.9,376.4 722,374.5 715.7,387.5 707.6,389.4" fill="#0018ff"/><polygon points="653.5,329.3 661.5,317.6 655.2,278.1 647.1,293.2" fill="#00c7ff"/><polygon points="539.4,359.5 547.4,372.4 541.1,371.3 533,358.3" fill="#0058ff"/><polygon points="646.5,396.3 654.5,401.2 648.2,405.9 640.1,403.6" fill="#0000c7"/><polygon points="830.8,383.6 838.9,383.3 832.6,378.7 824.5,377.3" fill="#0000f7"/><polygon points="605.7,270.2 613.8,231 607.4,235.1 599.4,273.3" fill="#c7ff38"/><polygon points="607.4,235.1 615.5,202.8 609.2,220.1 601.1,250" fill="#ff9700"/><polygon points="489.8,341.7 497.9,338.5 491.6,336.7 483.5,341" fill="#00a7ff"/><polygon points="845.2,384.7 853.3,381.9 847,382.2 838.9,383.3" fill="#0000de"/><polygon points="810.1,365.6 818.2,368.5 811.9,358.3 803.8,355.1" fill="#0038ff"/><polygon points="744.5,355.6 752.5,351.4 746.2,361.5 738.1,366.9" fill="#0068ff"/><polygon points="775,340.6 783.1,339.2 776.8,338.7 768.7,342.5" fill="#0081c4"/><polygon points="504.2,340.5 512.3,344 506,340.9 497.9,338.5" fill="#005b8a"/><polygon points="560.1,371 568.1,384.2 561.8,385.7 553.8,372.3" fill="#0028ff"/><polygon points="683.4,387.7 691.4,389.6 685.1,399.9 677,398.7" fill="#0000e7"/><polygon points="789.4,344.1 797.5,345.7 791.1,339 783.1,339.2" fill="#0097ff"/><polygon points="816.5,375.5 824.5,377.3 818.2,368.5 810.1,365.6" fill="#0018ff"/><polygon points="481.8,349.4 489.8,341.7 483.5,341 475.4,349.3" fill="#0087ff"/><polygon points="705.8,377.2 713.9,376.4 707.6,389.4 699.5,390.1" fill="#0018ff"/><polygon points="660.9,391.8 669,396 662.6,403.9 654.5,401.2" fill="#0000d7"/><polygon points="473.7,359.7 481.8,349.4 475.4,349.3 467.3,359.8" fill="#0058ff"/><polygon points="465.6,370.5 473.7,359.7 467.3,359.8 459.3,370.4" fill="#0028ff"/><polygon points="624.7,314.3 632.8,283.7 626.4,257.1 618.4,292.3" fill="#08fff7"/><polygon points="736.4,359.2 744.5,355.6 738.1,366.9 730,371.3" fill="#0068ff"/><polygon points="525,348.6 533,358.3 526.7,356 518.6,346.6" fill="#0087ff"/><polygon points="457.5,379.6 465.6,370.5 459.3,370.4 451.2,378.9" fill="#0008ff"/><polygon points="609.6,388.6 617.7,397.8 611.4,402.7 603.3,395.1" fill="#0000e7"/><polygon points="766.9,342.8 775,340.6 768.7,342.5 760.6,346.8" fill="#006397"/><polygon points="837.2,386.6 845.2,384.7 838.9,383.3 830.8,383.6" fill="#0000e7"/><polygon points="631.7,172.2 639.8,178.1 633.4,197 625.4,191.6" fill="#870000"/><polygon points="595.2,384.3 603.3,395.1 597,399.5 588.9,389.6" fill="#0000f7"/><polygon points="795.7,352.6 803.8,355.1 797.5,345.7 789.4,344.1" fill="#0078ff"/><polygon points="639.1,314.8 647.1,293.2 640.8,257.5 632.8,283.7" fill="#08fff7"/><polygon points="822.8,383.2 830.8,383.6 824.5,377.3 816.5,375.5" fill="#0000f7"/><polygon points="624,390.3 632.1,398.3 625.8,404 617.7,397.8" fill="#0000e7"/><polygon points="663.3,272 671.4,275.5 665.1,236.8 657,232.3" fill="#c7ff38"/><polygon points="665.1,236.8 673.1,252.2 666.8,221.8 658.7,204.1" fill="#ff9700"/><polygon points="545.7,359.8 553.8,372.3 547.4,372.4 539.4,359.5" fill="#0068ff"/><polygon points="612,276.8 620.1,238.6 613.8,231 605.7,270.2" fill="#b7ff48"/><polygon points="646.1,172.7 654.1,192.5 647.8,197.4 639.8,178.1" fill="#870000"/><polygon points="496.2,342.8 504.2,340.5 497.9,338.5 489.8,341.7" fill="#00a7ff"/><polygon points="580.8,377.5 588.9,389.6 582.5,393.5 574.5,381.5" fill="#0018ff"/><polygon points="510.6,342.5 518.6,346.6 512.3,344 504.2,340.5" fill="#006ca5"/><polygon points="781.3,343.6 789.4,344.1 783.1,339.2 775,340.6" fill="#00a7ff"/><polygon points="618.4,292.3 626.4,257.1 620.1,238.6 612,276.8" fill="#68ff97"/><polygon points="802,363 810.1,365.6 803.8,355.1 795.7,352.6" fill="#0058ff"/><polygon points="638.4,389.5 646.5,396.3 640.1,403.6 632.1,398.3" fill="#0000e7"/><polygon points="728.3,362 736.4,359.2 730,371.3 722,374.5" fill="#0058ff"/><polygon points="615.5,202.8 623.6,180.8 617.3,199.7 609.2,220.1" fill="#cd0600"/><polygon points="675.3,384.5 683.4,387.7 677,398.7 669,396" fill="#0000f7"/><polygon points="697.8,376.6 705.8,377.2 699.5,390.1 691.4,389.6" fill="#0028ff"/><polygon points="758.8,345.4 766.9,342.8 760.6,346.8 752.5,351.4" fill="#0098e8"/><polygon points="808.4,373.6 816.5,375.5 810.1,365.6 802,363" fill="#0028ff"/><polygon points="488.1,350 496.2,342.8 489.8,341.7 481.8,349.4" fill="#0087ff"/><polygon points="566.4,368.8 574.5,381.5 568.1,384.2 560.1,371" fill="#0048ff"/><polygon points="623.6,180.8 631.7,172.2 625.4,191.6 617.3,199.7" fill="#a70000"/><polygon points="829.1,387.8 837.2,386.6 830.8,383.6 822.8,383.2" fill="#0000e7"/><polygon points="647.1,293.2 655.2,278.1 648.9,239.5 640.8,257.5" fill="#68ff97"/><polygon points="531.3,350.1 539.4,359.5 533,358.3 525,348.6" fill="#0097ff"/><polygon points="480,360.2 488.1,350 481.8,349.4 473.7,359.7" fill="#0058ff"/><polygon points="655.2,278.1 663.3,272 657,232.3 648.9,239.5" fill="#b7ff48"/><polygon points="471.9,371.1 480,360.2 473.7,359.7 465.6,370.5" fill="#0038ff"/><polygon points="652.8,386 660.9,391.8 654.5,401.2 646.5,396.3" fill="#0000f7"/><polygon points="463.9,380.5 471.9,371.1 465.6,370.5 457.5,379.6" fill="#0008ff"/><polygon points="787.7,350.8 795.7,352.6 789.4,344.1 781.3,343.6" fill="#0087ff"/><polygon points="814.7,382.5 822.8,383.2 816.5,375.5 808.4,373.6" fill="#0008ff"/><polygon points="720.2,363.8 728.3,362 722,374.5 713.9,376.4" fill="#0058ff"/><polygon points="658.7,204.1 666.8,221.8 660.5,201 652.4,181.7" fill="#ff0800"/><polygon points="773.2,343.9 781.3,343.6 775,340.6 766.9,342.8" fill="#00a7ff"/><polygon points="750.8,348.2 758.8,345.4 752.5,351.4 744.5,355.6" fill="#0097ff"/><polygon points="613.8,231 621.9,197.8 615.5,202.8 607.4,235.1" fill="#ff7800"/><polygon points="652.4,181.7 660.5,201 654.1,192.5 646.1,172.7" fill="#a70000"/><polygon points="502.5,344.3 510.6,342.5 504.2,340.5 496.2,342.8" fill="#00a7ff"/><polygon points="516.9,344.3 525,348.6 518.6,346.6 510.6,342.5" fill="#0082c6"/><polygon points="552,359.3 560.1,371 553.8,372.3 545.7,359.8" fill="#0068ff"/><polygon points="632.8,283.7 640.8,257.5 634.5,227.1 626.4,257.1" fill="#97ff68"/><polygon points="794,360.9 802,363 795.7,352.6 787.7,350.8" fill="#0068ff"/><polygon points="689.7,374.9 697.8,376.6 691.4,389.6 683.4,387.7" fill="#0028ff"/><polygon points="601.5,377.8 609.6,388.6 603.3,395.1 595.2,384.3" fill="#0028ff"/><polygon points="615.9,380.8 624,390.3 617.7,397.8 609.6,388.6" fill="#0018ff"/><polygon points="821,388.5 829.1,387.8 822.8,383.2 814.7,382.5" fill="#0000f7"/><polygon points="667.2,380.1 675.3,384.5 669,396 660.9,391.8" fill="#0018ff"/><polygon points="800.3,371.8 808.4,373.6 802,363 794,360.9" fill="#0038ff"/><polygon points="742.7,350.8 750.8,348.2 744.5,355.6 736.4,359.2" fill="#0097ff"/><polygon points="494.4,351.1 502.5,344.3 496.2,342.8 488.1,350" fill="#0087ff"/><polygon points="587.1,372.7 595.2,384.3 588.9,389.6 580.8,377.5" fill="#0038ff"/><polygon points="630.3,381.2 638.4,389.5 632.1,398.3 624,390.3" fill="#0018ff"/><polygon points="712.1,364.7 720.2,363.8 713.9,376.4 705.8,377.2" fill="#0058ff"/><polygon points="657,232.3 665.1,236.8 658.7,204.1 650.6,198.7" fill="#ff7800"/><polygon points="765.2,344.9 773.2,343.9 766.9,342.8 758.8,345.4" fill="#008cd6"/><polygon points="537.6,351 545.7,359.8 539.4,359.5 531.3,350.1" fill="#0097ff"/><polygon points="779.6,349.8 787.7,350.8 781.3,343.6 773.2,343.9" fill="#0097ff"/><polygon points="486.3,361.1 494.4,351.1 488.1,350 480,360.2" fill="#0068ff"/><polygon points="478.3,372.1 486.3,361.1 480,360.2 471.9,371.1" fill="#0038ff"/><polygon points="470.2,381.8 478.3,372.1 471.9,371.1 463.9,380.5" fill="#0008ff"/><polygon points="806.6,381.7 814.7,382.5 808.4,373.6 800.3,371.8" fill="#0018ff"/><polygon points="572.7,365.7 580.8,377.5 574.5,381.5 566.4,368.8" fill="#0058ff"/><polygon points="620.1,238.6 628.2,206.3 621.9,197.8 613.8,231" fill="#ff9700"/><polygon points="626.4,257.1 634.5,227.1 628.2,206.3 620.1,238.6" fill="#ffe700"/><polygon points="508.8,345.9 516.9,344.3 510.6,342.5 502.5,344.3" fill="#00a7ff"/><polygon points="523.2,346 531.3,350.1 525,348.6 516.9,344.3" fill="#008cd6"/><polygon points="644.7,379.1 652.8,386 646.5,396.3 638.4,389.5" fill="#0028ff"/><polygon points="734.6,353 742.7,350.8 736.4,359.2 728.3,362" fill="#0097ff"/><polygon points="785.9,359.3 794,360.9 787.7,350.8 779.6,349.8" fill="#0078ff"/><polygon points="640.8,257.5 648.9,239.5 642.6,206.7 634.5,227.1" fill="#ffe700"/><polygon points="621.9,197.8 629.9,175.3 623.6,180.8 615.5,202.8" fill="#e70000"/><polygon points="813,388.8 821,388.5 814.7,382.5 806.6,381.7" fill="#0000f7"/><polygon points="558.3,358.2 566.4,368.8 560.1,371 552,359.3" fill="#0078ff"/><polygon points="681.6,372.2 689.7,374.9 683.4,387.7 675.3,384.5" fill="#0048ff"/><polygon points="757.1,346.3 765.2,344.9 758.8,345.4 750.8,348.2" fill="#006194"/><polygon points="648.9,239.5 657,232.3 650.6,198.7 642.6,206.7" fill="#ff9700"/><polygon points="704.1,364.6 712.1,364.7 705.8,377.2 697.8,376.6" fill="#0068ff"/><polygon points="792.2,370.3 800.3,371.8 794,360.9 785.9,359.3" fill="#0048ff"/><polygon points="500.7,352.6 508.8,345.9 502.5,344.3 494.4,351.1" fill="#0087ff"/><polygon points="771.5,349.6 779.6,349.8 773.2,343.9 765.2,344.9" fill="#0097ff"/><polygon points="659.1,374.8 667.2,380.1 660.9,391.8 652.8,386" fill="#0038ff"/><polygon points="492.6,362.6 500.7,352.6 494.4,351.1 486.3,361.1" fill="#0068ff"/><polygon points="650.6,198.7 658.7,204.1 652.4,181.7 644.3,175.8" fill="#e70000"/><polygon points="484.6,373.6 492.6,362.6 486.3,361.1 478.3,372.1" fill="#0038ff"/><polygon points="798.5,380.9 806.6,381.7 800.3,371.8 792.2,370.3" fill="#0018ff"/><polygon points="543.9,351.5 552,359.3 545.7,359.8 537.6,351" fill="#0097ff"/><polygon points="476.5,383.4 484.6,373.6 478.3,372.1 470.2,381.8" fill="#0008ff"/><polygon points="726.5,354.7 734.6,353 728.3,362 720.2,363.8" fill="#0087ff"/><polygon points="515.1,347.8 523.2,346 516.9,344.3 508.8,345.9" fill="#00a7ff"/><polygon points="607.9,371 615.9,380.8 609.6,388.6 601.5,377.8" fill="#0048ff"/><polygon points="529.5,347.6 537.6,351 531.3,350.1 523.2,346" fill="#008dd6"/><polygon points="749,347.8 757.1,346.3 750.8,348.2 742.7,350.8" fill="#0074b0"/><polygon points="593.4,367.4 601.5,377.8 595.2,384.3 587.1,372.7" fill="#0058ff"/><polygon points="777.8,358.3 785.9,359.3 779.6,349.8 771.5,349.6" fill="#0078ff"/><polygon points="622.2,372.5 630.3,381.2 624,390.3 615.9,380.8" fill="#0048ff"/><polygon points="804.9,389 813,388.8 806.6,381.7 798.5,380.9" fill="#0000f7"/><polygon points="634.5,227.1 642.6,206.7 636.2,184.3 628.2,206.3" fill="#ff6800"/><polygon points="628.2,206.3 636.2,184.3 629.9,175.3 621.9,197.8" fill="#ff0800"/><polygon points="579.1,362.4 587.1,372.7 580.8,377.5 572.7,365.7" fill="#0078ff"/><polygon points="763.4,349.8 771.5,349.6 765.2,344.9 757.1,346.3" fill="#00a7ff"/><polygon points="696,363.6 704.1,364.6 697.8,376.6 689.7,374.9" fill="#0068ff"/><polygon points="784.1,369.3 792.2,370.3 785.9,359.3 777.8,358.3" fill="#0058ff"/><polygon points="673.5,368.7 681.6,372.2 675.3,384.5 667.2,380.1" fill="#0058ff"/><polygon points="642.6,206.7 650.6,198.7 644.3,175.8 636.2,184.3" fill="#ff0800"/><polygon points="636.6,371.8 644.7,379.1 638.4,389.5 630.3,381.2" fill="#0048ff"/><polygon points="507.1,354.6 515.1,347.8 508.8,345.9 500.7,352.6" fill="#0087ff"/><polygon points="718.5,355.7 726.5,354.7 720.2,363.8 712.1,364.7" fill="#0097ff"/><polygon points="564.6,356.7 572.7,365.7 566.4,368.8 558.3,358.2" fill="#0087ff"/><polygon points="790.5,380.3 798.5,380.9 792.2,370.3 784.1,369.3" fill="#0028ff"/><polygon points="499,364.7 507.1,354.6 500.7,352.6 492.6,362.6" fill="#0068ff"/><polygon points="490.9,375.7 499,364.7 492.6,362.6 484.6,373.6" fill="#0038ff"/><polygon points="741,349.4 749,347.8 742.7,350.8 734.6,353" fill="#0091dc"/><polygon points="482.8,385.3 490.9,375.7 484.6,373.6 476.5,383.4" fill="#0008ff"/><polygon points="550.2,351.8 558.3,358.2 552,359.3 543.9,351.5" fill="#00a7ff"/><polygon points="521.5,349.9 529.5,347.6 523.2,346 515.1,347.8" fill="#00a7ff"/><polygon points="769.8,358 777.8,358.3 771.5,349.6 763.4,349.8" fill="#0087ff"/><polygon points="651.1,369.1 659.1,374.8 652.8,386 644.7,379.1" fill="#0058ff"/><polygon points="796.8,389.2 804.9,389 798.5,380.9 790.5,380.3" fill="#0008ff"/><polygon points="535.9,349.1 543.9,351.5 537.6,351 529.5,347.6" fill="#0080c3"/><polygon points="755.4,350.6 763.4,349.8 757.1,346.3 749,347.8" fill="#00a7ff"/><polygon points="776.1,368.8 784.1,369.3 777.8,358.3 769.8,358" fill="#0058ff"/><polygon points="687.9,362 696,363.6 689.7,374.9 681.6,372.2" fill="#0078ff"/><polygon points="710.4,356.2 718.5,355.7 712.1,364.7 704.1,364.6" fill="#0097ff"/><polygon points="513.4,357 521.5,349.9 515.1,347.8 507.1,354.6" fill="#0087ff"/><polygon points="732.9,350.8 741,349.4 734.6,353 726.5,354.7" fill="#00a2f6"/><polygon points="782.4,380 790.5,380.3 784.1,369.3 776.1,368.8" fill="#0028ff"/><polygon points="505.3,367.2 513.4,357 507.1,354.6 499,364.7" fill="#0058ff"/><polygon points="665.4,365 673.5,368.7 667.2,380.1 659.1,374.8" fill="#0078ff"/><polygon points="599.8,362.5 607.9,371 601.5,377.8 593.4,367.4" fill="#0078ff"/><polygon points="497.2,378.1 505.3,367.2 499,364.7 490.9,375.7" fill="#0038ff"/><polygon points="489.1,387.6 497.2,378.1 490.9,375.7 482.8,385.3" fill="#0008ff"/><polygon points="614.2,364.6 622.2,372.5 615.9,380.8 607.9,371" fill="#0078ff"/><polygon points="585.4,359.2 593.4,367.4 587.1,372.7 579.1,362.4" fill="#0087ff"/><polygon points="761.7,358.1 769.8,358 763.4,349.8 755.4,350.6" fill="#0087ff"/><polygon points="571,355.5 579.1,362.4 572.7,365.7 564.6,356.7" fill="#0097ff"/><polygon points="747.3,351.6 755.4,350.6 749,347.8 741,349.4" fill="#00a7ff"/><polygon points="788.7,389.5 796.8,389.2 790.5,380.3 782.4,380" fill="#0008ff"/><polygon points="527.8,352.2 535.9,349.1 529.5,347.6 521.5,349.9" fill="#00a7ff"/><polygon points="628.6,365 636.6,371.8 630.3,381.2 622.2,372.5" fill="#0078ff"/><polygon points="556.6,352.2 564.6,356.7 558.3,358.2 550.2,351.8" fill="#00a7ff"/><polygon points="542.2,350.8 550.2,351.8 543.9,351.5 535.9,349.1" fill="#006092"/><polygon points="768,368.8 776.1,368.8 769.8,358 761.7,358.1" fill="#0058ff"/><polygon points="724.8,352 732.9,350.8 726.5,354.7 718.5,355.7" fill="#00a7ff"/><polygon points="702.3,356.2 710.4,356.2 704.1,364.6 696,363.6" fill="#0097ff"/><polygon points="643,363.8 651.1,369.1 644.7,379.1 636.6,371.8" fill="#0078ff"/><polygon points="519.7,359.9 527.8,352.2 521.5,349.9 513.4,357" fill="#0087ff"/><polygon points="679.9,360.2 687.9,362 681.6,372.2 673.5,368.7" fill="#0087ff"/><polygon points="774.3,380.1 782.4,380 776.1,368.8 768,368.8" fill="#0038ff"/><polygon points="511.6,370.3 519.7,359.9 513.4,357 505.3,367.2" fill="#0058ff"/><polygon points="503.6,381.1 511.6,370.3 505.3,367.2 497.2,378.1" fill="#0028ff"/><polygon points="495.5,390.1 503.6,381.1 497.2,378.1 489.1,387.6" fill="#0008ff"/><polygon points="753.6,358.8 761.7,358.1 755.4,350.6 747.3,351.6" fill="#0087ff"/><polygon points="739.2,352.8 747.3,351.6 741,349.4 732.9,350.8" fill="#00a7ff"/><polygon points="780.6,390 788.7,389.5 782.4,380 774.3,380.1" fill="#0008ff"/><polygon points="657.4,361.4 665.4,365 659.1,374.8 651.1,369.1" fill="#0087ff"/><polygon points="534.1,355.1 542.2,350.8 535.9,349.1 527.8,352.2" fill="#0097ff"/><polygon points="716.7,353.1 724.8,352 718.5,355.7 710.4,356.2" fill="#00a5fb"/><polygon points="759.9,369.3 768,368.8 761.7,358.1 753.6,358.8" fill="#0068ff"/><polygon points="548.5,352.9 556.6,352.2 550.2,351.8 542.2,350.8" fill="#007dbe"/><polygon points="591.7,357 599.8,362.5 593.4,367.4 585.4,359.2" fill="#0097ff"/><polygon points="577.3,354.8 585.4,359.2 579.1,362.4 571,355.5" fill="#00a7ff"/><polygon points="694.2,356.1 702.3,356.2 696,363.6 687.9,362" fill="#00a7ff"/><polygon points="562.9,353.1 571,355.5 564.6,356.7 556.6,352.2" fill="#00a7ff"/><polygon points="606.1,358.8 614.2,364.6 607.9,371 599.8,362.5" fill="#0097ff"/><polygon points="526,363.4 534.1,355.1 527.8,352.2 519.7,359.9" fill="#0078ff"/><polygon points="766.2,380.7 774.3,380.1 768,368.8 759.9,369.3" fill="#0038ff"/><polygon points="620.5,359.8 628.6,365 622.2,372.5 614.2,364.6" fill="#0097ff"/><polygon points="517.9,373.9 526,363.4 519.7,359.9 511.6,370.3" fill="#0058ff"/><polygon points="731.1,354.2 739.2,352.8 732.9,350.8 724.8,352" fill="#00a7ff"/><polygon points="745.5,359.9 753.6,358.8 747.3,351.6 739.2,352.8" fill="#0087ff"/><polygon points="509.9,384.5 517.9,373.9 511.6,370.3 503.6,381.1" fill="#0028ff"/><polygon points="671.8,358.5 679.9,360.2 673.5,368.7 665.4,365" fill="#0097ff"/><polygon points="501.8,393 509.9,384.5 503.6,381.1 495.5,390.1" fill="#0008ff"/><polygon points="772.6,390.8 780.6,390 774.3,380.1 766.2,380.7" fill="#0008ff"/><polygon points="634.9,359.7 643,363.8 636.6,371.8 628.6,365" fill="#0097ff"/><polygon points="540.4,358.4 548.5,352.9 542.2,350.8 534.1,355.1" fill="#0097ff"/><polygon points="708.6,354.3 716.7,353.1 710.4,356.2 702.3,356.2" fill="#0095e3"/><polygon points="751.9,370.4 759.9,369.3 753.6,358.8 745.5,359.9" fill="#0068ff"/><polygon points="649.3,358.7 657.4,361.4 651.1,369.1 643,363.8" fill="#0097ff"/><polygon points="758.2,381.8 766.2,380.7 759.9,369.3 751.9,370.4" fill="#0038ff"/><polygon points="686.2,356.1 694.2,356.1 687.9,362 679.9,360.2" fill="#00a7ff"/><polygon points="532.4,367.5 540.4,358.4 534.1,355.1 526,363.4" fill="#0078ff"/><polygon points="554.8,355.7 562.9,353.1 556.6,352.2 548.5,352.9" fill="#00a7ff"/><polygon points="723.1,355.9 731.1,354.2 724.8,352 716.7,353.1" fill="#00a7ff"/><polygon points="737.4,361.5 745.5,359.9 739.2,352.8 731.1,354.2" fill="#0087ff"/><polygon points="524.3,378.1 532.4,367.5 526,363.4 517.9,373.9" fill="#0048ff"/><polygon points="516.2,388.2 524.3,378.1 517.9,373.9 509.9,384.5" fill="#0018ff"/><polygon points="569.2,354.9 577.3,354.8 571,355.5 562.9,353.1" fill="#006193"/><polygon points="764.5,392 772.6,390.8 766.2,380.7 758.2,381.8" fill="#0008ff"/><polygon points="508.1,395.9 516.2,388.2 509.9,384.5 501.8,393" fill="#0000f7"/><polygon points="583.6,355.3 591.7,357 585.4,359.2 577.3,354.8" fill="#00a7ff"/><polygon points="598,356.2 606.1,358.8 599.8,362.5 591.7,357" fill="#00a7ff"/><polygon points="663.7,357.4 671.8,358.5 665.4,365 657.4,361.4" fill="#00a7ff"/><polygon points="743.8,372 751.9,370.4 745.5,359.9 737.4,361.5" fill="#0068ff"/><polygon points="700.6,355.5 708.6,354.3 702.3,356.2 694.2,356.1" fill="#0072ae"/><polygon points="612.4,357 620.5,359.8 614.2,364.6 606.1,358.8" fill="#00a7ff"/><polygon points="546.8,362.5 554.8,355.7 548.5,352.9 540.4,358.4" fill="#0087ff"/><polygon points="750.1,383.4 758.2,381.8 751.9,370.4 743.8,372" fill="#0038ff"/><polygon points="729.4,363.5 737.4,361.5 731.1,354.2 723.1,355.9" fill="#0087ff"/><polygon points="626.8,357.5 634.9,359.7 628.6,365 620.5,359.8" fill="#00a7ff"/><polygon points="715,357.8 723.1,355.9 716.7,353.1 708.6,354.3" fill="#00a7ff"/><polygon points="538.7,372.1 546.8,362.5 540.4,358.4 532.4,367.5" fill="#0068ff"/><polygon points="530.6,382.6 538.7,372.1 532.4,367.5 524.3,378.1" fill="#0038ff"/><polygon points="678.1,356.6 686.2,356.1 679.9,360.2 671.8,358.5" fill="#00a7ff"/><polygon points="522.5,392.1 530.6,382.6 524.3,378.1 516.2,388.2" fill="#0018ff"/><polygon points="561.1,359.4 569.2,354.9 562.9,353.1 554.8,355.7" fill="#0097ff"/><polygon points="756.4,393.5 764.5,392 758.2,381.8 750.1,383.4" fill="#0008ff"/><polygon points="641.2,357.5 649.3,358.7 643,363.8 634.9,359.7" fill="#00a7ff"/><polygon points="514.5,398.8 522.5,392.1 516.2,388.2 508.1,395.9" fill="#0000f7"/><polygon points="735.7,374.1 743.8,372 737.4,361.5 729.4,363.5" fill="#0058ff"/><polygon points="575.6,357.8 583.6,355.3 577.3,354.8 569.2,354.9" fill="#00a5fb"/><polygon points="692.5,357.2 700.6,355.5 694.2,356.1 686.2,356.1" fill="#0076b4"/><polygon points="553.1,367.4 561.1,359.4 554.8,355.7 546.8,362.5" fill="#0078ff"/><polygon points="589.9,357.3 598,356.2 591.7,357 583.6,355.3" fill="#006396"/><polygon points="742,385.5 750.1,383.4 743.8,372 735.7,374.1" fill="#0038ff"/><polygon points="655.6,357.4 663.7,357.4 657.4,361.4 649.3,358.7" fill="#00a7ff"/><polygon points="721.3,366 729.4,363.5 723.1,355.9 715,357.8" fill="#0087ff"/><polygon points="706.9,360.2 715,357.8 708.6,354.3 700.6,355.5" fill="#0097ff"/><polygon points="545,377.4 553.1,367.4 546.8,362.5 538.7,372.1" fill="#0058ff"/><polygon points="604.4,357.4 612.4,357 606.1,358.8 598,356.2" fill="#007cbd"/><polygon points="536.9,387.5 545,377.4 538.7,372.1 530.6,382.6" fill="#0028ff"/><polygon points="748.4,395.3 756.4,393.5 750.1,383.4 742,385.5" fill="#0008ff"/><polygon points="528.9,396 536.9,387.5 530.6,382.6 522.5,392.1" fill="#0008ff"/><polygon points="670,357.9 678.1,356.6 671.8,358.5 663.7,357.4" fill="#006ba3"/><polygon points="567.5,364 575.6,357.8 569.2,354.9 561.1,359.4" fill="#0087ff"/><polygon points="618.8,357.8 626.8,357.5 620.5,359.8 612.4,357" fill="#008cd5"/><polygon points="727.6,376.8 735.7,374.1 729.4,363.5 721.3,366" fill="#0058ff"/><polygon points="520.8,401.6 528.9,396 522.5,392.1 514.5,398.8" fill="#0000f7"/><polygon points="684.4,359.6 692.5,357.2 686.2,356.1 678.1,356.6" fill="#00a7ff"/><polygon points="633.1,358.3 641.2,357.5 634.9,359.7 626.8,357.5" fill="#007ec1"/><polygon points="733.9,388 742,385.5 735.7,374.1 727.6,376.8" fill="#0028ff"/><polygon points="559.4,373 567.5,364 561.1,359.4 553.1,367.4" fill="#0068ff"/><polygon points="713.2,369 721.3,366 715,357.8 706.9,360.2" fill="#0078ff"/><polygon points="581.9,362.1 589.9,357.3 583.6,355.3 575.6,357.8" fill="#0097ff"/><polygon points="698.8,363.2 706.9,360.2 700.6,355.5 692.5,357.2" fill="#0097ff"/><polygon points="551.3,383.1 559.4,373 553.1,367.4 545,377.4" fill="#0038ff"/><polygon points="543.2,392.5 551.3,383.1 545,377.4 536.9,387.5" fill="#0018ff"/><polygon points="647.6,359 655.6,357.4 649.3,358.7 641.2,357.5" fill="#005e8f"/><polygon points="740.3,397.5 748.4,395.3 742,385.5 733.9,388" fill="#0008ff"/><polygon points="596.3,361.2 604.4,357.4 598,356.2 589.9,357.3" fill="#00a7ff"/><polygon points="535.2,399.8 543.2,392.5 536.9,387.5 528.9,396" fill="#0000f7"/><polygon points="719.6,380 727.6,376.8 721.3,366 713.2,369" fill="#0058ff"/><polygon points="573.8,369.8 581.9,362.1 575.6,357.8 567.5,364" fill="#0078ff"/><polygon points="661.9,360.4 670,357.9 663.7,357.4 655.6,357.4" fill="#00a5fb"/><polygon points="610.7,361 618.8,357.8 612.4,357 604.4,357.4" fill="#00a7ff"/><polygon points="725.9,390.9 733.9,388 727.6,376.8 719.6,380" fill="#0028ff"/><polygon points="705.1,372.6 713.2,369 706.9,360.2 698.8,363.2" fill="#0078ff"/><polygon points="676.4,362.8 684.4,359.6 678.1,356.6 670,357.9" fill="#0097ff"/><polygon points="565.7,379.3 573.8,369.8 567.5,364 559.4,373" fill="#0058ff"/><polygon points="527.1,404 535.2,399.8 528.9,396 520.8,401.6" fill="#0000e7"/><polygon points="690.8,366.8 698.8,363.2 692.5,357.2 684.4,359.6" fill="#0087ff"/><polygon points="625.1,361.4 633.1,358.3 626.8,357.5 618.8,357.8" fill="#00a7ff"/><polygon points="557.6,389 565.7,379.3 559.4,373 551.3,383.1" fill="#0028ff"/><polygon points="588.2,367.8 596.3,361.2 589.9,357.3 581.9,362.1" fill="#0087ff"/><polygon points="549.6,397.4 557.6,389 551.3,383.1 543.2,392.5" fill="#0008ff"/><polygon points="732.2,399.8 740.3,397.5 733.9,388 725.9,390.9" fill="#0008ff"/><polygon points="711.5,383.7 719.6,380 713.2,369 705.1,372.6" fill="#0048ff"/><polygon points="639.5,362.5 647.6,359 641.2,357.5 633.1,358.3" fill="#00a7ff"/><polygon points="602.6,366.9 610.7,361 604.4,357.4 596.3,361.2" fill="#0087ff"/><polygon points="541.5,403.3 549.6,397.4 543.2,392.5 535.2,399.8" fill="#0000f7"/><polygon points="580.1,376.5 588.2,367.8 581.9,362.1 573.8,369.8" fill="#0068ff"/><polygon points="653.9,364.2 661.9,360.4 655.6,357.4 647.6,359" fill="#0097ff"/><polygon points="697.1,376.9 705.1,372.6 698.8,363.2 690.8,366.8" fill="#0068ff"/><polygon points="717.8,394.2 725.9,390.9 719.6,380 711.5,383.7" fill="#0018ff"/><polygon points="668.3,367.1 676.4,362.8 670,357.9 661.9,360.4" fill="#0087ff"/><polygon points="572,386 580.1,376.5 573.8,369.8 565.7,379.3" fill="#0038ff"/><polygon points="682.7,371.2 690.8,366.8 684.4,359.6 676.4,362.8" fill="#0078ff"/><polygon points="617,366.9 625.1,361.4 618.8,357.8 610.7,361" fill="#0087ff"/><polygon points="564,394.9 572,386 565.7,379.3 557.6,389" fill="#0018ff"/><polygon points="703.4,387.8 711.5,383.7 705.1,372.6 697.1,376.9" fill="#0038ff"/><polygon points="594.5,374.8 602.6,366.9 596.3,361.2 588.2,367.8" fill="#0068ff"/><polygon points="724.1,402.3 732.2,399.8 725.9,390.9 717.8,394.2" fill="#0000f7"/><polygon points="631.4,367.7 639.5,362.5 633.1,358.3 625.1,361.4" fill="#0087ff"/><polygon points="555.9,401.9 564,394.9 557.6,389 549.6,397.4" fill="#0000f7"/><polygon points="533.4,405.8 541.5,403.3 535.2,399.8 527.1,404" fill="#0000e7"/><polygon points="689,381.7 697.1,376.9 690.8,366.8 682.7,371.2" fill="#0058ff"/><polygon points="586.5,383.9 594.5,374.8 588.2,367.8 580.1,376.5" fill="#0048ff"/><polygon points="645.8,369.5 653.9,364.2 647.6,359 639.5,362.5" fill="#0087ff"/><polygon points="709.7,397.7 717.8,394.2 711.5,383.7 703.4,387.8" fill="#0018ff"/><polygon points="608.9,374.2 617,366.9 610.7,361 602.6,366.9" fill="#0078ff"/><polygon points="674.6,376.4 682.7,371.2 676.4,362.8 668.3,367.1" fill="#0068ff"/><polygon points="660.2,372.4 668.3,367.1 661.9,360.4 653.9,364.2" fill="#0078ff"/><polygon points="578.4,392.8 586.5,383.9 580.1,376.5 572,386" fill="#0028ff"/><polygon points="547.8,406.1 555.9,401.9 549.6,397.4 541.5,403.3" fill="#0000e7"/><polygon points="695.3,392.2 703.4,387.8 697.1,376.9 689,381.7" fill="#0028ff"/><polygon points="623.3,374.6 631.4,367.7 625.1,361.4 617,366.9" fill="#0078ff"/><polygon points="570.3,400.4 578.4,392.8 572,386 564,394.9" fill="#0008ff"/><polygon points="600.9,382.7 608.9,374.2 602.6,366.9 594.5,374.8" fill="#0058ff"/><polygon points="680.9,386.9 689,381.7 682.7,371.2 674.6,376.4" fill="#0038ff"/><polygon points="716,404.8 724.1,402.3 717.8,394.2 709.7,397.7" fill="#0000f7"/><polygon points="637.7,376.1 645.8,369.5 639.5,362.5 631.4,367.7" fill="#0068ff"/><polygon points="592.8,391.4 600.9,382.7 594.5,374.8 586.5,383.9" fill="#0028ff"/><polygon points="666.5,382.3 674.6,376.4 668.3,367.1 660.2,372.4" fill="#0058ff"/><polygon points="652.1,378.7 660.2,372.4 653.9,364.2 645.8,369.5" fill="#0068ff"/><polygon points="562.2,405.7 570.3,400.4 564,394.9 555.9,401.9" fill="#0000f7"/><polygon points="701.6,401.2 709.7,397.7 703.4,387.8 695.3,392.2" fill="#0008ff"/><polygon points="615.2,382.6 623.3,374.6 617,366.9 608.9,374.2" fill="#0058ff"/><polygon points="584.7,399.2 592.8,391.4 586.5,383.9 578.4,392.8" fill="#0008ff"/><polygon points="687.2,396.8 695.3,392.2 689,381.7 680.9,386.9" fill="#0018ff"/><polygon points="629.6,383.6 637.7,376.1 631.4,367.7 623.3,374.6" fill="#0058ff"/><polygon points="539.8,407 547.8,406.1 541.5,403.3 533.4,405.8" fill="#0000f7"/><polygon points="607.2,390.9 615.2,382.6 608.9,374.2 600.9,382.7" fill="#0038ff"/><polygon points="672.9,392.4 680.9,386.9 674.6,376.4 666.5,382.3" fill="#0028ff"/><polygon points="644,385.6 652.1,378.7 645.8,369.5 637.7,376.1" fill="#0048ff"/><polygon points="658.5,388.6 666.5,382.3 660.2,372.4 652.1,378.7" fill="#0038ff"/><polygon points="576.6,405.1 584.7,399.2 578.4,392.8 570.3,400.4" fill="#0000f7"/><polygon points="599.1,398.5 607.2,390.9 600.9,382.7 592.8,391.4" fill="#0018ff"/><polygon points="621.6,391.3 629.6,383.6 623.3,374.6 615.2,382.6" fill="#0038ff"/><polygon points="554.2,408 562.2,405.7 555.9,401.9 547.8,406.1" fill="#0000e7"/><polygon points="708,407.1 716,404.8 709.7,397.7 701.6,401.2" fill="#0000f7"/><polygon points="693.6,404.6 701.6,401.2 695.3,392.2 687.2,396.8" fill="#0000f7"/><polygon points="636,392.7 644,385.6 637.7,376.1 629.6,383.6" fill="#0028ff"/><polygon points="679.2,401.3 687.2,396.8 680.9,386.9 672.9,392.4" fill="#0008ff"/><polygon points="664.8,397.9 672.9,392.4 666.5,382.3 658.5,388.6" fill="#0018ff"/><polygon points="650.4,395 658.5,388.6 652.1,378.7 644,385.6" fill="#0028ff"/><polygon points="591,404.6 599.1,398.5 592.8,391.4 584.7,399.2" fill="#0000f7"/><polygon points="613.5,398.6 621.6,391.3 615.2,382.6 607.2,390.9" fill="#0018ff"/><polygon points="568.5,408.4 576.6,405.1 570.3,400.4 562.2,405.7" fill="#0000e7"/><polygon points="627.9,399.4 636,392.7 629.6,383.6 621.6,391.3" fill="#0018ff"/><polygon points="605.4,404.6 613.5,398.6 607.2,390.9 599.1,398.5" fill="#0000f7"/><polygon points="642.3,400.9 650.4,395 644,385.6 636,392.7" fill="#0008ff"/><polygon points="656.7,403 664.8,397.9 658.5,388.6 650.4,395" fill="#0008ff"/><polygon points="583,408.6 591,404.6 584.7,399.2 576.6,405.1" fill="#0000e7"/><polygon points="671.1,405.3 679.2,401.3 672.9,392.4 664.8,397.9" fill="#0000f7"/><polygon points="685.5,407.6 693.6,404.6 687.2,396.8 679.2,401.3" fill="#0000f7"/><polygon points="699.9,409.1 708,407.1 701.6,401.2 693.6,404.6" fill="#0000e7"/><polygon points="546.1,407.4 554.2,408 547.8,406.1 539.8,407" fill="#0000bd"/><polygon points="619.8,405 627.9,399.4 621.6,391.3 613.5,398.6" fill="#0000f7"/><polygon points="597.4,408.7 605.4,404.6 599.1,398.5 591,404.6" fill="#0000f7"/><polygon points="634.2,405.9 642.3,400.9 636,392.7 627.9,399.4" fill="#0000f7"/><polygon points="560.5,409 568.5,408.4 562.2,405.7 554.2,408" fill="#0000f7"/><polygon points="648.6,407.2 656.7,403 650.4,395 642.3,400.9" fill="#0000f7"/><polygon points="663,408.7 671.1,405.3 664.8,397.9 656.7,403" fill="#0000f7"/><polygon points="611.8,409.1 619.8,405 613.5,398.6 605.4,404.6" fill="#0000f7"/><polygon points="574.9,409.9 583,408.6 576.6,405.1 568.5,408.4" fill="#0000e7"/><polygon points="677.4,409.9 685.5,407.6 679.2,401.3 671.1,405.3" fill="#0000e7"/><polygon points="691.8,410.6 699.9,409.1 693.6,404.6 685.5,407.6" fill="#0000e7"/><polygon points="626.2,409.6 634.2,405.9 627.9,399.4 619.8,405" fill="#0000f7"/><polygon points="589.3,410.6 597.4,408.7 591,404.6 583,408.6" fill="#0000e7"/><polygon points="640.5,410.3 648.6,407.2 642.3,400.9 634.2,405.9" fill="#0000e7"/><polygon points="655,411 663,408.7 656.7,403 648.6,407.2" fill="#0000e7"/><polygon points="603.7,411.1 611.8,409.1 605.4,404.6 597.4,408.7" fill="#0000e7"/><polygon points="552.4,406.9 560.5,409 554.2,408 546.1,407.4" fill="#0006b1"/><polygon points="669.3,411.5 677.4,409.9 671.1,405.3 663,408.7" fill="#0000e7"/><polygon points="618.1,411.5 626.2,409.6 619.8,405 611.8,409.1" fill="#0000e7"/><polygon points="566.8,408.8 574.9,409.9 568.5,408.4 560.5,409" fill="#000092"/><polygon points="683.8,411.3 691.8,410.6 685.5,407.6 677.4,409.9" fill="#0000f7"/><polygon points="632.5,411.9 640.5,410.3 634.2,405.9 626.2,409.6" fill="#0000e7"/><polygon points="581.2,410.1 589.3,410.6 583,408.6 574.9,409.9" fill="#0000c3"/><polygon points="646.9,412.1 655,411 648.6,407.2 640.5,410.3" fill="#0000e7"/><polygon points="595.6,411 603.7,411.1 597.4,408.7 589.3,410.6" fill="#0000dc"/><polygon points="661.3,412 669.3,411.5 663,408.7 655,411" fill="#0000f7"/><polygon points="610,411.6 618.1,411.5 611.8,409.1 603.7,411.1" fill="#0000e4"/><polygon points="675.7,411.3 683.8,411.3 677.4,409.9 669.3,411.5" fill="#0000b8"/><polygon points="624.4,411.8 632.5,411.9 626.2,409.6 618.1,411.5" fill="#0000dc"/><polygon points="558.7,405.5 566.8,408.8 560.5,409 552.4,406.9" fill="#0018ff"/><polygon points="638.8,411.8 646.9,412.1 640.5,410.3 632.5,411.9" fill="#0000c1"/><polygon points="573.1,407.5 581.2,410.1 574.9,409.9 566.8,408.8" fill="#0007e3"/><polygon points="587.5,408.9 595.6,411 589.3,410.6 581.2,410.1" fill="#0006ca"/><polygon points="653.2,411.3 661.3,412 655,411 646.9,412.1" fill="#00008a"/><polygon points="601.9,409.8 610,411.6 603.7,411.1 595.6,411" fill="#0006bb"/><polygon points="667.6,410.3 675.7,411.3 669.3,411.5 661.3,412" fill="#0006bd"/><polygon points="616.3,410.2 624.4,411.8 618.1,411.5 610,411.6" fill="#0006bd"/><polygon points="630.7,410.2 638.8,411.8 632.5,411.9 624.4,411.8" fill="#0006ce"/><polygon points="565,403.4 573.1,407.5 566.8,408.8 558.7,405.5" fill="#0028ff"/><polygon points="645.1,409.6 653.2,411.3 646.9,412.1 638.8,411.8" fill="#0007eb"/><polygon points="579.5,405.3 587.5,408.9 581.2,410.1 573.1,407.5" fill="#0018ff"/><polygon points="593.9,406.6 601.9,409.8 595.6,411 587.5,408.9" fill="#0018ff"/><polygon points="659.5,408.5 667.6,410.3 661.3,412 653.2,411.3" fill="#0018ff"/><polygon points="608.2,407.3 616.3,410.2 610,411.6 601.9,409.8" fill="#0018ff"/><polygon points="622.6,407.4 630.7,410.2 624.4,411.8 616.3,410.2" fill="#0018ff"/><polygon points="637,407 645.1,409.6 638.8,411.8 630.7,410.2" fill="#0018ff"/><polygon points="571.4,400.9 579.5,405.3 573.1,407.5 565,403.4" fill="#0038ff"/><polygon points="651.5,406 659.5,408.5 653.2,411.3 645.1,409.6" fill="#0028ff"/><polygon points="585.8,402.5 593.9,406.6 587.5,408.9 579.5,405.3" fill="#0038ff"/><polygon points="600.2,403.6 608.2,407.3 601.9,409.8 593.9,406.6" fill="#0038ff"/><polygon points="614.6,404 622.6,407.4 616.3,410.2 608.2,407.3" fill="#0038ff"/><polygon points="629,403.8 637,407 630.7,410.2 622.6,407.4" fill="#0038ff"/><polygon points="643.4,403.1 651.5,406 645.1,409.6 637,407" fill="#0038ff"/><polygon points="577.7,398.4 585.8,402.5 579.5,405.3 571.4,400.9" fill="#0048ff"/><polygon points="592.1,399.6 600.2,403.6 593.9,406.6 585.8,402.5" fill="#0048ff"/><polygon points="606.5,400.3 614.6,404 608.2,407.3 600.2,403.6" fill="#0048ff"/><polygon points="620.9,400.5 629,403.8 622.6,407.4 614.6,404" fill="#0048ff"/><polygon points="635.3,400.1 643.4,403.1 637,407 629,403.8" fill="#0048ff"/><polygon points="584,396.2 592.1,399.6 585.8,402.5 577.7,398.4" fill="#0068ff"/><polygon points="598.4,397.1 606.5,400.3 600.2,403.6 592.1,399.6" fill="#0058ff"/><polygon points="612.8,397.5 620.9,400.5 614.6,404 606.5,400.3" fill="#0058ff"/><polygon points="627.2,397.5 635.3,400.1 629,403.8 620.9,400.5" fill="#0068ff"/><polygon points="590.4,394.9 598.4,397.1 592.1,399.6 584,396.2" fill="#0068ff"/><polygon points="604.8,395.5 612.8,397.5 606.5,400.3 598.4,397.1" fill="#0068ff"/><polygon points="619.1,395.7 627.2,397.5 620.9,400.5 612.8,397.5" fill="#0068ff"/><polygon points="596.7,394.7 604.8,395.5 598.4,397.1 590.4,394.9" fill="#006ae3"/><polygon points="611.1,395.2 619.1,395.7 612.8,397.5 604.8,395.5" fill="#006be4"/><polygon points="603,396 611.1,395.2 604.8,395.5 596.7,394.7" fill="#004ba1"/></g><g stroke="#000" stroke-width="1.4"><line x1="350" y1="428.5" x2="603" y2="499"/><line x1="603" y1="499" x2="926" y2="445.7"/><line x1="342" y1="428.5" x2="350" y2="428.5"/><line x1="342" y1="338.3" x2="350" y2="338.3"/><line x1="342" y1="248.1" x2="350" y2="248.1"/><line x1="342" y1="158" x2="350" y2="158"/><line x1="350" y1="428.5" x2="358.1" y2="427.1"/><line x1="413.2" y1="446.1" x2="421.3" y2="444.8"/><line x1="476.5" y1="463.7" x2="484.6" y2="462.4"/><line x1="539.8" y1="481.3" x2="547.8" y2="480"/><line x1="603" y1="499" x2="611.1" y2="497.6"/><line x1="603" y1="499" x2="596.7" y2="497.2"/><line x1="683.8" y1="485.6" x2="677.4" y2="483.9"/><line x1="764.5" y1="472.3" x2="758.2" y2="470.6"/><line x1="845.2" y1="459" x2="838.9" y2="457.2"/><line x1="926" y1="445.7" x2="919.7" y2="443.9"/></g><g font-family="Liberation Sans" fill="#000"><text x="327" y="157.7" text-anchor="end" font-size="17">1</text><text x="327" y="247.8" text-anchor="end" font-size="17">0.5</text><text x="327" y="338" text-anchor="end" font-size="17">0</text><text x="327" y="428.2" text-anchor="end" font-size="17">-0.5</text><text x="329" y="446" text-anchor="end" font-size="17">10</text><text x="395.2" y="463.6" text-anchor="end" font-size="17">5</text><text x="458.5" y="481.2" text-anchor="end" font-size="17">0</text><text x="519.8" y="498.8" text-anchor="end" font-size="17">-5</text><text x="578" y="516.5" text-anchor="end" font-size="17">-10</text><text x="602.5" y="516.8" text-anchor="start" font-size="17">-10</text><text x="687.2" y="503.4" text-anchor="start" font-size="17">-5</text><text x="769.5" y="490.1" text-anchor="start" font-size="17">0</text><text x="850.8" y="476.8" text-anchor="start" font-size="17">5</text><text x="928.5" y="463.5" text-anchor="start" font-size="17">10</text><text x="471" y="540" text-anchor="middle" font-size="17">y</text><text x="751" y="545" text-anchor="middle" font-size="17">x</text><text transform="translate(297,296) rotate(-90)" text-anchor="middle" font-size="18">z</text></g></svg>
 </div>
 <div class="a" style="left:283px;top:4px;width:196px;height:24px;background:#fff"></div>
 <div class="a" style="left:369px;top:4px;width:103px;height:23px;background:#3b8fdd"></div>
 <div class="a" style="left:369px;top:5px;width:1.5px;height:22px;background:#222"></div>
 <div class="t" style="left:293px;top:5px;font-size:20.5px;font-weight:bold;letter-spacing:0.3px;line-height:22px;color:#000;-webkit-text-stroke:0">Normal <span style="color:#eaf4ff;letter-spacing:0.3px">Response</span></div>
</div>
<!-- plot browser tab -->
<div class="a" style="left:997px;top:38px;width:26px;height:516px;background:#f0f0f0;border-left:1px solid #d4d4d4"></div>
<div class="a" style="left:996px;top:38px;width:27px;height:106px;background:linear-gradient(90deg,#f6f6f6,#e0e0e0);border:1px solid #b0b0b0;border-right:none"></div>
<div class="t" style="left:999px;top:48px;font-size:14.5px;letter-spacing:0.55px;color:#222;transform-origin:0 0;transform:translate(17px,0) rotate(90deg)">Plot Browser</div>

<!-- property editor -->
<div class="a" style="left:0;top:552px;width:1023px;height:8px;background:#f0f0f0"></div><div class="a" style="left:0;top:558px;width:996px;height:1px;background:#cfcfcf"></div>
<div class="t" style="left:5px;top:562px;font-size:12.5px;font-style:italic;color:#8a8a8a;letter-spacing:0.2px;-webkit-text-stroke:0">Property Editor - Text</div>
<svg class="a" style="left:134px;top:563.6px" width="830" height="10"><defs><pattern id="dp2" width="7.8" height="8" patternUnits="userSpaceOnUse"><circle cx="2" cy="4" r="0.95" fill="#7a7a7a"/><circle cx="5.9" cy="8" r="0.95" fill="#7a7a7a"/><circle cx="5.9" cy="0" r="0.95" fill="#7a7a7a"/></pattern></defs><rect x="0" y="0" width="830" height="10" fill="url(#dp2)"/></svg>
<svg class="a" style="left:968px;top:559px" width="20" height="20"><circle cx="10" cy="10" r="7.5" fill="#f6f6f6" stroke="#555" stroke-width="1.3"/><path d="M6 7.5h8l-4 5z" fill="#333"/></svg>
<div class="a" style="left:3px;top:580px;width:990px;height:185px;border:1px solid #a8a8a8;background:#f0f0f0"></div>
<div class="a" style="left:993px;top:556px;width:30px;height:204px;background:#f6f6f6;border-left:1px solid #cfcfcf"></div><div class="a" style="left:1021px;top:140px;width:2px;height:620px;background:#c8c4c8"></div>

<div class="t" style="left:13px;top:600px;letter-spacing:0.34px">Line Style:</div>
<div class="combo" style="left:106px;top:592px;width:130px;height:31px"><div class="a" style="left:6px;top:14px;width:53px;height:1.5px;background:#111"></div><div class="a" style="left:104px;top:1px;width:24px;height:27px;background:linear-gradient(#f4f4f4,#d4d4d4)"></div><div class="darr" style="left:111px;top:13px"></div></div>
<div class="t" style="left:13px;top:639px">Line Width:</div>
<div class="combo" style="left:106px;top:631px;width:130px;height:31px;border-radius:0"><div class="t" style="left:2px;top:7px">0.5</div><div class="darr" style="left:111px;top:13px"></div></div>
<div class="t" style="left:13px;top:680px;letter-spacing:0.47px">Edge Color:</div>
<div class="btn" style="left:107px;top:671px;width:45px;height:32px"><svg class="a" style="left:0;top:0" width="45" height="32"><path d="M4 20h4" stroke="#111" stroke-width="1.5"/><path d="M8 21l1.5-5.5 10-10 4 4-10 10z" fill="#111"/><path d="M11 17.5l9.5-9.5" stroke="#fff" stroke-width="0.8"/><path d="M20 4.5l2.5-2 3.5 3.5-2 2.5z" fill="#c8c020"/><rect x="5" y="22.5" width="23" height="5" fill="#fff" stroke="#111" stroke-width="1.4"/><path d="M32.5 16h5l-2.5 3z" fill="#333"/></svg></div>
<div class="t" style="left:13px;top:725px">Background:</div>
<div class="btn" style="left:107px;top:716px;width:45px;height:32px"><svg class="a" style="left:0;top:0" width="45" height="32"><path d="M7 13l7-7 7.5 7.5-7 7z" fill="#fff" stroke="#111" stroke-width="1.5"/><path d="M12 8l-1-4q1-2 3 0l1 3" fill="none" stroke="#111" stroke-width="1.2"/><path d="M19 10q5-1 6 4l-0.5 5q-2 0-2-3q0-3-2-3z" fill="#1a3a9c"/><rect x="5" y="22.5" width="23" height="5" fill="#fff" stroke="#111" stroke-width="1.4"/><path d="M32.5 16h5l-2.5 3z" fill="#333"/></svg></div>

<div class="t" style="left:278px;top:600px">Interpreter:</div>
<div class="combo" style="left:364px;top:592px;width:78px;height:31px"><div class="t" style="left:6px;top:7px">Tex</div><div class="a" style="left:52px;top:1px;width:24px;height:27px;background:linear-gradient(#f4f4f4,#d4d4d4)"></div><div class="darr" style="left:59px;top:13px"></div></div>
<div class="t" style="left:278px;top:639px;letter-spacing:0.98px">Alignment:</div>
<svg class="a" style="left:364px;top:631px" width="92" height="30">
 <rect x="1.5" y="1.5" width="26" height="26" rx="3" fill="#f0f0f0" stroke="#8a8a8a" stroke-width="1.2"/>
 <rect x="32" y="1.5" width="26" height="26" rx="3" fill="#8ec8ef" stroke="#3a6f98" stroke-width="1.4"/>
 <rect x="62.5" y="1.5" width="26" height="26" rx="3" fill="#f0f0f0" stroke="#8a8a8a" stroke-width="1.2"/>
 <g stroke="#222" stroke-width="1.4">
  <path d="M6 7.5h18M6 10.5h12M6 13.5h18M6 16.5h12M6 19.5h18M6 22.5h12"/>
  <path d="M36 7.5h18M39 10.5h12M36 13.5h18M39 16.5h12M36 19.5h18M39 22.5h12"/>
  <path d="M66 7.5h18M72 10.5h12M66 13.5h18M72 16.5h12M66 19.5h18M72 22.5h12"/>
 </g>
</svg>
<div class="t" style="left:320px;top:680px">Font:</div>
<div class="combo" style="left:365px;top:675px;width:270px;height:29px;background:linear-gradient(#f6f6f6,#e2e2e2 55%,#d8d8d8)"><div class="t" style="left:5px;top:6px">Helvetica</div><div class="darr" style="left:251px;top:11px"></div></div>
<div class="combo" style="left:640px;top:674px;width:92px;height:31px"><div class="t" style="left:3px;top:7px">12.0</div><div class="darr" style="left:73px;top:12px"></div></div>
<div class="btn" style="left:368px;top:715px;width:46px;height:31px"><svg class="a" style="left:0;top:0" width="46" height="31"><text x="8" y="19" font-family="Liberation Serif" font-size="17" fill="#111">A</text><rect x="6" y="21" width="18" height="4" fill="#111"/><path d="M32 14h5l-2.5 3z" fill="#333"/></svg></div>
<div class="combo" style="left:421px;top:715px;width:153px;height:31px;background:linear-gradient(#fff,#fff 60%,#f0f0f0)"><div class="t" style="left:5px;top:7px">Bold</div><div class="a" style="left:127px;top:1px;width:24px;height:27px;background:linear-gradient(#f4f4f4,#d4d4d4)"></div><div class="darr" style="left:134px;top:12px"></div></div>
<div class="combo" style="left:577px;top:715px;width:153px;height:31px;background:linear-gradient(#fff,#fff 60%,#f0f0f0)"><div class="t" style="left:5px;top:7px">Normal</div><div class="a" style="left:127px;top:1px;width:24px;height:27px;background:linear-gradient(#f4f4f4,#d4d4d4)"></div><div class="darr" style="left:134px;top:12px"></div></div>

<div class="btn" style="left:834px;top:593px;width:152px;height:30px;border-radius:4px;background:linear-gradient(#f8f8f8,#e0e0e0)"><div class="t" style="left:14px;top:6px">More Properties...</div></div>

<svg class="a" style="left:838px;top:724px" width="100" height="30">
 <g fill="#2ab3a0" stroke="#2ab3a0" transform="translate(5,3) skewX(-6)">
  <g stroke="none">
   <rect x="0" y="0" width="14" height="3"/><rect x="3" y="0" width="3.2" height="13"/><rect x="9" y="0" width="3.2" height="13"/><rect x="2" y="4.5" width="10" height="2.4"/><rect x="2" y="8.2" width="10" height="2.4"/>
   <rect x="15" y="0" width="13" height="3"/>
   <rect x="0" y="12" width="28.5" height="3.2"/>
   <rect x="12" y="15" width="4" height="8.5"/>
  </g>
  <g fill="none" stroke-width="3.2">
   <path d="M26 3L16 12M18 4l10 8M8 16L1.5 23M5 17l6 2M19 16l9 7M17 19.5l6-3"/>
  </g>
  <g stroke="none" transform="translate(33,0)">
   <rect x="5" y="0" width="3.5" height="3"/><rect x="14" y="0" width="3.5" height="3"/>
   <rect x="3" y="2.5" width="3.5" height="11"/><rect x="6" y="3" width="21" height="2.6"/><rect x="8" y="6.5" width="17" height="2.3"/><rect x="8" y="9.5" width="17" height="2.3"/><rect x="6" y="12" width="21" height="2.6"/><rect x="14" y="3" width="3.2" height="11"/>
   <rect x="0" y="15" width="28.5" height="3"/><rect x="12.5" y="14" width="4" height="9.5"/>
  </g>
  <g fill="none" stroke-width="3.3" transform="translate(33,0)"><path d="M12 18L1.5 23.5M17 18l10 5.5"/></g>
  <g stroke="none" transform="translate(64,0)">
   <path d="M0 0h28v19q0 4.5-4 4.5h-3v-3.5h2.5V4H4v19.5H0z"/>
  </g>
  <g fill="none" stroke-width="2.6" transform="translate(64,0)"><path d="M6 6l6 14M12 6L6 20M14 6l6 14M20 6l-6 14"/></g>
 </g>
</svg>
</body></html>
